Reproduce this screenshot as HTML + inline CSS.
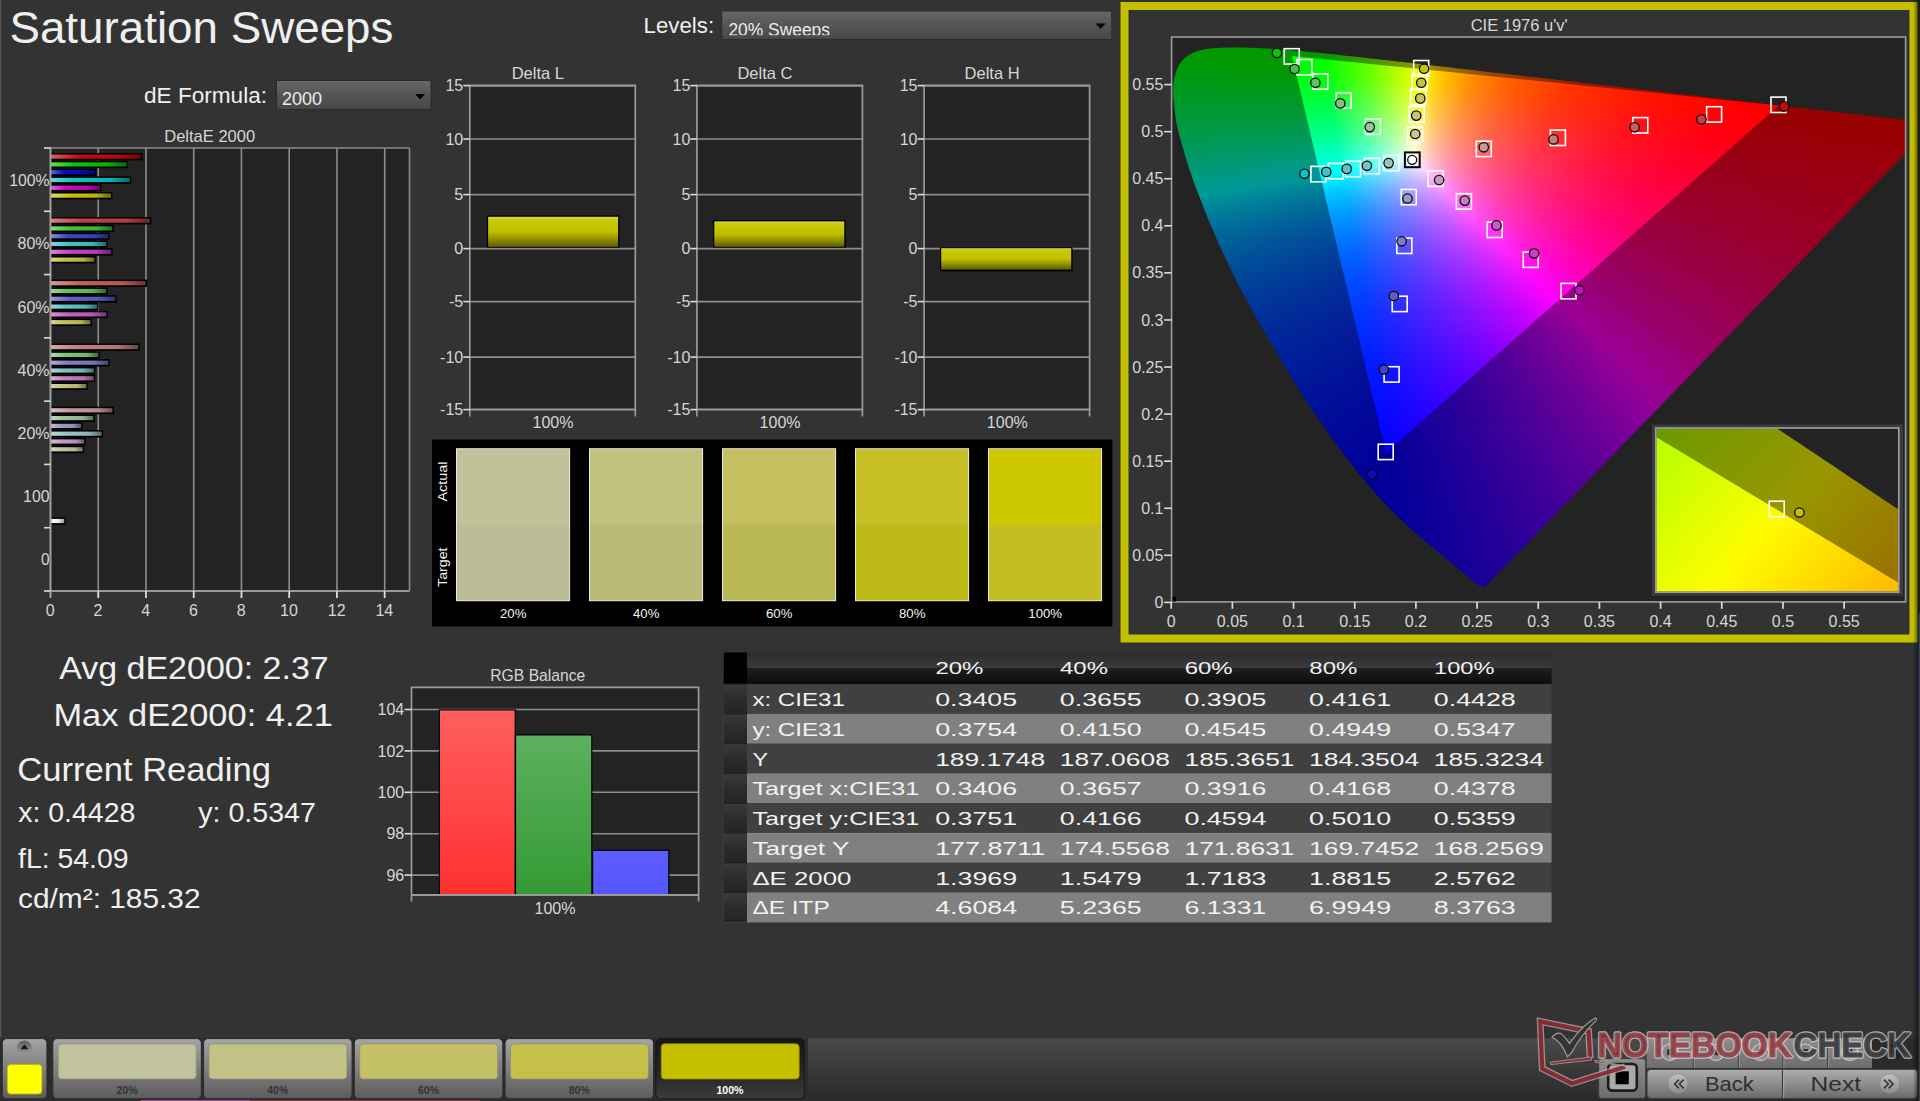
<!DOCTYPE html><html><head><meta charset="utf-8"><title>Saturation Sweeps</title><style>html,body{margin:0;padding:0;background:#333333;width:1920px;height:1101px;overflow:hidden;font-family:"Liberation Sans",sans-serif}text{white-space:pre}</style></head><body><svg width="1920" height="1101" viewBox="0 0 1920 1101" font-family="'Liberation Sans', sans-serif" style="position:absolute;left:0;top:0;display:block"><defs><linearGradient id="dd" x1="0" y1="0" x2="0" y2="1"><stop offset="0" stop-color="#676767"/><stop offset="0.5" stop-color="#555555"/><stop offset="1" stop-color="#474747"/></linearGradient><clipPath id="cplv"><rect x="722" y="11" width="389" height="24.2"/></clipPath><linearGradient id="b0"><stop offset="0" stop-color="#da6060"/><stop offset=".3" stop-color="#c60a0a"/><stop offset=".75" stop-color="#b60909"/><stop offset="1" stop-color="#6d0606"/></linearGradient><linearGradient id="b1"><stop offset="0" stop-color="#60d860"/><stop offset=".3" stop-color="#0ac30a"/><stop offset=".75" stop-color="#09b309"/><stop offset="1" stop-color="#066b06"/></linearGradient><linearGradient id="b2"><stop offset="0" stop-color="#6060da"/><stop offset=".3" stop-color="#0a0ac6"/><stop offset=".75" stop-color="#0909b6"/><stop offset="1" stop-color="#06066d"/></linearGradient><linearGradient id="b3"><stop offset="0" stop-color="#60d8d8"/><stop offset=".3" stop-color="#0ac3c3"/><stop offset=".75" stop-color="#09b3b3"/><stop offset="1" stop-color="#066b6b"/></linearGradient><linearGradient id="b4"><stop offset="0" stop-color="#da60da"/><stop offset=".3" stop-color="#c60ac6"/><stop offset=".75" stop-color="#b609b6"/><stop offset="1" stop-color="#6d066d"/></linearGradient><linearGradient id="b5"><stop offset="0" stop-color="#dad860"/><stop offset=".3" stop-color="#c6c30a"/><stop offset=".75" stop-color="#b6b309"/><stop offset="1" stop-color="#6d6b06"/></linearGradient><linearGradient id="b6"><stop offset="0" stop-color="#da8484"/><stop offset=".3" stop-color="#c64141"/><stop offset=".75" stop-color="#b63c3c"/><stop offset="1" stop-color="#6d2424"/></linearGradient><linearGradient id="b7"><stop offset="0" stop-color="#84d884"/><stop offset=".3" stop-color="#41c341"/><stop offset=".75" stop-color="#3cb33c"/><stop offset="1" stop-color="#246b24"/></linearGradient><linearGradient id="b8"><stop offset="0" stop-color="#8484da"/><stop offset=".3" stop-color="#4141c6"/><stop offset=".75" stop-color="#3c3cb6"/><stop offset="1" stop-color="#24246d"/></linearGradient><linearGradient id="b9"><stop offset="0" stop-color="#84d8d8"/><stop offset=".3" stop-color="#41c3c3"/><stop offset=".75" stop-color="#3cb3b3"/><stop offset="1" stop-color="#246b6b"/></linearGradient><linearGradient id="b10"><stop offset="0" stop-color="#da84da"/><stop offset=".3" stop-color="#c641c6"/><stop offset=".75" stop-color="#b63cb6"/><stop offset="1" stop-color="#6d246d"/></linearGradient><linearGradient id="b11"><stop offset="0" stop-color="#dad884"/><stop offset=".3" stop-color="#c6c341"/><stop offset=".75" stop-color="#b6b33c"/><stop offset="1" stop-color="#6d6b24"/></linearGradient><linearGradient id="b12"><stop offset="0" stop-color="#da9797"/><stop offset=".3" stop-color="#c65f5f"/><stop offset=".75" stop-color="#b65757"/><stop offset="1" stop-color="#6d3434"/></linearGradient><linearGradient id="b13"><stop offset="0" stop-color="#97d897"/><stop offset=".3" stop-color="#5fc35f"/><stop offset=".75" stop-color="#57b357"/><stop offset="1" stop-color="#346b34"/></linearGradient><linearGradient id="b14"><stop offset="0" stop-color="#9797da"/><stop offset=".3" stop-color="#5f5fc6"/><stop offset=".75" stop-color="#5757b6"/><stop offset="1" stop-color="#34346d"/></linearGradient><linearGradient id="b15"><stop offset="0" stop-color="#97d8d8"/><stop offset=".3" stop-color="#5fc3c3"/><stop offset=".75" stop-color="#57b3b3"/><stop offset="1" stop-color="#346b6b"/></linearGradient><linearGradient id="b16"><stop offset="0" stop-color="#da97da"/><stop offset=".3" stop-color="#c65fc6"/><stop offset=".75" stop-color="#b657b6"/><stop offset="1" stop-color="#6d346d"/></linearGradient><linearGradient id="b17"><stop offset="0" stop-color="#dad897"/><stop offset=".3" stop-color="#c6c35f"/><stop offset=".75" stop-color="#b6b357"/><stop offset="1" stop-color="#6d6b34"/></linearGradient><linearGradient id="b18"><stop offset="0" stop-color="#daaaaa"/><stop offset=".3" stop-color="#c67d7d"/><stop offset=".75" stop-color="#b67373"/><stop offset="1" stop-color="#6d4545"/></linearGradient><linearGradient id="b19"><stop offset="0" stop-color="#aad8aa"/><stop offset=".3" stop-color="#7dc37d"/><stop offset=".75" stop-color="#73b373"/><stop offset="1" stop-color="#456b45"/></linearGradient><linearGradient id="b20"><stop offset="0" stop-color="#aaaada"/><stop offset=".3" stop-color="#7d7dc6"/><stop offset=".75" stop-color="#7373b6"/><stop offset="1" stop-color="#45456d"/></linearGradient><linearGradient id="b21"><stop offset="0" stop-color="#aad8d8"/><stop offset=".3" stop-color="#7dc3c3"/><stop offset=".75" stop-color="#73b3b3"/><stop offset="1" stop-color="#456b6b"/></linearGradient><linearGradient id="b22"><stop offset="0" stop-color="#daaada"/><stop offset=".3" stop-color="#c67dc6"/><stop offset=".75" stop-color="#b673b6"/><stop offset="1" stop-color="#6d456d"/></linearGradient><linearGradient id="b23"><stop offset="0" stop-color="#dad8aa"/><stop offset=".3" stop-color="#c6c37d"/><stop offset=".75" stop-color="#b6b373"/><stop offset="1" stop-color="#6d6b45"/></linearGradient><linearGradient id="b24"><stop offset="0" stop-color="#dabebe"/><stop offset=".3" stop-color="#c69b9b"/><stop offset=".75" stop-color="#b68f8f"/><stop offset="1" stop-color="#6d5555"/></linearGradient><linearGradient id="b25"><stop offset="0" stop-color="#bed8be"/><stop offset=".3" stop-color="#9bc39b"/><stop offset=".75" stop-color="#8fb38f"/><stop offset="1" stop-color="#556b55"/></linearGradient><linearGradient id="b26"><stop offset="0" stop-color="#bebeda"/><stop offset=".3" stop-color="#9b9bc6"/><stop offset=".75" stop-color="#8f8fb6"/><stop offset="1" stop-color="#55556d"/></linearGradient><linearGradient id="b27"><stop offset="0" stop-color="#bed8d8"/><stop offset=".3" stop-color="#9bc3c3"/><stop offset=".75" stop-color="#8fb3b3"/><stop offset="1" stop-color="#556b6b"/></linearGradient><linearGradient id="b28"><stop offset="0" stop-color="#dabeda"/><stop offset=".3" stop-color="#c69bc6"/><stop offset=".75" stop-color="#b68fb6"/><stop offset="1" stop-color="#6d556d"/></linearGradient><linearGradient id="b29"><stop offset="0" stop-color="#dad8be"/><stop offset=".3" stop-color="#c6c39b"/><stop offset=".75" stop-color="#b6b38f"/><stop offset="1" stop-color="#6d6b55"/></linearGradient><linearGradient id="bw"><stop offset="0" stop-color="#ffffff"/><stop offset=".6" stop-color="#e8e8e8"/><stop offset="1" stop-color="#9a9a9a"/></linearGradient><linearGradient id="yb" x1="0" y1="0" x2="0" y2="1"><stop offset="0" stop-color="#dcdc48"/><stop offset=".09" stop-color="#cccb10"/><stop offset=".3" stop-color="#c4c400"/><stop offset=".5" stop-color="#c0c000"/><stop offset="1" stop-color="#5e5e00"/></linearGradient><linearGradient id="rr" x1="0" y1="0" x2="0" y2="1"><stop offset="0" stop-color="#ff5e5e"/><stop offset="1" stop-color="#ff3030"/></linearGradient><linearGradient id="rg" x1="0" y1="0" x2="0" y2="1"><stop offset="0" stop-color="#5eb05e"/><stop offset="1" stop-color="#349a34"/></linearGradient><linearGradient id="rb" x1="0" y1="0" x2="0" y2="1"><stop offset="0" stop-color="#5c5cff"/><stop offset="1" stop-color="#5656ff"/></linearGradient><linearGradient id="th" x1="0" y1="0" x2="0" y2="1"><stop offset="0" stop-color="#2c2c2c"/><stop offset="0.48" stop-color="#3a3a3a"/><stop offset="0.5" stop-color="#1f1f1f"/><stop offset="1" stop-color="#0c0c0c"/></linearGradient><linearGradient id="tr" x1="0" y1="0" x2="0" y2="1"><stop offset="0" stop-color="#3a3a3a"/><stop offset="0.5" stop-color="#2c2c2c"/><stop offset="1" stop-color="#242424"/></linearGradient><linearGradient id="bb" x1="0" y1="0" x2="0" y2="1"><stop offset="0" stop-color="#4a4a4a"/><stop offset="0.35" stop-color="#3e3e3e"/><stop offset="1" stop-color="#2a2a2a"/></linearGradient><linearGradient id="bt" x1="0" y1="0" x2="0" y2="1"><stop offset="0" stop-color="#a6a6a6"/><stop offset="0.12" stop-color="#9a9a9a"/><stop offset="1" stop-color="#5c5c5c"/></linearGradient><linearGradient id="bs" x1="0" y1="0" x2="0" y2="1"><stop offset="0" stop-color="#161616"/><stop offset="0.6" stop-color="#282828"/><stop offset="1" stop-color="#3c3c3c"/></linearGradient><linearGradient id="ic" x1="0" y1="0" x2="0" y2="1"><stop offset="0" stop-color="#5e5e5e"/><stop offset="1" stop-color="#9a9a9a"/></linearGradient><linearGradient id="g1" x1="0" y1="0" x2="0" y2="1"><stop offset="0" stop-color="#8e8e8e"/><stop offset="1" stop-color="#6c6c6c"/></linearGradient><linearGradient id="g2" x1="0" y1="0" x2="0" y2="1"><stop offset="0" stop-color="#adadad"/><stop offset="0.5" stop-color="#8e8e8e"/><stop offset="1" stop-color="#6a6a6a"/></linearGradient><linearGradient id="g3" x1="0" y1="0" x2="0" y2="1"><stop offset="0" stop-color="#c0c0c0"/><stop offset="1" stop-color="#8a8a8a"/></linearGradient><linearGradient id="rs" x1="0" y1="0" x2="1" y2="0"><stop offset="0" stop-color="#000" stop-opacity="0"/><stop offset="1" stop-color="#000" stop-opacity="0.55"/></linearGradient></defs><text x="9.4" y="42.5" font-size="44.7" fill="#efefef" textLength="384" lengthAdjust="spacingAndGlyphs">Saturation Sweeps</text>
<text x="144" y="103.2" font-size="21.4" fill="#efefef" textLength="123" lengthAdjust="spacingAndGlyphs">dE Formula:</text>
<rect x="276.5" y="80.5" width="154.5" height="29" fill="url(#dd)" stroke="#2b2b2b" stroke-width="1"/>
<text x="282" y="105" font-size="18" fill="#ececec" textLength="40" lengthAdjust="spacingAndGlyphs">2000</text>
<path d="M415.2,94 L425.2,94 L420.2,99.5Z" fill="#000"/>
<text x="643.6" y="33.3" font-size="21.6" fill="#efefef" textLength="70.5" lengthAdjust="spacingAndGlyphs">Levels:</text>
<rect x="721.7" y="11" width="390" height="28.6" fill="url(#dd)" stroke="#2b2b2b" stroke-width="1"/>
<g clip-path="url(#cplv)">
<text x="728.4" y="35.6" font-size="18" fill="#ececec" textLength="101.6" lengthAdjust="spacingAndGlyphs">20% Sweeps</text>
</g>
<path d="M1095.4,23.4 L1105.8,23.4 L1100.6,28.8Z" fill="#000"/>
<rect x="50.5" y="148" width="359" height="443" fill="#232323"/>
<line x1="98.24" y1="148" x2="98.24" y2="591" stroke="#8c8c8c" stroke-width="1.6"/>
<line x1="145.98" y1="148" x2="145.98" y2="591" stroke="#8c8c8c" stroke-width="1.6"/>
<line x1="193.72" y1="148" x2="193.72" y2="591" stroke="#8c8c8c" stroke-width="1.6"/>
<line x1="241.46" y1="148" x2="241.46" y2="591" stroke="#8c8c8c" stroke-width="1.6"/>
<line x1="289.2" y1="148" x2="289.2" y2="591" stroke="#8c8c8c" stroke-width="1.6"/>
<line x1="336.94" y1="148" x2="336.94" y2="591" stroke="#8c8c8c" stroke-width="1.6"/>
<line x1="384.68" y1="148" x2="384.68" y2="591" stroke="#8c8c8c" stroke-width="1.6"/>
<rect x="51" y="153" width="91.4608" height="7.4" fill="#000"/>
<rect x="51" y="154.5" width="90.0608" height="4.2" fill="url(#b0)"/>
<rect x="51" y="160.8" width="76.9001" height="7.4" fill="#000"/>
<rect x="51" y="162.3" width="75.5001" height="4.2" fill="url(#b1)"/>
<rect x="51" y="168.6" width="45.3917" height="7.4" fill="#000"/>
<rect x="51" y="170.1" width="43.9917" height="4.2" fill="url(#b2)"/>
<rect x="51" y="176.4" width="80.2419" height="7.4" fill="#000"/>
<rect x="51" y="177.9" width="78.8419" height="4.2" fill="url(#b3)"/>
<rect x="51" y="184.2" width="50.4044" height="7.4" fill="#000"/>
<rect x="51" y="185.7" width="49.0044" height="4.2" fill="url(#b4)"/>
<rect x="51" y="192" width="61.3846" height="7.4" fill="#000"/>
<rect x="51" y="193.5" width="59.9846" height="4.2" fill="url(#b5)"/>
<rect x="51" y="217" width="100.293" height="7.4" fill="#000"/>
<rect x="51" y="218.5" width="98.8927" height="4.2" fill="url(#b6)"/>
<rect x="51" y="224.8" width="62.8168" height="7.4" fill="#000"/>
<rect x="51" y="226.3" width="61.4168" height="4.2" fill="url(#b7)"/>
<rect x="51" y="232.6" width="58.7589" height="7.4" fill="#000"/>
<rect x="51" y="234.1" width="57.3589" height="4.2" fill="url(#b8)"/>
<rect x="51" y="240.4" width="56.6106" height="7.4" fill="#000"/>
<rect x="51" y="241.9" width="55.2106" height="4.2" fill="url(#b9)"/>
<rect x="51" y="248.2" width="61.6233" height="7.4" fill="#000"/>
<rect x="51" y="249.7" width="60.2233" height="4.2" fill="url(#b10)"/>
<rect x="51" y="256" width="44.6756" height="7.4" fill="#000"/>
<rect x="51" y="257.5" width="43.2756" height="4.2" fill="url(#b11)"/>
<rect x="51" y="279.6" width="95.9961" height="7.4" fill="#000"/>
<rect x="51" y="281.1" width="94.5961" height="4.2" fill="url(#b12)"/>
<rect x="51" y="287.4" width="56.6106" height="7.4" fill="#000"/>
<rect x="51" y="288.9" width="55.2106" height="4.2" fill="url(#b13)"/>
<rect x="51" y="295.2" width="65.9199" height="7.4" fill="#000"/>
<rect x="51" y="296.7" width="64.5199" height="4.2" fill="url(#b14)"/>
<rect x="51" y="303" width="47.54" height="7.4" fill="#000"/>
<rect x="51" y="304.5" width="46.14" height="4.2" fill="url(#b15)"/>
<rect x="51" y="310.8" width="56.8493" height="7.4" fill="#000"/>
<rect x="51" y="312.3" width="55.4493" height="4.2" fill="url(#b16)"/>
<rect x="51" y="318.6" width="40.8564" height="7.4" fill="#000"/>
<rect x="51" y="320.1" width="39.4564" height="4.2" fill="url(#b17)"/>
<rect x="51" y="343.5" width="88.5964" height="7.4" fill="#000"/>
<rect x="51" y="345" width="87.1964" height="4.2" fill="url(#b18)"/>
<rect x="51" y="351.3" width="48.7335" height="7.4" fill="#000"/>
<rect x="51" y="352.8" width="47.3335" height="4.2" fill="url(#b19)"/>
<rect x="51" y="359.1" width="58.7589" height="7.4" fill="#000"/>
<rect x="51" y="360.6" width="57.3589" height="4.2" fill="url(#b20)"/>
<rect x="51" y="366.9" width="44.1982" height="7.4" fill="#000"/>
<rect x="51" y="368.4" width="42.7982" height="4.2" fill="url(#b21)"/>
<rect x="51" y="374.7" width="44.1982" height="7.4" fill="#000"/>
<rect x="51" y="376.2" width="42.7982" height="4.2" fill="url(#b22)"/>
<rect x="51" y="382.5" width="36.7985" height="7.4" fill="#000"/>
<rect x="51" y="384" width="35.3985" height="4.2" fill="url(#b23)"/>
<rect x="51" y="406.7" width="62.8168" height="7.4" fill="#000"/>
<rect x="51" y="408.2" width="61.4168" height="4.2" fill="url(#b24)"/>
<rect x="51" y="414.5" width="43.7208" height="7.4" fill="#000"/>
<rect x="51" y="416" width="42.3208" height="4.2" fill="url(#b25)"/>
<rect x="51" y="422.3" width="31.5471" height="7.4" fill="#000"/>
<rect x="51" y="423.8" width="30.1471" height="4.2" fill="url(#b26)"/>
<rect x="51" y="430.1" width="52.0753" height="7.4" fill="#000"/>
<rect x="51" y="431.6" width="50.6753" height="4.2" fill="url(#b27)"/>
<rect x="51" y="437.9" width="34.6502" height="7.4" fill="#000"/>
<rect x="51" y="439.4" width="33.2502" height="4.2" fill="url(#b28)"/>
<rect x="51" y="445.7" width="33.218" height="7.4" fill="#000"/>
<rect x="51" y="447.2" width="31.818" height="4.2" fill="url(#b29)"/>
<rect x="51" y="517.4" width="14.6" height="7.4" fill="#000"/>
<rect x="51" y="518.9" width="13.2" height="4.2" fill="url(#bw)"/>
<line x1="50.2" y1="148" x2="409.5" y2="148" stroke="#8c8c8c" stroke-width="1.6"/>
<line x1="409.5" y1="148" x2="409.5" y2="591" stroke="#8c8c8c" stroke-width="1.6"/>
<line x1="50.5" y1="591" x2="409.5" y2="591" stroke="#9a9a9a" stroke-width="1.8"/>
<line x1="50.5" y1="147.2" x2="50.5" y2="598" stroke="#a0a0a0" stroke-width="2"/>
<line x1="44" y1="148" x2="50.5" y2="148" stroke="#dddddd" stroke-width="1.6"/>
<line x1="44" y1="211.286" x2="50.5" y2="211.286" stroke="#dddddd" stroke-width="1.6"/>
<line x1="44" y1="274.571" x2="50.5" y2="274.571" stroke="#dddddd" stroke-width="1.6"/>
<line x1="44" y1="337.857" x2="50.5" y2="337.857" stroke="#dddddd" stroke-width="1.6"/>
<line x1="44" y1="401.143" x2="50.5" y2="401.143" stroke="#dddddd" stroke-width="1.6"/>
<line x1="44" y1="464.429" x2="50.5" y2="464.429" stroke="#dddddd" stroke-width="1.6"/>
<line x1="44" y1="527.714" x2="50.5" y2="527.714" stroke="#dddddd" stroke-width="1.6"/>
<line x1="44" y1="591" x2="50.5" y2="591" stroke="#dddddd" stroke-width="1.6"/>
<line x1="98.24" y1="591" x2="98.24" y2="598" stroke="#dddddd" stroke-width="1.8"/>
<line x1="145.98" y1="591" x2="145.98" y2="598" stroke="#dddddd" stroke-width="1.8"/>
<line x1="193.72" y1="591" x2="193.72" y2="598" stroke="#dddddd" stroke-width="1.8"/>
<line x1="241.46" y1="591" x2="241.46" y2="598" stroke="#dddddd" stroke-width="1.8"/>
<line x1="289.2" y1="591" x2="289.2" y2="598" stroke="#dddddd" stroke-width="1.8"/>
<line x1="336.94" y1="591" x2="336.94" y2="598" stroke="#dddddd" stroke-width="1.8"/>
<line x1="384.68" y1="591" x2="384.68" y2="598" stroke="#dddddd" stroke-width="1.8"/>
<text x="49.6" y="186.4" font-size="16" fill="#d6d6d6" text-anchor="end" textLength="40.4" lengthAdjust="spacingAndGlyphs">100%</text>
<text x="49.6" y="248.8" font-size="16" fill="#d6d6d6" text-anchor="end" textLength="32" lengthAdjust="spacingAndGlyphs">80%</text>
<text x="49.6" y="313.3" font-size="16" fill="#d6d6d6" text-anchor="end" textLength="32" lengthAdjust="spacingAndGlyphs">60%</text>
<text x="49.6" y="375.8" font-size="16" fill="#d6d6d6" text-anchor="end" textLength="32" lengthAdjust="spacingAndGlyphs">40%</text>
<text x="49.6" y="438.8" font-size="16" fill="#d6d6d6" text-anchor="end" textLength="32" lengthAdjust="spacingAndGlyphs">20%</text>
<text x="49.6" y="501.8" font-size="16" fill="#d6d6d6" text-anchor="end" textLength="26.5" lengthAdjust="spacingAndGlyphs">100</text>
<text x="49.6" y="564.8" font-size="16" fill="#d6d6d6" text-anchor="end" textLength="8.6" lengthAdjust="spacingAndGlyphs">0</text>
<text x="50.2" y="615.7" font-size="16" fill="#d6d6d6" text-anchor="middle">0</text>
<text x="97.94" y="615.7" font-size="16" fill="#d6d6d6" text-anchor="middle">2</text>
<text x="145.68" y="615.7" font-size="16" fill="#d6d6d6" text-anchor="middle">4</text>
<text x="193.42" y="615.7" font-size="16" fill="#d6d6d6" text-anchor="middle">6</text>
<text x="241.16" y="615.7" font-size="16" fill="#d6d6d6" text-anchor="middle">8</text>
<text x="288.9" y="615.7" font-size="16" fill="#d6d6d6" text-anchor="middle">10</text>
<text x="336.64" y="615.7" font-size="16" fill="#d6d6d6" text-anchor="middle">12</text>
<text x="384.38" y="615.7" font-size="16" fill="#d6d6d6" text-anchor="middle">14</text>
<text x="164.2" y="142" font-size="16.6" fill="#d6d6d6" textLength="91" lengthAdjust="spacingAndGlyphs">DeltaE 2000</text>
<rect x="469.8" y="85.6" width="165.5" height="324" fill="#232323"/>
<line x1="469.8" y1="139" x2="635.3" y2="139" stroke="#8c8c8c" stroke-width="1.6"/>
<line x1="469.8" y1="194.6" x2="635.3" y2="194.6" stroke="#8c8c8c" stroke-width="1.6"/>
<line x1="469.8" y1="248.6" x2="635.3" y2="248.6" stroke="#8c8c8c" stroke-width="1.6"/>
<line x1="469.8" y1="301.6" x2="635.3" y2="301.6" stroke="#8c8c8c" stroke-width="1.6"/>
<line x1="469.8" y1="357.1" x2="635.3" y2="357.1" stroke="#8c8c8c" stroke-width="1.6"/>
<line x1="469" y1="85.6" x2="636.1" y2="85.6" stroke="#9a9a9a" stroke-width="2.2"/>
<line x1="469" y1="409.6" x2="636.1" y2="409.6" stroke="#9a9a9a" stroke-width="2"/>
<line x1="469.8" y1="85.6" x2="469.8" y2="416.6" stroke="#9a9a9a" stroke-width="1.7"/>
<line x1="635.3" y1="85.6" x2="635.3" y2="416.6" stroke="#9a9a9a" stroke-width="1.7"/>
<line x1="463.3" y1="85.6" x2="469.8" y2="85.6" stroke="#dddddd" stroke-width="1.6"/>
<text x="463.2" y="91.3" font-size="16" fill="#d6d6d6" text-anchor="end">15</text>
<line x1="463.3" y1="139" x2="469.8" y2="139" stroke="#dddddd" stroke-width="1.6"/>
<text x="463.2" y="144.7" font-size="16" fill="#d6d6d6" text-anchor="end">10</text>
<line x1="463.3" y1="194.6" x2="469.8" y2="194.6" stroke="#dddddd" stroke-width="1.6"/>
<text x="463.2" y="200.3" font-size="16" fill="#d6d6d6" text-anchor="end">5</text>
<line x1="463.3" y1="248.6" x2="469.8" y2="248.6" stroke="#dddddd" stroke-width="1.6"/>
<text x="463.2" y="254.3" font-size="16" fill="#d6d6d6" text-anchor="end">0</text>
<line x1="463.3" y1="301.6" x2="469.8" y2="301.6" stroke="#dddddd" stroke-width="1.6"/>
<text x="463.2" y="307.3" font-size="16" fill="#d6d6d6" text-anchor="end">-5</text>
<line x1="463.3" y1="357.1" x2="469.8" y2="357.1" stroke="#dddddd" stroke-width="1.6"/>
<text x="463.2" y="362.8" font-size="16" fill="#d6d6d6" text-anchor="end">-10</text>
<line x1="463.3" y1="409.6" x2="469.8" y2="409.6" stroke="#dddddd" stroke-width="1.6"/>
<text x="463.2" y="415.3" font-size="16" fill="#d6d6d6" text-anchor="end">-15</text>
<rect x="486.9" y="215.4" width="132.6" height="32.2" fill="#000"/>
<rect x="488.1" y="216.8" width="130" height="30" fill="url(#yb)"/>
<text x="537.8" y="79.4" font-size="16.5" fill="#d6d6d6" text-anchor="middle">Delta L</text>
<text x="553" y="428.2" font-size="16" fill="#d6d6d6" text-anchor="middle" textLength="41" lengthAdjust="spacingAndGlyphs">100%</text>
<rect x="696.9" y="85.6" width="165.5" height="324" fill="#232323"/>
<line x1="696.9" y1="139" x2="862.4" y2="139" stroke="#8c8c8c" stroke-width="1.6"/>
<line x1="696.9" y1="194.6" x2="862.4" y2="194.6" stroke="#8c8c8c" stroke-width="1.6"/>
<line x1="696.9" y1="248.6" x2="862.4" y2="248.6" stroke="#8c8c8c" stroke-width="1.6"/>
<line x1="696.9" y1="301.6" x2="862.4" y2="301.6" stroke="#8c8c8c" stroke-width="1.6"/>
<line x1="696.9" y1="357.1" x2="862.4" y2="357.1" stroke="#8c8c8c" stroke-width="1.6"/>
<line x1="696.1" y1="85.6" x2="863.2" y2="85.6" stroke="#9a9a9a" stroke-width="2.2"/>
<line x1="696.1" y1="409.6" x2="863.2" y2="409.6" stroke="#9a9a9a" stroke-width="2"/>
<line x1="696.9" y1="85.6" x2="696.9" y2="416.6" stroke="#9a9a9a" stroke-width="1.7"/>
<line x1="862.4" y1="85.6" x2="862.4" y2="416.6" stroke="#9a9a9a" stroke-width="1.7"/>
<line x1="690.4" y1="85.6" x2="696.9" y2="85.6" stroke="#dddddd" stroke-width="1.6"/>
<text x="690.3" y="91.3" font-size="16" fill="#d6d6d6" text-anchor="end">15</text>
<line x1="690.4" y1="139" x2="696.9" y2="139" stroke="#dddddd" stroke-width="1.6"/>
<text x="690.3" y="144.7" font-size="16" fill="#d6d6d6" text-anchor="end">10</text>
<line x1="690.4" y1="194.6" x2="696.9" y2="194.6" stroke="#dddddd" stroke-width="1.6"/>
<text x="690.3" y="200.3" font-size="16" fill="#d6d6d6" text-anchor="end">5</text>
<line x1="690.4" y1="248.6" x2="696.9" y2="248.6" stroke="#dddddd" stroke-width="1.6"/>
<text x="690.3" y="254.3" font-size="16" fill="#d6d6d6" text-anchor="end">0</text>
<line x1="690.4" y1="301.6" x2="696.9" y2="301.6" stroke="#dddddd" stroke-width="1.6"/>
<text x="690.3" y="307.3" font-size="16" fill="#d6d6d6" text-anchor="end">-5</text>
<line x1="690.4" y1="357.1" x2="696.9" y2="357.1" stroke="#dddddd" stroke-width="1.6"/>
<text x="690.3" y="362.8" font-size="16" fill="#d6d6d6" text-anchor="end">-10</text>
<line x1="690.4" y1="409.6" x2="696.9" y2="409.6" stroke="#dddddd" stroke-width="1.6"/>
<text x="690.3" y="415.3" font-size="16" fill="#d6d6d6" text-anchor="end">-15</text>
<rect x="713.1" y="220" width="132.6" height="27.6" fill="#000"/>
<rect x="714.3" y="221.4" width="130" height="25.4" fill="url(#yb)"/>
<text x="764.9" y="79.4" font-size="16.5" fill="#d6d6d6" text-anchor="middle">Delta C</text>
<text x="780.1" y="428.2" font-size="16" fill="#d6d6d6" text-anchor="middle" textLength="41" lengthAdjust="spacingAndGlyphs">100%</text>
<rect x="924.1" y="85.6" width="165.5" height="324" fill="#232323"/>
<line x1="924.1" y1="139" x2="1089.6" y2="139" stroke="#8c8c8c" stroke-width="1.6"/>
<line x1="924.1" y1="194.6" x2="1089.6" y2="194.6" stroke="#8c8c8c" stroke-width="1.6"/>
<line x1="924.1" y1="248.6" x2="1089.6" y2="248.6" stroke="#8c8c8c" stroke-width="1.6"/>
<line x1="924.1" y1="301.6" x2="1089.6" y2="301.6" stroke="#8c8c8c" stroke-width="1.6"/>
<line x1="924.1" y1="357.1" x2="1089.6" y2="357.1" stroke="#8c8c8c" stroke-width="1.6"/>
<line x1="923.3" y1="85.6" x2="1090.4" y2="85.6" stroke="#9a9a9a" stroke-width="2.2"/>
<line x1="923.3" y1="409.6" x2="1090.4" y2="409.6" stroke="#9a9a9a" stroke-width="2"/>
<line x1="924.1" y1="85.6" x2="924.1" y2="416.6" stroke="#9a9a9a" stroke-width="1.7"/>
<line x1="1089.6" y1="85.6" x2="1089.6" y2="416.6" stroke="#9a9a9a" stroke-width="1.7"/>
<line x1="917.6" y1="85.6" x2="924.1" y2="85.6" stroke="#dddddd" stroke-width="1.6"/>
<text x="917.5" y="91.3" font-size="16" fill="#d6d6d6" text-anchor="end">15</text>
<line x1="917.6" y1="139" x2="924.1" y2="139" stroke="#dddddd" stroke-width="1.6"/>
<text x="917.5" y="144.7" font-size="16" fill="#d6d6d6" text-anchor="end">10</text>
<line x1="917.6" y1="194.6" x2="924.1" y2="194.6" stroke="#dddddd" stroke-width="1.6"/>
<text x="917.5" y="200.3" font-size="16" fill="#d6d6d6" text-anchor="end">5</text>
<line x1="917.6" y1="248.6" x2="924.1" y2="248.6" stroke="#dddddd" stroke-width="1.6"/>
<text x="917.5" y="254.3" font-size="16" fill="#d6d6d6" text-anchor="end">0</text>
<line x1="917.6" y1="301.6" x2="924.1" y2="301.6" stroke="#dddddd" stroke-width="1.6"/>
<text x="917.5" y="307.3" font-size="16" fill="#d6d6d6" text-anchor="end">-5</text>
<line x1="917.6" y1="357.1" x2="924.1" y2="357.1" stroke="#dddddd" stroke-width="1.6"/>
<text x="917.5" y="362.8" font-size="16" fill="#d6d6d6" text-anchor="end">-10</text>
<line x1="917.6" y1="409.6" x2="924.1" y2="409.6" stroke="#dddddd" stroke-width="1.6"/>
<text x="917.5" y="415.3" font-size="16" fill="#d6d6d6" text-anchor="end">-15</text>
<rect x="940" y="247.2" width="132.6" height="24.2" fill="#000"/>
<rect x="941.2" y="248.2" width="130" height="21.4" fill="url(#yb)"/>
<text x="992.1" y="79.4" font-size="16.5" fill="#d6d6d6" text-anchor="middle">Delta H</text>
<text x="1007.3" y="428.2" font-size="16" fill="#d6d6d6" text-anchor="middle" textLength="41" lengthAdjust="spacingAndGlyphs">100%</text>
<rect x="1124.5" y="6" width="789" height="632.5" fill="#333333" stroke="#c4c000" stroke-width="8"/>
<rect x="1171.6" y="37" width="734" height="564.9" fill="#232323"/>
<defs><linearGradient id="o0" gradientUnits="userSpaceOnUse" x1="1200" x2="1289" y1="0" y2="0"><stop offset="0" stop-color="#009900"/><stop offset="1" stop-color="#009900"/></linearGradient><linearGradient id="o1" gradientUnits="userSpaceOnUse" x1="1191" x2="1321" y1="0" y2="0"><stop offset="0" stop-color="#009900"/><stop offset="1" stop-color="#009900"/></linearGradient><linearGradient id="o2" gradientUnits="userSpaceOnUse" x1="1186" x2="1350" y1="0" y2="0"><stop offset="0" stop-color="#009900"/><stop offset="0.841" stop-color="#039900"/><stop offset="1" stop-color="#239900"/></linearGradient><linearGradient id="o3" gradientUnits="userSpaceOnUse" x1="1182" x2="1377" y1="0" y2="0"><stop offset="0" stop-color="#009900"/><stop offset="0.732" stop-color="#039900"/><stop offset="1" stop-color="#4a9900"/></linearGradient><linearGradient id="o4" gradientUnits="userSpaceOnUse" x1="1180" x2="1404" y1="0" y2="0"><stop offset="0" stop-color="#009903"/><stop offset="0.643" stop-color="#029900"/><stop offset="0.911" stop-color="#549900"/><stop offset="1" stop-color="#769900"/></linearGradient><linearGradient id="o5" gradientUnits="userSpaceOnUse" x1="1178" x2="1430" y1="0" y2="0"><stop offset="0" stop-color="#009906"/><stop offset="0.579" stop-color="#019900"/><stop offset="0.81" stop-color="#519900"/><stop offset="0.976" stop-color="#999600"/><stop offset="1" stop-color="#998b00"/></linearGradient><linearGradient id="o6" gradientUnits="userSpaceOnUse" x1="1176" x2="1456" y1="0" y2="0"><stop offset="0" stop-color="#009908"/><stop offset="0.536" stop-color="#039900"/><stop offset="0.743" stop-color="#549900"/><stop offset="0.879" stop-color="#999900"/><stop offset="0.986" stop-color="#996b00"/><stop offset="1" stop-color="#996700"/></linearGradient><linearGradient id="o7" gradientUnits="userSpaceOnUse" x1="1175" x2="1482" y1="0" y2="0"><stop offset="0" stop-color="#00990b"/><stop offset="0.49" stop-color="#029900"/><stop offset="0.68" stop-color="#549900"/><stop offset="0.804" stop-color="#999900"/><stop offset="0.895" stop-color="#996d00"/><stop offset="1" stop-color="#994e00"/></linearGradient><linearGradient id="o8" gradientUnits="userSpaceOnUse" x1="1174" x2="1508" y1="0" y2="0"><stop offset="0" stop-color="#00990e"/><stop offset="0.455" stop-color="#029902"/><stop offset="0.629" stop-color="#549900"/><stop offset="0.743" stop-color="#999800"/><stop offset="0.826" stop-color="#996c00"/><stop offset="0.958" stop-color="#994500"/><stop offset="1" stop-color="#993c00"/></linearGradient><linearGradient id="o9" gradientUnits="userSpaceOnUse" x1="1173" x2="1534" y1="0" y2="0"><stop offset="0" stop-color="#009910"/><stop offset="0.428" stop-color="#039905"/><stop offset="0.583" stop-color="#549900"/><stop offset="0.689" stop-color="#999800"/><stop offset="0.767" stop-color="#996c00"/><stop offset="0.883" stop-color="#994600"/><stop offset="1" stop-color="#992f00"/></linearGradient><linearGradient id="o10" gradientUnits="userSpaceOnUse" x1="1172" x2="1560" y1="0" y2="0"><stop offset="0" stop-color="#009913"/><stop offset="0.402" stop-color="#039909"/><stop offset="0.546" stop-color="#549903"/><stop offset="0.644" stop-color="#999700"/><stop offset="0.716" stop-color="#996b00"/><stop offset="0.83" stop-color="#994400"/><stop offset="1" stop-color="#992400"/></linearGradient><linearGradient id="o11" gradientUnits="userSpaceOnUse" x1="1172" x2="1586" y1="0" y2="0"><stop offset="0" stop-color="#009916"/><stop offset="0.377" stop-color="#02990d"/><stop offset="0.512" stop-color="#549907"/><stop offset="0.604" stop-color="#999603"/><stop offset="0.671" stop-color="#996a00"/><stop offset="0.778" stop-color="#994300"/><stop offset="0.952" stop-color="#992200"/><stop offset="1" stop-color="#991c00"/></linearGradient><linearGradient id="o12" gradientUnits="userSpaceOnUse" x1="1172" x2="1612" y1="0" y2="0"><stop offset="0" stop-color="#009918"/><stop offset="0.355" stop-color="#029910"/><stop offset="0.482" stop-color="#54990b"/><stop offset="0.564" stop-color="#989908"/><stop offset="0.632" stop-color="#996a03"/><stop offset="0.732" stop-color="#994200"/><stop offset="0.895" stop-color="#992100"/><stop offset="1" stop-color="#991500"/></linearGradient><linearGradient id="o13" gradientUnits="userSpaceOnUse" x1="1172" x2="1638" y1="0" y2="0"><stop offset="0" stop-color="#00991b"/><stop offset="0.335" stop-color="#019914"/><stop offset="0.451" stop-color="#519910"/><stop offset="0.532" stop-color="#99990c"/><stop offset="0.592" stop-color="#996c06"/><stop offset="0.682" stop-color="#994501"/><stop offset="0.828" stop-color="#992300"/><stop offset="1" stop-color="#990f00"/></linearGradient><linearGradient id="o14" gradientUnits="userSpaceOnUse" x1="1172" x2="1664" y1="0" y2="0"><stop offset="0" stop-color="#00991e"/><stop offset="0.317" stop-color="#019918"/><stop offset="0.427" stop-color="#519914"/><stop offset="0.504" stop-color="#999911"/><stop offset="0.557" stop-color="#996e0a"/><stop offset="0.638" stop-color="#994704"/><stop offset="0.772" stop-color="#992500"/><stop offset="1" stop-color="#990a00"/></linearGradient><linearGradient id="o15" gradientUnits="userSpaceOnUse" x1="1172" x2="1690" y1="0" y2="0"><stop offset="0" stop-color="#009921"/><stop offset="0.305" stop-color="#03991b"/><stop offset="0.409" stop-color="#549918"/><stop offset="0.479" stop-color="#999816"/><stop offset="0.529" stop-color="#996d0e"/><stop offset="0.606" stop-color="#994607"/><stop offset="0.734" stop-color="#992401"/><stop offset="0.961" stop-color="#990900"/><stop offset="1" stop-color="#990600"/></linearGradient><linearGradient id="o16" gradientUnits="userSpaceOnUse" x1="1172" x2="1716" y1="0" y2="0"><stop offset="0" stop-color="#009923"/><stop offset="0.29" stop-color="#02991f"/><stop offset="0.39" stop-color="#54991d"/><stop offset="0.456" stop-color="#99981a"/><stop offset="0.504" stop-color="#996c12"/><stop offset="0.577" stop-color="#99460a"/><stop offset="0.699" stop-color="#992403"/><stop offset="0.919" stop-color="#990800"/><stop offset="1" stop-color="#990200"/></linearGradient><linearGradient id="o17" gradientUnits="userSpaceOnUse" x1="1172" x2="1742" y1="0" y2="0"><stop offset="0" stop-color="#009926"/><stop offset="0.277" stop-color="#019923"/><stop offset="0.372" stop-color="#549921"/><stop offset="0.435" stop-color="#99971f"/><stop offset="0.481" stop-color="#996c15"/><stop offset="0.551" stop-color="#99450d"/><stop offset="0.667" stop-color="#992305"/><stop offset="0.877" stop-color="#990800"/><stop offset="1" stop-color="#990000"/></linearGradient><linearGradient id="o18" gradientUnits="userSpaceOnUse" x1="1172" x2="1768" y1="0" y2="0"><stop offset="0" stop-color="#009929"/><stop offset="0.265" stop-color="#019927"/><stop offset="0.352" stop-color="#509926"/><stop offset="0.416" stop-color="#999624"/><stop offset="0.46" stop-color="#996b19"/><stop offset="0.527" stop-color="#99440f"/><stop offset="0.638" stop-color="#992307"/><stop offset="0.839" stop-color="#990700"/><stop offset="1" stop-color="#990000"/></linearGradient><linearGradient id="o19" gradientUnits="userSpaceOnUse" x1="1173" x2="1794" y1="0" y2="0"><stop offset="0" stop-color="#00992c"/><stop offset="0.255" stop-color="#02992b"/><stop offset="0.339" stop-color="#53992a"/><stop offset="0.397" stop-color="#999729"/><stop offset="0.439" stop-color="#996b1d"/><stop offset="0.503" stop-color="#994412"/><stop offset="0.61" stop-color="#992309"/><stop offset="0.803" stop-color="#990701"/><stop offset="0.955" stop-color="#990000"/><stop offset="1" stop-color="#990000"/></linearGradient><linearGradient id="o20" gradientUnits="userSpaceOnUse" x1="1173" x2="1820" y1="0" y2="0"><stop offset="0" stop-color="#00992f"/><stop offset="0.245" stop-color="#01992f"/><stop offset="0.325" stop-color="#53992f"/><stop offset="0.381" stop-color="#99962e"/><stop offset="0.421" stop-color="#996a21"/><stop offset="0.483" stop-color="#994315"/><stop offset="0.585" stop-color="#99220b"/><stop offset="0.771" stop-color="#990702"/><stop offset="0.913" stop-color="#990000"/><stop offset="1" stop-color="#990000"/></linearGradient><linearGradient id="o21" gradientUnits="userSpaceOnUse" x1="1173" x2="1846" y1="0" y2="0"><stop offset="0" stop-color="#009932"/><stop offset="0.235" stop-color="#009933"/><stop offset="0.312" stop-color="#539934"/><stop offset="0.363" stop-color="#989935"/><stop offset="0.405" stop-color="#996a25"/><stop offset="0.464" stop-color="#994318"/><stop offset="0.562" stop-color="#99220d"/><stop offset="0.741" stop-color="#990604"/><stop offset="0.878" stop-color="#990000"/><stop offset="1" stop-color="#990000"/></linearGradient><linearGradient id="o22" gradientUnits="userSpaceOnUse" x1="1174" x2="1872" y1="0" y2="0"><stop offset="0" stop-color="#009935"/><stop offset="0.226" stop-color="#019937"/><stop offset="0.298" stop-color="#509939"/><stop offset="0.35" stop-color="#99983a"/><stop offset="0.387" stop-color="#996b29"/><stop offset="0.441" stop-color="#99451c"/><stop offset="0.533" stop-color="#99230f"/><stop offset="0.699" stop-color="#990705"/><stop offset="0.831" stop-color="#990001"/><stop offset="1" stop-color="#990000"/></linearGradient><linearGradient id="o23" gradientUnits="userSpaceOnUse" x1="1174" x2="1898" y1="0" y2="0"><stop offset="0" stop-color="#009938"/><stop offset="0.221" stop-color="#03993c"/><stop offset="0.29" stop-color="#54993e"/><stop offset="0.337" stop-color="#99983f"/><stop offset="0.373" stop-color="#996a2d"/><stop offset="0.425" stop-color="#99441e"/><stop offset="0.514" stop-color="#992311"/><stop offset="0.674" stop-color="#990707"/><stop offset="0.801" stop-color="#990002"/><stop offset="1" stop-color="#990000"/></linearGradient><linearGradient id="o24" gradientUnits="userSpaceOnUse" x1="1174" x2="1906" y1="0" y2="0"><stop offset="0" stop-color="#00993b"/><stop offset="0.219" stop-color="#029940"/><stop offset="0.287" stop-color="#549943"/><stop offset="0.333" stop-color="#999744"/><stop offset="0.366" stop-color="#996c32"/><stop offset="0.418" stop-color="#994522"/><stop offset="0.503" stop-color="#992414"/><stop offset="0.656" stop-color="#990808"/><stop offset="0.781" stop-color="#990004"/><stop offset="1" stop-color="#990000"/></linearGradient><linearGradient id="o25" gradientUnits="userSpaceOnUse" x1="1175" x2="1906" y1="0" y2="0"><stop offset="0" stop-color="#00993e"/><stop offset="0.216" stop-color="#009945"/><stop offset="0.285" stop-color="#529948"/><stop offset="0.332" stop-color="#99984a"/><stop offset="0.364" stop-color="#996c37"/><stop offset="0.416" stop-color="#994525"/><stop offset="0.501" stop-color="#992316"/><stop offset="0.655" stop-color="#99070a"/><stop offset="0.778" stop-color="#990005"/><stop offset="1" stop-color="#990000"/></linearGradient><linearGradient id="o26" gradientUnits="userSpaceOnUse" x1="1175" x2="1906" y1="0" y2="0"><stop offset="0" stop-color="#009941"/><stop offset="0.219" stop-color="#039949"/><stop offset="0.285" stop-color="#52994d"/><stop offset="0.332" stop-color="#999750"/><stop offset="0.364" stop-color="#996c3b"/><stop offset="0.416" stop-color="#994428"/><stop offset="0.501" stop-color="#992318"/><stop offset="0.655" stop-color="#99070b"/><stop offset="0.775" stop-color="#990006"/><stop offset="1" stop-color="#990000"/></linearGradient><linearGradient id="o27" gradientUnits="userSpaceOnUse" x1="1176" x2="1906" y1="0" y2="0"><stop offset="0" stop-color="#009944"/><stop offset="0.216" stop-color="#00994e"/><stop offset="0.282" stop-color="#509952"/><stop offset="0.329" stop-color="#989957"/><stop offset="0.364" stop-color="#996a3f"/><stop offset="0.416" stop-color="#99432b"/><stop offset="0.501" stop-color="#99221a"/><stop offset="0.655" stop-color="#99070c"/><stop offset="0.775" stop-color="#990007"/><stop offset="1" stop-color="#990001"/></linearGradient><linearGradient id="o28" gradientUnits="userSpaceOnUse" x1="1177" x2="1906" y1="0" y2="0"><stop offset="0" stop-color="#009948"/><stop offset="0.217" stop-color="#019953"/><stop offset="0.283" stop-color="#529958"/><stop offset="0.327" stop-color="#97995d"/><stop offset="0.365" stop-color="#996742"/><stop offset="0.418" stop-color="#99412e"/><stop offset="0.505" stop-color="#99201c"/><stop offset="0.665" stop-color="#99050d"/><stop offset="0.794" stop-color="#990007"/><stop offset="1" stop-color="#990002"/></linearGradient><linearGradient id="o29" gradientUnits="userSpaceOnUse" x1="1178" x2="1906" y1="0" y2="0"><stop offset="0" stop-color="#00994b"/><stop offset="0.217" stop-color="#029957"/><stop offset="0.283" stop-color="#54995e"/><stop offset="0.327" stop-color="#999863"/><stop offset="0.36" stop-color="#996b49"/><stop offset="0.409" stop-color="#994533"/><stop offset="0.492" stop-color="#992320"/><stop offset="0.64" stop-color="#990710"/><stop offset="0.758" stop-color="#99000a"/><stop offset="1" stop-color="#990003"/></linearGradient><linearGradient id="o30" gradientUnits="userSpaceOnUse" x1="1178" x2="1906" y1="0" y2="0"><stop offset="0" stop-color="#00994e"/><stop offset="0.217" stop-color="#01995c"/><stop offset="0.283" stop-color="#549963"/><stop offset="0.327" stop-color="#999869"/><stop offset="0.36" stop-color="#996b4e"/><stop offset="0.409" stop-color="#994436"/><stop offset="0.492" stop-color="#992322"/><stop offset="0.64" stop-color="#990711"/><stop offset="0.758" stop-color="#99000b"/><stop offset="1" stop-color="#990003"/></linearGradient><linearGradient id="o31" gradientUnits="userSpaceOnUse" x1="1179" x2="1906" y1="0" y2="0"><stop offset="0" stop-color="#009951"/><stop offset="0.218" stop-color="#029961"/><stop offset="0.281" stop-color="#529969"/><stop offset="0.325" stop-color="#999870"/><stop offset="0.358" stop-color="#996b53"/><stop offset="0.408" stop-color="#99443a"/><stop offset="0.488" stop-color="#992325"/><stop offset="0.634" stop-color="#990713"/><stop offset="0.749" stop-color="#99000c"/><stop offset="1" stop-color="#990004"/></linearGradient><linearGradient id="o32" gradientUnits="userSpaceOnUse" x1="1180" x2="1906" y1="0" y2="0"><stop offset="0" stop-color="#009955"/><stop offset="0.218" stop-color="#039966"/><stop offset="0.281" stop-color="#53996f"/><stop offset="0.325" stop-color="#999674"/><stop offset="0.358" stop-color="#996956"/><stop offset="0.408" stop-color="#99433d"/><stop offset="0.49" stop-color="#992126"/><stop offset="0.639" stop-color="#990614"/><stop offset="0.755" stop-color="#99000d"/><stop offset="1" stop-color="#990005"/></linearGradient><linearGradient id="o33" gradientUnits="userSpaceOnUse" x1="1181" x2="1906" y1="0" y2="0"><stop offset="0" stop-color="#009958"/><stop offset="0.215" stop-color="#01996b"/><stop offset="0.279" stop-color="#529975"/><stop offset="0.323" stop-color="#99977c"/><stop offset="0.354" stop-color="#996c5e"/><stop offset="0.401" stop-color="#994643"/><stop offset="0.478" stop-color="#99242b"/><stop offset="0.619" stop-color="#990817"/><stop offset="0.738" stop-color="#99000f"/><stop offset="1" stop-color="#990006"/></linearGradient><linearGradient id="o34" gradientUnits="userSpaceOnUse" x1="1182" x2="1906" y1="0" y2="0"><stop offset="0" stop-color="#00995c"/><stop offset="0.215" stop-color="#019971"/><stop offset="0.279" stop-color="#53997b"/><stop offset="0.32" stop-color="#989984"/><stop offset="0.354" stop-color="#996b62"/><stop offset="0.401" stop-color="#994546"/><stop offset="0.478" stop-color="#99232d"/><stop offset="0.619" stop-color="#990819"/><stop offset="0.735" stop-color="#990010"/><stop offset="1" stop-color="#990006"/></linearGradient><linearGradient id="o35" gradientUnits="userSpaceOnUse" x1="1183" x2="1906" y1="0" y2="0"><stop offset="0" stop-color="#009960"/><stop offset="0.216" stop-color="#029976"/><stop offset="0.277" stop-color="#529981"/><stop offset="0.319" stop-color="#97998b"/><stop offset="0.355" stop-color="#996865"/><stop offset="0.404" stop-color="#994147"/><stop offset="0.488" stop-color="#99202d"/><stop offset="0.64" stop-color="#990518"/><stop offset="0.767" stop-color="#990010"/><stop offset="1" stop-color="#990007"/></linearGradient><linearGradient id="o36" gradientUnits="userSpaceOnUse" x1="1183" x2="1905" y1="0" y2="0"><stop offset="0" stop-color="#009963"/><stop offset="0.216" stop-color="#01997c"/><stop offset="0.277" stop-color="#519987"/><stop offset="0.319" stop-color="#979992"/><stop offset="0.355" stop-color="#99686a"/><stop offset="0.404" stop-color="#99414b"/><stop offset="0.485" stop-color="#992030"/><stop offset="0.634" stop-color="#99051a"/><stop offset="0.753" stop-color="#990012"/><stop offset="1" stop-color="#990008"/></linearGradient><linearGradient id="o37" gradientUnits="userSpaceOnUse" x1="1184" x2="1902" y1="0" y2="0"><stop offset="0" stop-color="#009967"/><stop offset="0.217" stop-color="#029982"/><stop offset="0.279" stop-color="#53998e"/><stop offset="0.32" stop-color="#999898"/><stop offset="0.351" stop-color="#996b73"/><stop offset="0.398" stop-color="#994451"/><stop offset="0.476" stop-color="#992335"/><stop offset="0.616" stop-color="#99071e"/><stop offset="0.727" stop-color="#990015"/><stop offset="1" stop-color="#990009"/></linearGradient><linearGradient id="o38" gradientUnits="userSpaceOnUse" x1="1185" x2="1899" y1="0" y2="0"><stop offset="0" stop-color="#00996b"/><stop offset="0.218" stop-color="#039987"/><stop offset="0.28" stop-color="#559995"/><stop offset="0.322" stop-color="#969199"/><stop offset="0.359" stop-color="#996371"/><stop offset="0.409" stop-color="#993e50"/><stop offset="0.493" stop-color="#991e34"/><stop offset="0.65" stop-color="#99031c"/><stop offset="1" stop-color="#99000a"/></linearGradient><linearGradient id="o39" gradientUnits="userSpaceOnUse" x1="1186" x2="1896" y1="0" y2="0"><stop offset="0" stop-color="#00996f"/><stop offset="0.217" stop-color="#01998d"/><stop offset="0.282" stop-color="#569699"/><stop offset="0.33" stop-color="#998898"/><stop offset="0.363" stop-color="#995e72"/><stop offset="0.417" stop-color="#993950"/><stop offset="0.507" stop-color="#991a33"/><stop offset="0.676" stop-color="#99001b"/><stop offset="1" stop-color="#99000b"/></linearGradient><linearGradient id="o40" gradientUnits="userSpaceOnUse" x1="1187" x2="1894" y1="0" y2="0"><stop offset="0" stop-color="#009972"/><stop offset="0.212" stop-color="#009992"/><stop offset="0.227" stop-color="#0c9995"/><stop offset="0.283" stop-color="#548f99"/><stop offset="0.334" stop-color="#998097"/><stop offset="0.371" stop-color="#995770"/><stop offset="0.431" stop-color="#99324d"/><stop offset="0.533" stop-color="#991430"/><stop offset="0.691" stop-color="#99001c"/><stop offset="1" stop-color="#99000b"/></linearGradient><linearGradient id="o41" gradientUnits="userSpaceOnUse" x1="1188" x2="1891" y1="0" y2="0"><stop offset="0" stop-color="#009976"/><stop offset="0.208" stop-color="#009997"/><stop offset="0.219" stop-color="#039999"/><stop offset="0.339" stop-color="#997997"/><stop offset="0.379" stop-color="#99506f"/><stop offset="0.442" stop-color="#992d4c"/><stop offset="0.553" stop-color="#99102f"/><stop offset="0.698" stop-color="#99001c"/><stop offset="1" stop-color="#99000c"/></linearGradient><linearGradient id="o42" gradientUnits="userSpaceOnUse" x1="1189" x2="1888" y1="0" y2="0"><stop offset="0" stop-color="#00997a"/><stop offset="0.203" stop-color="#009699"/><stop offset="0.221" stop-color="#039299"/><stop offset="0.344" stop-color="#997297"/><stop offset="0.384" stop-color="#994c70"/><stop offset="0.45" stop-color="#992a4c"/><stop offset="0.564" stop-color="#990e2f"/><stop offset="0.699" stop-color="#99001e"/><stop offset="1" stop-color="#99000d"/></linearGradient><linearGradient id="o43" gradientUnits="userSpaceOnUse" x1="1190" x2="1885" y1="0" y2="0"><stop offset="0" stop-color="#00997f"/><stop offset="0.179" stop-color="#009699"/><stop offset="0.219" stop-color="#018d99"/><stop offset="0.343" stop-color="#936f99"/><stop offset="0.354" stop-color="#996691"/><stop offset="0.401" stop-color="#994169"/><stop offset="0.476" stop-color="#992146"/><stop offset="0.608" stop-color="#99072a"/><stop offset="0.715" stop-color="#99001e"/><stop offset="1" stop-color="#99000e"/></linearGradient><linearGradient id="o44" gradientUnits="userSpaceOnUse" x1="1191" x2="1882" y1="0" y2="0"><stop offset="0" stop-color="#009983"/><stop offset="0.154" stop-color="#009699"/><stop offset="0.22" stop-color="#028899"/><stop offset="0.348" stop-color="#936999"/><stop offset="0.359" stop-color="#996091"/><stop offset="0.406" stop-color="#993e6a"/><stop offset="0.481" stop-color="#991f47"/><stop offset="0.614" stop-color="#99062b"/><stop offset="0.722" stop-color="#99001f"/><stop offset="1" stop-color="#99000f"/></linearGradient><linearGradient id="o45" gradientUnits="userSpaceOnUse" x1="1192" x2="1879" y1="0" y2="0"><stop offset="0" stop-color="#009987"/><stop offset="0.128" stop-color="#009699"/><stop offset="0.222" stop-color="#028399"/><stop offset="0.353" stop-color="#936499"/><stop offset="0.364" stop-color="#995b91"/><stop offset="0.414" stop-color="#993969"/><stop offset="0.493" stop-color="#991c47"/><stop offset="0.633" stop-color="#99032a"/><stop offset="0.88" stop-color="#990015"/><stop offset="1" stop-color="#990010"/></linearGradient><linearGradient id="o46" gradientUnits="userSpaceOnUse" x1="1193" x2="1876" y1="0" y2="0"><stop offset="0" stop-color="#00998b"/><stop offset="0.103" stop-color="#009699"/><stop offset="0.22" stop-color="#007e99"/><stop offset="0.358" stop-color="#945e99"/><stop offset="0.37" stop-color="#995791"/><stop offset="0.419" stop-color="#99366a"/><stop offset="0.501" stop-color="#991947"/><stop offset="0.645" stop-color="#99022a"/><stop offset="0.938" stop-color="#990014"/><stop offset="1" stop-color="#990011"/></linearGradient><linearGradient id="o47" gradientUnits="userSpaceOnUse" x1="1195" x2="1873" y1="0" y2="0"><stop offset="0" stop-color="#009990"/><stop offset="0.08" stop-color="#009599"/><stop offset="0.221" stop-color="#027999"/><stop offset="0.363" stop-color="#955999"/><stop offset="0.381" stop-color="#994d8b"/><stop offset="0.437" stop-color="#992e63"/><stop offset="0.528" stop-color="#991342"/><stop offset="0.678" stop-color="#990028"/><stop offset="1" stop-color="#990012"/></linearGradient><linearGradient id="o48" gradientUnits="userSpaceOnUse" x1="1196" x2="1870" y1="0" y2="0"><stop offset="0" stop-color="#009994"/><stop offset="0.074" stop-color="#009199"/><stop offset="0.223" stop-color="#037599"/><stop offset="0.368" stop-color="#955499"/><stop offset="0.389" stop-color="#994788"/><stop offset="0.448" stop-color="#992961"/><stop offset="0.546" stop-color="#990f40"/><stop offset="0.685" stop-color="#990029"/><stop offset="1" stop-color="#990013"/></linearGradient><linearGradient id="o49" gradientUnits="userSpaceOnUse" x1="1197" x2="1867" y1="0" y2="0"><stop offset="0" stop-color="#009999"/><stop offset="0.221" stop-color="#017199"/><stop offset="0.37" stop-color="#925199"/><stop offset="0.382" stop-color="#994b94"/><stop offset="0.436" stop-color="#992d6c"/><stop offset="0.522" stop-color="#991449"/><stop offset="0.672" stop-color="#99002c"/><stop offset="0.976" stop-color="#990015"/><stop offset="1" stop-color="#990014"/></linearGradient><linearGradient id="o50" gradientUnits="userSpaceOnUse" x1="1198" x2="1864" y1="0" y2="0"><stop offset="0" stop-color="#009499"/><stop offset="0.222" stop-color="#016d99"/><stop offset="0.378" stop-color="#954c99"/><stop offset="0.402" stop-color="#993d87"/><stop offset="0.465" stop-color="#992260"/><stop offset="0.571" stop-color="#990b3f"/><stop offset="0.688" stop-color="#99002c"/><stop offset="1" stop-color="#990015"/></linearGradient><linearGradient id="o51" gradientUnits="userSpaceOnUse" x1="1199" x2="1862" y1="0" y2="0"><stop offset="0" stop-color="#009099"/><stop offset="0.224" stop-color="#026999"/><stop offset="0.384" stop-color="#964799"/><stop offset="0.447" stop-color="#99286d"/><stop offset="0.538" stop-color="#99104a"/><stop offset="0.677" stop-color="#99002f"/><stop offset="0.973" stop-color="#990017"/><stop offset="1" stop-color="#990016"/></linearGradient><linearGradient id="o52" gradientUnits="userSpaceOnUse" x1="1200" x2="1859" y1="0" y2="0"><stop offset="0" stop-color="#008c99"/><stop offset="0.225" stop-color="#036599"/><stop offset="0.389" stop-color="#964399"/><stop offset="0.462" stop-color="#992369"/><stop offset="0.559" stop-color="#990c47"/><stop offset="0.681" stop-color="#990031"/><stop offset="0.976" stop-color="#990018"/><stop offset="1" stop-color="#990017"/></linearGradient><linearGradient id="o53" gradientUnits="userSpaceOnUse" x1="1202" x2="1856" y1="0" y2="0"><stop offset="0" stop-color="#008899"/><stop offset="0.223" stop-color="#026299"/><stop offset="0.391" stop-color="#944099"/><stop offset="0.404" stop-color="#993b93"/><stop offset="0.465" stop-color="#99216b"/><stop offset="0.563" stop-color="#990b48"/><stop offset="0.679" stop-color="#990033"/><stop offset="0.966" stop-color="#99001a"/><stop offset="1" stop-color="#990018"/></linearGradient><linearGradient id="o54" gradientUnits="userSpaceOnUse" x1="1203" x2="1853" y1="0" y2="0"><stop offset="0" stop-color="#008499"/><stop offset="0.225" stop-color="#025f99"/><stop offset="0.403" stop-color="#993b98"/><stop offset="0.462" stop-color="#992270"/><stop offset="0.557" stop-color="#990c4c"/><stop offset="0.674" stop-color="#990035"/><stop offset="0.948" stop-color="#99001c"/><stop offset="1" stop-color="#990019"/></linearGradient><linearGradient id="o55" gradientUnits="userSpaceOnUse" x1="1204" x2="1850" y1="0" y2="0"><stop offset="0" stop-color="#008099"/><stop offset="0.226" stop-color="#035b99"/><stop offset="0.409" stop-color="#993898"/><stop offset="0.471" stop-color="#991f6f"/><stop offset="0.57" stop-color="#99094c"/><stop offset="0.678" stop-color="#990037"/><stop offset="0.95" stop-color="#99001d"/><stop offset="1" stop-color="#99001a"/></linearGradient><linearGradient id="o56" gradientUnits="userSpaceOnUse" x1="1205" x2="1847" y1="0" y2="0"><stop offset="0" stop-color="#007d99"/><stop offset="0.224" stop-color="#015999"/><stop offset="0.408" stop-color="#943699"/><stop offset="0.424" stop-color="#993091"/><stop offset="0.492" stop-color="#991869"/><stop offset="0.601" stop-color="#990547"/><stop offset="0.713" stop-color="#990033"/><stop offset="1" stop-color="#99001c"/></linearGradient><linearGradient id="o57" gradientUnits="userSpaceOnUse" x1="1206" x2="1844" y1="0" y2="0"><stop offset="0" stop-color="#007999"/><stop offset="0.226" stop-color="#025699"/><stop offset="0.414" stop-color="#943399"/><stop offset="0.429" stop-color="#992d91"/><stop offset="0.498" stop-color="#991769"/><stop offset="0.611" stop-color="#990347"/><stop offset="0.812" stop-color="#99002a"/><stop offset="1" stop-color="#99001d"/></linearGradient><linearGradient id="o58" gradientUnits="userSpaceOnUse" x1="1208" x2="1841" y1="0" y2="0"><stop offset="0" stop-color="#007699"/><stop offset="0.225" stop-color="#025399"/><stop offset="0.418" stop-color="#943099"/><stop offset="0.43" stop-color="#992c94"/><stop offset="0.5" stop-color="#99166c"/><stop offset="0.611" stop-color="#990349"/><stop offset="0.807" stop-color="#99002c"/><stop offset="1" stop-color="#99001e"/></linearGradient><linearGradient id="o59" gradientUnits="userSpaceOnUse" x1="1209" x2="1838" y1="0" y2="0"><stop offset="0" stop-color="#007399"/><stop offset="0.226" stop-color="#025099"/><stop offset="0.427" stop-color="#962c99"/><stop offset="0.513" stop-color="#99136a"/><stop offset="0.631" stop-color="#990047"/><stop offset="0.841" stop-color="#99002a"/><stop offset="1" stop-color="#99001f"/></linearGradient><linearGradient id="o60" gradientUnits="userSpaceOnUse" x1="1210" x2="1835" y1="0" y2="0"><stop offset="0" stop-color="#006f99"/><stop offset="0.228" stop-color="#034d99"/><stop offset="0.433" stop-color="#962999"/><stop offset="0.519" stop-color="#99116a"/><stop offset="0.638" stop-color="#990048"/><stop offset="0.849" stop-color="#99002b"/><stop offset="1" stop-color="#990020"/></linearGradient><linearGradient id="o61" gradientUnits="userSpaceOnUse" x1="1211" x2="1832" y1="0" y2="0"><stop offset="0" stop-color="#006c99"/><stop offset="0.229" stop-color="#034b99"/><stop offset="0.439" stop-color="#962799"/><stop offset="0.526" stop-color="#990f6b"/><stop offset="0.648" stop-color="#990048"/><stop offset="0.865" stop-color="#99002b"/><stop offset="1" stop-color="#990021"/></linearGradient><linearGradient id="o62" gradientUnits="userSpaceOnUse" x1="1213" x2="1830" y1="0" y2="0"><stop offset="0" stop-color="#006999"/><stop offset="0.227" stop-color="#024999"/><stop offset="0.442" stop-color="#952499"/><stop offset="0.471" stop-color="#991c89"/><stop offset="0.558" stop-color="#990962"/><stop offset="0.659" stop-color="#990048"/><stop offset="0.883" stop-color="#99002b"/><stop offset="1" stop-color="#990023"/></linearGradient><linearGradient id="o63" gradientUnits="userSpaceOnUse" x1="1214" x2="1827" y1="0" y2="0"><stop offset="0" stop-color="#006799"/><stop offset="0.229" stop-color="#034699"/><stop offset="0.448" stop-color="#952299"/><stop offset="0.477" stop-color="#991a89"/><stop offset="0.565" stop-color="#990862"/><stop offset="0.66" stop-color="#99004a"/><stop offset="0.879" stop-color="#99002d"/><stop offset="1" stop-color="#990024"/></linearGradient><linearGradient id="o64" gradientUnits="userSpaceOnUse" x1="1215" x2="1824" y1="0" y2="0"><stop offset="0" stop-color="#006499"/><stop offset="0.227" stop-color="#014499"/><stop offset="0.454" stop-color="#951f99"/><stop offset="0.487" stop-color="#991787"/><stop offset="0.579" stop-color="#990561"/><stop offset="0.678" stop-color="#990049"/><stop offset="0.908" stop-color="#99002c"/><stop offset="1" stop-color="#990025"/></linearGradient><linearGradient id="o65" gradientUnits="userSpaceOnUse" x1="1217" x2="1821" y1="0" y2="0"><stop offset="0" stop-color="#006199"/><stop offset="0.228" stop-color="#034299"/><stop offset="0.46" stop-color="#961d99"/><stop offset="0.56" stop-color="#99086a"/><stop offset="0.656" stop-color="#99004f"/><stop offset="0.864" stop-color="#990031"/><stop offset="1" stop-color="#990026"/></linearGradient><linearGradient id="o66" gradientUnits="userSpaceOnUse" x1="1218" x2="1818" y1="0" y2="0"><stop offset="0" stop-color="#005f99"/><stop offset="0.227" stop-color="#014099"/><stop offset="0.463" stop-color="#941b99"/><stop offset="0.487" stop-color="#99168f"/><stop offset="0.577" stop-color="#990567"/><stop offset="0.677" stop-color="#99004d"/><stop offset="0.9" stop-color="#99002f"/><stop offset="1" stop-color="#990028"/></linearGradient><linearGradient id="o67" gradientUnits="userSpaceOnUse" x1="1219" x2="1815" y1="0" y2="0"><stop offset="0" stop-color="#005c99"/><stop offset="0.228" stop-color="#023e99"/><stop offset="0.47" stop-color="#941999"/><stop offset="0.493" stop-color="#99148f"/><stop offset="0.584" stop-color="#990468"/><stop offset="0.732" stop-color="#990046"/><stop offset="0.997" stop-color="#990029"/><stop offset="1" stop-color="#990029"/></linearGradient><linearGradient id="o68" gradientUnits="userSpaceOnUse" x1="1221" x2="1812" y1="0" y2="0"><stop offset="0" stop-color="#005a99"/><stop offset="0.227" stop-color="#013c99"/><stop offset="0.478" stop-color="#961799"/><stop offset="0.529" stop-color="#990c80"/><stop offset="0.637" stop-color="#99005b"/><stop offset="0.82" stop-color="#99003b"/><stop offset="1" stop-color="#99002a"/></linearGradient><linearGradient id="o69" gradientUnits="userSpaceOnUse" x1="1222" x2="1809" y1="0" y2="0"><stop offset="0" stop-color="#005799"/><stop offset="0.229" stop-color="#023a99"/><stop offset="0.485" stop-color="#961499"/><stop offset="0.543" stop-color="#99097d"/><stop offset="0.638" stop-color="#99005d"/><stop offset="0.819" stop-color="#99003d"/><stop offset="1" stop-color="#99002c"/></linearGradient><linearGradient id="o70" gradientUnits="userSpaceOnUse" x1="1223" x2="1806" y1="0" y2="0"><stop offset="0" stop-color="#005599"/><stop offset="0.23" stop-color="#023899"/><stop offset="0.491" stop-color="#961399"/><stop offset="0.557" stop-color="#99067b"/><stop offset="0.646" stop-color="#99005e"/><stop offset="0.832" stop-color="#99003d"/><stop offset="1" stop-color="#99002d"/></linearGradient><linearGradient id="o71" gradientUnits="userSpaceOnUse" x1="1225" x2="1803" y1="0" y2="0"><stop offset="0" stop-color="#005399"/><stop offset="0.228" stop-color="#023799"/><stop offset="0.495" stop-color="#941199"/><stop offset="0.519" stop-color="#990c90"/><stop offset="0.619" stop-color="#990068"/><stop offset="0.782" stop-color="#990046"/><stop offset="1" stop-color="#99002e"/></linearGradient><linearGradient id="o72" gradientUnits="userSpaceOnUse" x1="1226" x2="1800" y1="0" y2="0"><stop offset="0" stop-color="#005199"/><stop offset="0.23" stop-color="#023599"/><stop offset="0.505" stop-color="#960f99"/><stop offset="0.62" stop-color="#99006a"/><stop offset="0.78" stop-color="#990048"/><stop offset="1" stop-color="#990030"/></linearGradient><linearGradient id="o73" gradientUnits="userSpaceOnUse" x1="1228" x2="1798" y1="0" y2="0"><stop offset="0" stop-color="#004e99"/><stop offset="0.228" stop-color="#023399"/><stop offset="0.509" stop-color="#950d99"/><stop offset="0.544" stop-color="#99078a"/><stop offset="0.632" stop-color="#990069"/><stop offset="0.796" stop-color="#990047"/><stop offset="1" stop-color="#990031"/></linearGradient><linearGradient id="o74" gradientUnits="userSpaceOnUse" x1="1229" x2="1795" y1="0" y2="0"><stop offset="0" stop-color="#004c99"/><stop offset="0.23" stop-color="#023299"/><stop offset="0.516" stop-color="#950b99"/><stop offset="0.555" stop-color="#990589"/><stop offset="0.65" stop-color="#990067"/><stop offset="0.827" stop-color="#990045"/><stop offset="1" stop-color="#990032"/></linearGradient><linearGradient id="o75" gradientUnits="userSpaceOnUse" x1="1231" x2="1792" y1="0" y2="0"><stop offset="0" stop-color="#004a99"/><stop offset="0.229" stop-color="#023099"/><stop offset="0.521" stop-color="#950a99"/><stop offset="0.554" stop-color="#99058d"/><stop offset="0.65" stop-color="#99006a"/><stop offset="0.825" stop-color="#990047"/><stop offset="1" stop-color="#990034"/></linearGradient><linearGradient id="o76" gradientUnits="userSpaceOnUse" x1="1232" x2="1789" y1="0" y2="0"><stop offset="0" stop-color="#004899"/><stop offset="0.23" stop-color="#022f99"/><stop offset="0.529" stop-color="#950899"/><stop offset="0.561" stop-color="#99038d"/><stop offset="0.676" stop-color="#990065"/><stop offset="0.867" stop-color="#990043"/><stop offset="1" stop-color="#990035"/></linearGradient><linearGradient id="o77" gradientUnits="userSpaceOnUse" x1="1234" x2="1786" y1="0" y2="0"><stop offset="0" stop-color="#004699"/><stop offset="0.228" stop-color="#022d99"/><stop offset="0.536" stop-color="#960699"/><stop offset="0.587" stop-color="#990085"/><stop offset="0.717" stop-color="#99005e"/><stop offset="0.935" stop-color="#99003d"/><stop offset="1" stop-color="#990037"/></linearGradient><linearGradient id="o78" gradientUnits="userSpaceOnUse" x1="1235" x2="1783" y1="0" y2="0"><stop offset="0" stop-color="#004599"/><stop offset="0.23" stop-color="#022c99"/><stop offset="0.544" stop-color="#960599"/><stop offset="0.599" stop-color="#990084"/><stop offset="0.734" stop-color="#99005d"/><stop offset="0.956" stop-color="#99003d"/><stop offset="1" stop-color="#990038"/></linearGradient><linearGradient id="o79" gradientUnits="userSpaceOnUse" x1="1237" x2="1780" y1="0" y2="0"><stop offset="0" stop-color="#004399"/><stop offset="0.229" stop-color="#022a99"/><stop offset="0.55" stop-color="#950399"/><stop offset="0.59" stop-color="#99008a"/><stop offset="0.72" stop-color="#990063"/><stop offset="0.93" stop-color="#990041"/><stop offset="1" stop-color="#99003a"/></linearGradient><linearGradient id="o80" gradientUnits="userSpaceOnUse" x1="1238" x2="1777" y1="0" y2="0"><stop offset="0" stop-color="#004199"/><stop offset="0.23" stop-color="#022999"/><stop offset="0.558" stop-color="#950299"/><stop offset="0.599" stop-color="#99008a"/><stop offset="0.729" stop-color="#990063"/><stop offset="0.944" stop-color="#990041"/><stop offset="1" stop-color="#99003c"/></linearGradient><linearGradient id="o81" gradientUnits="userSpaceOnUse" x1="1240" x2="1774" y1="0" y2="0"><stop offset="0" stop-color="#003f99"/><stop offset="0.232" stop-color="#032799"/><stop offset="0.566" stop-color="#960099"/><stop offset="0.64" stop-color="#99007e"/><stop offset="0.794" stop-color="#990058"/><stop offset="1" stop-color="#99003d"/></linearGradient><linearGradient id="o82" gradientUnits="userSpaceOnUse" x1="1241" x2="1771" y1="0" y2="0"><stop offset="0" stop-color="#003e99"/><stop offset="0.23" stop-color="#022699"/><stop offset="0.574" stop-color="#960099"/><stop offset="0.66" stop-color="#99007a"/><stop offset="0.823" stop-color="#990056"/><stop offset="1" stop-color="#99003f"/></linearGradient><linearGradient id="o83" gradientUnits="userSpaceOnUse" x1="1243" x2="1769" y1="0" y2="0"><stop offset="0" stop-color="#003c99"/><stop offset="0.232" stop-color="#032599"/><stop offset="0.582" stop-color="#970099"/><stop offset="0.726" stop-color="#99006b"/><stop offset="0.932" stop-color="#990048"/><stop offset="1" stop-color="#990040"/></linearGradient><linearGradient id="o84" gradientUnits="userSpaceOnUse" x1="1244" x2="1766" y1="0" y2="0"><stop offset="0" stop-color="#003a99"/><stop offset="0.23" stop-color="#022499"/><stop offset="0.586" stop-color="#950099"/><stop offset="0.628" stop-color="#99008b"/><stop offset="0.77" stop-color="#990064"/><stop offset="1" stop-color="#990042"/></linearGradient><linearGradient id="o85" gradientUnits="userSpaceOnUse" x1="1246" x2="1763" y1="0" y2="0"><stop offset="0" stop-color="#003999"/><stop offset="0.233" stop-color="#032299"/><stop offset="0.581" stop-color="#900099"/><stop offset="0.612" stop-color="#990095"/><stop offset="0.744" stop-color="#99006c"/><stop offset="0.953" stop-color="#990049"/><stop offset="1" stop-color="#990044"/></linearGradient><linearGradient id="o86" gradientUnits="userSpaceOnUse" x1="1248" x2="1760" y1="0" y2="0"><stop offset="0" stop-color="#003799"/><stop offset="0.23" stop-color="#032199"/><stop offset="0.578" stop-color="#8b0099"/><stop offset="0.617" stop-color="#990096"/><stop offset="0.75" stop-color="#99006d"/><stop offset="0.961" stop-color="#99004a"/><stop offset="1" stop-color="#990046"/></linearGradient><linearGradient id="o87" gradientUnits="userSpaceOnUse" x1="1249" x2="1757" y1="0" y2="0"><stop offset="0" stop-color="#003699"/><stop offset="0.232" stop-color="#032099"/><stop offset="0.575" stop-color="#860099"/><stop offset="0.626" stop-color="#990096"/><stop offset="0.76" stop-color="#99006d"/><stop offset="0.976" stop-color="#99004a"/><stop offset="1" stop-color="#990047"/></linearGradient><linearGradient id="o88" gradientUnits="userSpaceOnUse" x1="1251" x2="1754" y1="0" y2="0"><stop offset="0" stop-color="#003499"/><stop offset="0.231" stop-color="#031f99"/><stop offset="0.574" stop-color="#830099"/><stop offset="0.633" stop-color="#990097"/><stop offset="0.769" stop-color="#99006e"/><stop offset="0.988" stop-color="#99004b"/><stop offset="1" stop-color="#990049"/></linearGradient><linearGradient id="o89" gradientUnits="userSpaceOnUse" x1="1253" x2="1751" y1="0" y2="0"><stop offset="0" stop-color="#003399"/><stop offset="0.229" stop-color="#021e99"/><stop offset="0.57" stop-color="#7f0099"/><stop offset="0.643" stop-color="#990096"/><stop offset="0.783" stop-color="#99006d"/><stop offset="1" stop-color="#99004b"/></linearGradient><linearGradient id="o90" gradientUnits="userSpaceOnUse" x1="1254" x2="1748" y1="0" y2="0"><stop offset="0" stop-color="#003199"/><stop offset="0.231" stop-color="#021d99"/><stop offset="0.567" stop-color="#7b0099"/><stop offset="0.652" stop-color="#990096"/><stop offset="0.794" stop-color="#99006e"/><stop offset="1" stop-color="#99004d"/></linearGradient><linearGradient id="o91" gradientUnits="userSpaceOnUse" x1="1256" x2="1745" y1="0" y2="0"><stop offset="0" stop-color="#003099"/><stop offset="0.23" stop-color="#021c99"/><stop offset="0.561" stop-color="#760099"/><stop offset="0.66" stop-color="#990097"/><stop offset="0.803" stop-color="#99006e"/><stop offset="1" stop-color="#99004f"/></linearGradient><linearGradient id="o92" gradientUnits="userSpaceOnUse" x1="1258" x2="1742" y1="0" y2="0"><stop offset="0" stop-color="#002e99"/><stop offset="0.231" stop-color="#031b99"/><stop offset="0.558" stop-color="#720099"/><stop offset="0.669" stop-color="#990097"/><stop offset="0.818" stop-color="#99006e"/><stop offset="1" stop-color="#990051"/></linearGradient><linearGradient id="o93" gradientUnits="userSpaceOnUse" x1="1260" x2="1739" y1="0" y2="0"><stop offset="0" stop-color="#002d99"/><stop offset="0.23" stop-color="#031a99"/><stop offset="0.552" stop-color="#6e0099"/><stop offset="0.678" stop-color="#990097"/><stop offset="0.828" stop-color="#99006e"/><stop offset="1" stop-color="#990053"/></linearGradient><linearGradient id="o94" gradientUnits="userSpaceOnUse" x1="1261" x2="1737" y1="0" y2="0"><stop offset="0" stop-color="#002c99"/><stop offset="0.231" stop-color="#031999"/><stop offset="0.55" stop-color="#6b0099"/><stop offset="0.689" stop-color="#990096"/><stop offset="0.845" stop-color="#99006d"/><stop offset="1" stop-color="#990055"/></linearGradient><linearGradient id="o95" gradientUnits="userSpaceOnUse" x1="1263" x2="1734" y1="0" y2="0"><stop offset="0" stop-color="#002a99"/><stop offset="0.23" stop-color="#031899"/><stop offset="0.545" stop-color="#670099"/><stop offset="0.698" stop-color="#990096"/><stop offset="0.855" stop-color="#99006e"/><stop offset="1" stop-color="#990057"/></linearGradient><linearGradient id="o96" gradientUnits="userSpaceOnUse" x1="1265" x2="1731" y1="0" y2="0"><stop offset="0" stop-color="#002999"/><stop offset="0.227" stop-color="#021799"/><stop offset="0.541" stop-color="#640099"/><stop offset="0.708" stop-color="#990096"/><stop offset="0.871" stop-color="#99006d"/><stop offset="1" stop-color="#990059"/></linearGradient><linearGradient id="o97" gradientUnits="userSpaceOnUse" x1="1266" x2="1728" y1="0" y2="0"><stop offset="0" stop-color="#002899"/><stop offset="0.229" stop-color="#031699"/><stop offset="0.541" stop-color="#610099"/><stop offset="0.719" stop-color="#990096"/><stop offset="0.883" stop-color="#99006d"/><stop offset="1" stop-color="#99005b"/></linearGradient><linearGradient id="o98" gradientUnits="userSpaceOnUse" x1="1268" x2="1725" y1="0" y2="0"><stop offset="0" stop-color="#002799"/><stop offset="0.228" stop-color="#021699"/><stop offset="0.535" stop-color="#5e0099"/><stop offset="0.728" stop-color="#990096"/><stop offset="0.899" stop-color="#99006d"/><stop offset="1" stop-color="#99005d"/></linearGradient><linearGradient id="o99" gradientUnits="userSpaceOnUse" x1="1270" x2="1722" y1="0" y2="0"><stop offset="0" stop-color="#002699"/><stop offset="0.226" stop-color="#021599"/><stop offset="0.531" stop-color="#5a0099"/><stop offset="0.739" stop-color="#990096"/><stop offset="0.912" stop-color="#99006d"/><stop offset="1" stop-color="#99005f"/></linearGradient><linearGradient id="o100" gradientUnits="userSpaceOnUse" x1="1272" x2="1719" y1="0" y2="0"><stop offset="0" stop-color="#002499"/><stop offset="0.229" stop-color="#031499"/><stop offset="0.529" stop-color="#580099"/><stop offset="0.749" stop-color="#990096"/><stop offset="0.928" stop-color="#99006d"/><stop offset="1" stop-color="#990062"/></linearGradient><linearGradient id="o101" gradientUnits="userSpaceOnUse" x1="1273" x2="1716" y1="0" y2="0"><stop offset="0" stop-color="#002399"/><stop offset="0.226" stop-color="#021399"/><stop offset="0.525" stop-color="#550099"/><stop offset="0.76" stop-color="#990096"/><stop offset="0.941" stop-color="#99006d"/><stop offset="1" stop-color="#990064"/></linearGradient><linearGradient id="o102" gradientUnits="userSpaceOnUse" x1="1275" x2="1713" y1="0" y2="0"><stop offset="0" stop-color="#002299"/><stop offset="0.228" stop-color="#031299"/><stop offset="0.521" stop-color="#520099"/><stop offset="0.772" stop-color="#990096"/><stop offset="0.959" stop-color="#99006d"/><stop offset="1" stop-color="#990066"/></linearGradient><linearGradient id="o103" gradientUnits="userSpaceOnUse" x1="1277" x2="1710" y1="0" y2="0"><stop offset="0" stop-color="#002199"/><stop offset="0.227" stop-color="#031299"/><stop offset="0.514" stop-color="#4f0099"/><stop offset="0.782" stop-color="#990096"/><stop offset="0.972" stop-color="#99006d"/><stop offset="1" stop-color="#990069"/></linearGradient><linearGradient id="o104" gradientUnits="userSpaceOnUse" x1="1279" x2="1707" y1="0" y2="0"><stop offset="0" stop-color="#002099"/><stop offset="0.224" stop-color="#021199"/><stop offset="0.509" stop-color="#4c0099"/><stop offset="0.794" stop-color="#990096"/><stop offset="0.986" stop-color="#99006e"/><stop offset="1" stop-color="#99006b"/></linearGradient><linearGradient id="o105" gradientUnits="userSpaceOnUse" x1="1281" x2="1705" y1="0" y2="0"><stop offset="0" stop-color="#001f99"/><stop offset="0.226" stop-color="#031099"/><stop offset="0.505" stop-color="#490099"/><stop offset="0.802" stop-color="#990097"/><stop offset="1" stop-color="#99006e"/></linearGradient><linearGradient id="o106" gradientUnits="userSpaceOnUse" x1="1282" x2="1702" y1="0" y2="0"><stop offset="0" stop-color="#001e99"/><stop offset="0.224" stop-color="#020f99"/><stop offset="0.5" stop-color="#470099"/><stop offset="0.814" stop-color="#990097"/><stop offset="1" stop-color="#990070"/></linearGradient><linearGradient id="o107" gradientUnits="userSpaceOnUse" x1="1284" x2="1699" y1="0" y2="0"><stop offset="0" stop-color="#001d99"/><stop offset="0.227" stop-color="#030e99"/><stop offset="0.498" stop-color="#450099"/><stop offset="0.826" stop-color="#990097"/><stop offset="1" stop-color="#990073"/></linearGradient><linearGradient id="o108" gradientUnits="userSpaceOnUse" x1="1286" x2="1696" y1="0" y2="0"><stop offset="0" stop-color="#001c99"/><stop offset="0.224" stop-color="#030e99"/><stop offset="0.493" stop-color="#420099"/><stop offset="0.839" stop-color="#990097"/><stop offset="1" stop-color="#990075"/></linearGradient><linearGradient id="o109" gradientUnits="userSpaceOnUse" x1="1288" x2="1693" y1="0" y2="0"><stop offset="0" stop-color="#001b99"/><stop offset="0.223" stop-color="#030d99"/><stop offset="0.485" stop-color="#3f0099"/><stop offset="0.851" stop-color="#990097"/><stop offset="1" stop-color="#990078"/></linearGradient><linearGradient id="o110" gradientUnits="userSpaceOnUse" x1="1290" x2="1690" y1="0" y2="0"><stop offset="0" stop-color="#001a99"/><stop offset="0.22" stop-color="#020d99"/><stop offset="0.48" stop-color="#3d0099"/><stop offset="0.865" stop-color="#990097"/><stop offset="1" stop-color="#99007b"/></linearGradient><linearGradient id="o111" gradientUnits="userSpaceOnUse" x1="1292" x2="1687" y1="0" y2="0"><stop offset="0" stop-color="#001999"/><stop offset="0.223" stop-color="#030c99"/><stop offset="0.477" stop-color="#3b0099"/><stop offset="0.878" stop-color="#990097"/><stop offset="1" stop-color="#99007e"/></linearGradient><linearGradient id="o112" gradientUnits="userSpaceOnUse" x1="1294" x2="1684" y1="0" y2="0"><stop offset="0" stop-color="#001899"/><stop offset="0.221" stop-color="#030b99"/><stop offset="0.472" stop-color="#390099"/><stop offset="0.892" stop-color="#990097"/><stop offset="1" stop-color="#990081"/></linearGradient><linearGradient id="o113" gradientUnits="userSpaceOnUse" x1="1295" x2="1681" y1="0" y2="0"><stop offset="0" stop-color="#001799"/><stop offset="0.223" stop-color="#030b99"/><stop offset="0.472" stop-color="#370099"/><stop offset="0.907" stop-color="#990097"/><stop offset="1" stop-color="#990084"/></linearGradient><linearGradient id="o114" gradientUnits="userSpaceOnUse" x1="1297" x2="1678" y1="0" y2="0"><stop offset="0" stop-color="#001699"/><stop offset="0.221" stop-color="#030a99"/><stop offset="0.468" stop-color="#360099"/><stop offset="0.926" stop-color="#990096"/><stop offset="1" stop-color="#990087"/></linearGradient><linearGradient id="o115" gradientUnits="userSpaceOnUse" x1="1299" x2="1675" y1="0" y2="0"><stop offset="0" stop-color="#001599"/><stop offset="0.218" stop-color="#020999"/><stop offset="0.463" stop-color="#340099"/><stop offset="0.941" stop-color="#990096"/><stop offset="1" stop-color="#99008a"/></linearGradient><linearGradient id="o116" gradientUnits="userSpaceOnUse" x1="1301" x2="1673" y1="0" y2="0"><stop offset="0" stop-color="#001499"/><stop offset="0.22" stop-color="#030999"/><stop offset="0.457" stop-color="#320099"/><stop offset="0.952" stop-color="#990097"/><stop offset="1" stop-color="#99008d"/></linearGradient><linearGradient id="o117" gradientUnits="userSpaceOnUse" x1="1303" x2="1670" y1="0" y2="0"><stop offset="0" stop-color="#001399"/><stop offset="0.219" stop-color="#030899"/><stop offset="0.454" stop-color="#300099"/><stop offset="0.967" stop-color="#990097"/><stop offset="1" stop-color="#990090"/></linearGradient><linearGradient id="o118" gradientUnits="userSpaceOnUse" x1="1305" x2="1667" y1="0" y2="0"><stop offset="0" stop-color="#001399"/><stop offset="0.215" stop-color="#030899"/><stop offset="0.453" stop-color="#2f0099"/><stop offset="0.983" stop-color="#990097"/><stop offset="1" stop-color="#990093"/></linearGradient><linearGradient id="o119" gradientUnits="userSpaceOnUse" x1="1307" x2="1664" y1="0" y2="0"><stop offset="0" stop-color="#001299"/><stop offset="0.213" stop-color="#020799"/><stop offset="0.455" stop-color="#2f0099"/><stop offset="1" stop-color="#990097"/></linearGradient><linearGradient id="o120" gradientUnits="userSpaceOnUse" x1="1309" x2="1661" y1="0" y2="0"><stop offset="0" stop-color="#001199"/><stop offset="0.216" stop-color="#030699"/><stop offset="0.455" stop-color="#2e0099"/><stop offset="1" stop-color="#980099"/></linearGradient><linearGradient id="o121" gradientUnits="userSpaceOnUse" x1="1311" x2="1658" y1="0" y2="0"><stop offset="0" stop-color="#001099"/><stop offset="0.214" stop-color="#030699"/><stop offset="0.462" stop-color="#2e0099"/><stop offset="1" stop-color="#940099"/></linearGradient><linearGradient id="o122" gradientUnits="userSpaceOnUse" x1="1313" x2="1655" y1="0" y2="0"><stop offset="0" stop-color="#000f99"/><stop offset="0.211" stop-color="#030599"/><stop offset="0.462" stop-color="#2e0099"/><stop offset="1" stop-color="#910099"/></linearGradient><linearGradient id="o123" gradientUnits="userSpaceOnUse" x1="1315" x2="1652" y1="0" y2="0"><stop offset="0" stop-color="#000e99"/><stop offset="0.214" stop-color="#030599"/><stop offset="0.494" stop-color="#320099"/><stop offset="1" stop-color="#8e0099"/></linearGradient><linearGradient id="o124" gradientUnits="userSpaceOnUse" x1="1317" x2="1649" y1="0" y2="0"><stop offset="0" stop-color="#000e99"/><stop offset="0.211" stop-color="#030499"/><stop offset="0.542" stop-color="#390099"/><stop offset="1" stop-color="#8a0099"/></linearGradient><linearGradient id="o125" gradientUnits="userSpaceOnUse" x1="1319" x2="1646" y1="0" y2="0"><stop offset="0" stop-color="#000d99"/><stop offset="0.209" stop-color="#030499"/><stop offset="0.632" stop-color="#470099"/><stop offset="1" stop-color="#870099"/></linearGradient><linearGradient id="o126" gradientUnits="userSpaceOnUse" x1="1321" x2="1643" y1="0" y2="0"><stop offset="0" stop-color="#000c99"/><stop offset="0.211" stop-color="#030399"/><stop offset="1" stop-color="#840099"/></linearGradient><linearGradient id="o127" gradientUnits="userSpaceOnUse" x1="1323" x2="1641" y1="0" y2="0"><stop offset="0" stop-color="#000b99"/><stop offset="0.208" stop-color="#030399"/><stop offset="1" stop-color="#820099"/></linearGradient><linearGradient id="o128" gradientUnits="userSpaceOnUse" x1="1325" x2="1638" y1="0" y2="0"><stop offset="0" stop-color="#000b99"/><stop offset="0.205" stop-color="#030299"/><stop offset="1" stop-color="#7f0099"/></linearGradient><linearGradient id="o129" gradientUnits="userSpaceOnUse" x1="1327" x2="1635" y1="0" y2="0"><stop offset="0" stop-color="#000a99"/><stop offset="0.201" stop-color="#030299"/><stop offset="1" stop-color="#7c0099"/></linearGradient><linearGradient id="o130" gradientUnits="userSpaceOnUse" x1="1330" x2="1632" y1="0" y2="0"><stop offset="0" stop-color="#000999"/><stop offset="0.199" stop-color="#030199"/><stop offset="1" stop-color="#790099"/></linearGradient><linearGradient id="o131" gradientUnits="userSpaceOnUse" x1="1332" x2="1629" y1="0" y2="0"><stop offset="0" stop-color="#000899"/><stop offset="0.196" stop-color="#030199"/><stop offset="1" stop-color="#760099"/></linearGradient><linearGradient id="o132" gradientUnits="userSpaceOnUse" x1="1334" x2="1626" y1="0" y2="0"><stop offset="0" stop-color="#000899"/><stop offset="0.199" stop-color="#030099"/><stop offset="1" stop-color="#730099"/></linearGradient><linearGradient id="o133" gradientUnits="userSpaceOnUse" x1="1336" x2="1623" y1="0" y2="0"><stop offset="0" stop-color="#000799"/><stop offset="0.196" stop-color="#030099"/><stop offset="1" stop-color="#700099"/></linearGradient><linearGradient id="o134" gradientUnits="userSpaceOnUse" x1="1338" x2="1620" y1="0" y2="0"><stop offset="0" stop-color="#000699"/><stop offset="0.191" stop-color="#030099"/><stop offset="1" stop-color="#6e0099"/></linearGradient><linearGradient id="o135" gradientUnits="userSpaceOnUse" x1="1341" x2="1617" y1="0" y2="0"><stop offset="0" stop-color="#000699"/><stop offset="0.188" stop-color="#030099"/><stop offset="1" stop-color="#6b0099"/></linearGradient><linearGradient id="o136" gradientUnits="userSpaceOnUse" x1="1343" x2="1614" y1="0" y2="0"><stop offset="0" stop-color="#000599"/><stop offset="0.185" stop-color="#030099"/><stop offset="1" stop-color="#690099"/></linearGradient><linearGradient id="o137" gradientUnits="userSpaceOnUse" x1="1345" x2="1611" y1="0" y2="0"><stop offset="0" stop-color="#000499"/><stop offset="0.188" stop-color="#030099"/><stop offset="1" stop-color="#660099"/></linearGradient><linearGradient id="o138" gradientUnits="userSpaceOnUse" x1="1347" x2="1609" y1="0" y2="0"><stop offset="0" stop-color="#000499"/><stop offset="0.183" stop-color="#030099"/><stop offset="1" stop-color="#640099"/></linearGradient><linearGradient id="o139" gradientUnits="userSpaceOnUse" x1="1350" x2="1606" y1="0" y2="0"><stop offset="0" stop-color="#000399"/><stop offset="0.18" stop-color="#030099"/><stop offset="1" stop-color="#620099"/></linearGradient><linearGradient id="o140" gradientUnits="userSpaceOnUse" x1="1352" x2="1603" y1="0" y2="0"><stop offset="0" stop-color="#000299"/><stop offset="0.176" stop-color="#030099"/><stop offset="1" stop-color="#5f0099"/></linearGradient><linearGradient id="o141" gradientUnits="userSpaceOnUse" x1="1355" x2="1600" y1="0" y2="0"><stop offset="0" stop-color="#000299"/><stop offset="0.172" stop-color="#030099"/><stop offset="1" stop-color="#5d0099"/></linearGradient><linearGradient id="o142" gradientUnits="userSpaceOnUse" x1="1357" x2="1597" y1="0" y2="0"><stop offset="0" stop-color="#000199"/><stop offset="0.175" stop-color="#040099"/><stop offset="1" stop-color="#5a0099"/></linearGradient><linearGradient id="o143" gradientUnits="userSpaceOnUse" x1="1359" x2="1594" y1="0" y2="0"><stop offset="0" stop-color="#000099"/><stop offset="0.171" stop-color="#040099"/><stop offset="1" stop-color="#580099"/></linearGradient><linearGradient id="o144" gradientUnits="userSpaceOnUse" x1="1362" x2="1591" y1="0" y2="0"><stop offset="0" stop-color="#000099"/><stop offset="0.167" stop-color="#040099"/><stop offset="1" stop-color="#560099"/></linearGradient><linearGradient id="o145" gradientUnits="userSpaceOnUse" x1="1364" x2="1588" y1="0" y2="0"><stop offset="0" stop-color="#000099"/><stop offset="0.161" stop-color="#040099"/><stop offset="1" stop-color="#540099"/></linearGradient><linearGradient id="o146" gradientUnits="userSpaceOnUse" x1="1367" x2="1585" y1="0" y2="0"><stop offset="0" stop-color="#000099"/><stop offset="0.156" stop-color="#040099"/><stop offset="1" stop-color="#520099"/></linearGradient><linearGradient id="o147" gradientUnits="userSpaceOnUse" x1="1369" x2="1582" y1="0" y2="0"><stop offset="0" stop-color="#000099"/><stop offset="0.16" stop-color="#040099"/><stop offset="1" stop-color="#4f0099"/></linearGradient><linearGradient id="o148" gradientUnits="userSpaceOnUse" x1="1372" x2="1580" y1="0" y2="0"><stop offset="0" stop-color="#000099"/><stop offset="0.154" stop-color="#050099"/><stop offset="1" stop-color="#4e0099"/></linearGradient><linearGradient id="o149" gradientUnits="userSpaceOnUse" x1="1375" x2="1577" y1="0" y2="0"><stop offset="0" stop-color="#000099"/><stop offset="0.149" stop-color="#050099"/><stop offset="1" stop-color="#4c0099"/></linearGradient><linearGradient id="o150" gradientUnits="userSpaceOnUse" x1="1377" x2="1574" y1="0" y2="0"><stop offset="0" stop-color="#000099"/><stop offset="0.153" stop-color="#050099"/><stop offset="1" stop-color="#4a0099"/></linearGradient><linearGradient id="o151" gradientUnits="userSpaceOnUse" x1="1380" x2="1571" y1="0" y2="0"><stop offset="0" stop-color="#000099"/><stop offset="0.158" stop-color="#060099"/><stop offset="1" stop-color="#480099"/></linearGradient><linearGradient id="o152" gradientUnits="userSpaceOnUse" x1="1383" x2="1568" y1="0" y2="0"><stop offset="0" stop-color="#000099"/><stop offset="0.196" stop-color="#0a0099"/><stop offset="1" stop-color="#460099"/></linearGradient><linearGradient id="o153" gradientUnits="userSpaceOnUse" x1="1386" x2="1565" y1="0" y2="0"><stop offset="0" stop-color="#000099"/><stop offset="0.416" stop-color="#190099"/><stop offset="1" stop-color="#440099"/></linearGradient><linearGradient id="o154" gradientUnits="userSpaceOnUse" x1="1389" x2="1562" y1="0" y2="0"><stop offset="0" stop-color="#000099"/><stop offset="1" stop-color="#420099"/></linearGradient><linearGradient id="o155" gradientUnits="userSpaceOnUse" x1="1392" x2="1559" y1="0" y2="0"><stop offset="0" stop-color="#000099"/><stop offset="1" stop-color="#400099"/></linearGradient><linearGradient id="o156" gradientUnits="userSpaceOnUse" x1="1395" x2="1556" y1="0" y2="0"><stop offset="0" stop-color="#000099"/><stop offset="1" stop-color="#3e0099"/></linearGradient><linearGradient id="o157" gradientUnits="userSpaceOnUse" x1="1398" x2="1553" y1="0" y2="0"><stop offset="0" stop-color="#000099"/><stop offset="1" stop-color="#3c0099"/></linearGradient><linearGradient id="o158" gradientUnits="userSpaceOnUse" x1="1401" x2="1550" y1="0" y2="0"><stop offset="0" stop-color="#010099"/><stop offset="1" stop-color="#3a0099"/></linearGradient><linearGradient id="o159" gradientUnits="userSpaceOnUse" x1="1404" x2="1548" y1="0" y2="0"><stop offset="0" stop-color="#020099"/><stop offset="1" stop-color="#390099"/></linearGradient><linearGradient id="o160" gradientUnits="userSpaceOnUse" x1="1408" x2="1545" y1="0" y2="0"><stop offset="0" stop-color="#040099"/><stop offset="1" stop-color="#370099"/></linearGradient><linearGradient id="o161" gradientUnits="userSpaceOnUse" x1="1411" x2="1542" y1="0" y2="0"><stop offset="0" stop-color="#040099"/><stop offset="1" stop-color="#360099"/></linearGradient><linearGradient id="o162" gradientUnits="userSpaceOnUse" x1="1414" x2="1539" y1="0" y2="0"><stop offset="0" stop-color="#050099"/><stop offset="1" stop-color="#340099"/></linearGradient><linearGradient id="o163" gradientUnits="userSpaceOnUse" x1="1418" x2="1536" y1="0" y2="0"><stop offset="0" stop-color="#070099"/><stop offset="1" stop-color="#320099"/></linearGradient><linearGradient id="o164" gradientUnits="userSpaceOnUse" x1="1421" x2="1533" y1="0" y2="0"><stop offset="0" stop-color="#070099"/><stop offset="1" stop-color="#310099"/></linearGradient><linearGradient id="o165" gradientUnits="userSpaceOnUse" x1="1425" x2="1530" y1="0" y2="0"><stop offset="0" stop-color="#090099"/><stop offset="1" stop-color="#2f0099"/></linearGradient><linearGradient id="o166" gradientUnits="userSpaceOnUse" x1="1428" x2="1527" y1="0" y2="0"><stop offset="0" stop-color="#090099"/><stop offset="1" stop-color="#2d0099"/></linearGradient><linearGradient id="o167" gradientUnits="userSpaceOnUse" x1="1432" x2="1524" y1="0" y2="0"><stop offset="0" stop-color="#0b0099"/><stop offset="1" stop-color="#2c0099"/></linearGradient><linearGradient id="o168" gradientUnits="userSpaceOnUse" x1="1435" x2="1521" y1="0" y2="0"><stop offset="0" stop-color="#0b0099"/><stop offset="1" stop-color="#2a0099"/></linearGradient><linearGradient id="o169" gradientUnits="userSpaceOnUse" x1="1439" x2="1518" y1="0" y2="0"><stop offset="0" stop-color="#0d0099"/><stop offset="1" stop-color="#290099"/></linearGradient><linearGradient id="o170" gradientUnits="userSpaceOnUse" x1="1443" x2="1516" y1="0" y2="0"><stop offset="0" stop-color="#0e0099"/><stop offset="1" stop-color="#280099"/></linearGradient><linearGradient id="o171" gradientUnits="userSpaceOnUse" x1="1446" x2="1513" y1="0" y2="0"><stop offset="0" stop-color="#0f0099"/><stop offset="1" stop-color="#260099"/></linearGradient><linearGradient id="o172" gradientUnits="userSpaceOnUse" x1="1450" x2="1510" y1="0" y2="0"><stop offset="0" stop-color="#100099"/><stop offset="1" stop-color="#250099"/></linearGradient><linearGradient id="o173" gradientUnits="userSpaceOnUse" x1="1454" x2="1507" y1="0" y2="0"><stop offset="0" stop-color="#110099"/><stop offset="1" stop-color="#230099"/></linearGradient><linearGradient id="o174" gradientUnits="userSpaceOnUse" x1="1457" x2="1504" y1="0" y2="0"><stop offset="0" stop-color="#120099"/><stop offset="1" stop-color="#220099"/></linearGradient><linearGradient id="o175" gradientUnits="userSpaceOnUse" x1="1461" x2="1501" y1="0" y2="0"><stop offset="0" stop-color="#130099"/><stop offset="1" stop-color="#200099"/></linearGradient><linearGradient id="o176" gradientUnits="userSpaceOnUse" x1="1464" x2="1498" y1="0" y2="0"><stop offset="0" stop-color="#130099"/><stop offset="1" stop-color="#1f0099"/></linearGradient><linearGradient id="o177" gradientUnits="userSpaceOnUse" x1="1468" x2="1495" y1="0" y2="0"><stop offset="0" stop-color="#140099"/><stop offset="1" stop-color="#1e0099"/></linearGradient><linearGradient id="o178" gradientUnits="userSpaceOnUse" x1="1472" x2="1492" y1="0" y2="0"><stop offset="0" stop-color="#160099"/><stop offset="1" stop-color="#1c0099"/></linearGradient><linearGradient id="o179" gradientUnits="userSpaceOnUse" x1="1475" x2="1489" y1="0" y2="0"><stop offset="0" stop-color="#160099"/><stop offset="1" stop-color="#1b0099"/></linearGradient><linearGradient id="i0" gradientUnits="userSpaceOnUse" x1="1290" x2="1312" y1="0" y2="0"><stop offset="0" stop-color="#00ff00"/><stop offset="1" stop-color="#00ff00"/></linearGradient><linearGradient id="i1" gradientUnits="userSpaceOnUse" x1="1291" x2="1332" y1="0" y2="0"><stop offset="0" stop-color="#00ff00"/><stop offset="0.8" stop-color="#03ff00"/><stop offset="1" stop-color="#13ff00"/></linearGradient><linearGradient id="i2" gradientUnits="userSpaceOnUse" x1="1291" x2="1352" y1="0" y2="0"><stop offset="0" stop-color="#00ff00"/><stop offset="0.533" stop-color="#02ff00"/><stop offset="1" stop-color="#3eff00"/></linearGradient><linearGradient id="i3" gradientUnits="userSpaceOnUse" x1="1292" x2="1372" y1="0" y2="0"><stop offset="0" stop-color="#00ff00"/><stop offset="0.4" stop-color="#02ff00"/><stop offset="0.975" stop-color="#68ff00"/><stop offset="1" stop-color="#6dff00"/></linearGradient><linearGradient id="i4" gradientUnits="userSpaceOnUse" x1="1292" x2="1391" y1="0" y2="0"><stop offset="0" stop-color="#00ff00"/><stop offset="0.327" stop-color="#02ff00"/><stop offset="0.796" stop-color="#6aff00"/><stop offset="1" stop-color="#a0ff00"/></linearGradient><linearGradient id="i5" gradientUnits="userSpaceOnUse" x1="1293" x2="1411" y1="0" y2="0"><stop offset="0" stop-color="#00ff00"/><stop offset="0.271" stop-color="#03ff00"/><stop offset="0.661" stop-color="#6bff00"/><stop offset="0.983" stop-color="#d5ff00"/><stop offset="1" stop-color="#dbff00"/></linearGradient><linearGradient id="i6" gradientUnits="userSpaceOnUse" x1="1293" x2="1431" y1="0" y2="0"><stop offset="0" stop-color="#00ff03"/><stop offset="0.232" stop-color="#02ff00"/><stop offset="0.565" stop-color="#6aff00"/><stop offset="0.841" stop-color="#d5ff00"/><stop offset="0.928" stop-color="#fcff00"/><stop offset="1" stop-color="#ffe300"/></linearGradient><linearGradient id="i7" gradientUnits="userSpaceOnUse" x1="1294" x2="1451" y1="0" y2="0"><stop offset="0" stop-color="#00ff06"/><stop offset="0.192" stop-color="#00ff01"/><stop offset="0.474" stop-color="#64ff00"/><stop offset="0.718" stop-color="#cfff00"/><stop offset="0.808" stop-color="#fcff00"/><stop offset="0.974" stop-color="#ffbb00"/><stop offset="1" stop-color="#ffb300"/></linearGradient><linearGradient id="i8" gradientUnits="userSpaceOnUse" x1="1294" x2="1470" y1="0" y2="0"><stop offset="0" stop-color="#00ff0a"/><stop offset="0.182" stop-color="#03ff05"/><stop offset="0.443" stop-color="#6dff00"/><stop offset="0.659" stop-color="#d9ff00"/><stop offset="0.727" stop-color="#fffd00"/><stop offset="0.841" stop-color="#ffc600"/><stop offset="1" stop-color="#ff9100"/></linearGradient><linearGradient id="i9" gradientUnits="userSpaceOnUse" x1="1295" x2="1490" y1="0" y2="0"><stop offset="0" stop-color="#00ff0d"/><stop offset="0.155" stop-color="#00ff09"/><stop offset="0.381" stop-color="#66ff01"/><stop offset="0.577" stop-color="#d2ff00"/><stop offset="0.649" stop-color="#fffe00"/><stop offset="0.753" stop-color="#ffc600"/><stop offset="0.897" stop-color="#ff9100"/><stop offset="1" stop-color="#ff7600"/></linearGradient><linearGradient id="i10" gradientUnits="userSpaceOnUse" x1="1295" x2="1510" y1="0" y2="0"><stop offset="0" stop-color="#00ff11"/><stop offset="0.14" stop-color="#00ff0c"/><stop offset="0.346" stop-color="#65ff05"/><stop offset="0.523" stop-color="#d2ff00"/><stop offset="0.589" stop-color="#fffd00"/><stop offset="0.682" stop-color="#ffc500"/><stop offset="0.813" stop-color="#ff9000"/><stop offset="1" stop-color="#ff6100"/></linearGradient><linearGradient id="i11" gradientUnits="userSpaceOnUse" x1="1296" x2="1530" y1="0" y2="0"><stop offset="0" stop-color="#00ff14"/><stop offset="0.128" stop-color="#01ff10"/><stop offset="0.316" stop-color="#67ff09"/><stop offset="0.479" stop-color="#d4ff02"/><stop offset="0.53" stop-color="#fcff00"/><stop offset="0.624" stop-color="#ffc400"/><stop offset="0.744" stop-color="#ff8f00"/><stop offset="0.915" stop-color="#ff6000"/><stop offset="1" stop-color="#ff5000"/></linearGradient><linearGradient id="i12" gradientUnits="userSpaceOnUse" x1="1296" x2="1549" y1="0" y2="0"><stop offset="0" stop-color="#00ff18"/><stop offset="0.119" stop-color="#00ff14"/><stop offset="0.294" stop-color="#67ff0e"/><stop offset="0.444" stop-color="#d6ff06"/><stop offset="0.492" stop-color="#feff04"/><stop offset="0.579" stop-color="#ffc200"/><stop offset="0.69" stop-color="#ff8e00"/><stop offset="0.849" stop-color="#ff5f00"/><stop offset="1" stop-color="#ff4200"/></linearGradient><linearGradient id="i13" gradientUnits="userSpaceOnUse" x1="1297" x2="1569" y1="0" y2="0"><stop offset="0" stop-color="#00ff1c"/><stop offset="0.11" stop-color="#01ff18"/><stop offset="0.272" stop-color="#69ff12"/><stop offset="0.412" stop-color="#d8ff0b"/><stop offset="0.456" stop-color="#fffe09"/><stop offset="0.529" stop-color="#ffc503"/><stop offset="0.632" stop-color="#ff8f00"/><stop offset="0.779" stop-color="#ff6000"/><stop offset="1" stop-color="#ff3600"/></linearGradient><linearGradient id="i14" gradientUnits="userSpaceOnUse" x1="1297" x2="1589" y1="0" y2="0"><stop offset="0" stop-color="#00ff1f"/><stop offset="0.103" stop-color="#01ff1c"/><stop offset="0.253" stop-color="#69ff16"/><stop offset="0.384" stop-color="#d8ff10"/><stop offset="0.425" stop-color="#fffd0e"/><stop offset="0.493" stop-color="#ffc407"/><stop offset="0.589" stop-color="#ff8f02"/><stop offset="0.726" stop-color="#ff5f00"/><stop offset="0.932" stop-color="#ff3600"/><stop offset="1" stop-color="#ff2c00"/></linearGradient><linearGradient id="i15" gradientUnits="userSpaceOnUse" x1="1298" x2="1609" y1="0" y2="0"><stop offset="0" stop-color="#00ff23"/><stop offset="0.097" stop-color="#02ff20"/><stop offset="0.239" stop-color="#6cff1b"/><stop offset="0.355" stop-color="#d7ff15"/><stop offset="0.394" stop-color="#fffe13"/><stop offset="0.458" stop-color="#ffc40c"/><stop offset="0.548" stop-color="#ff8f05"/><stop offset="0.677" stop-color="#ff5f00"/><stop offset="0.871" stop-color="#ff3500"/><stop offset="1" stop-color="#ff2300"/></linearGradient><linearGradient id="i16" gradientUnits="userSpaceOnUse" x1="1298" x2="1629" y1="0" y2="0"><stop offset="0" stop-color="#00ff27"/><stop offset="0.091" stop-color="#02ff24"/><stop offset="0.224" stop-color="#6cff1f"/><stop offset="0.333" stop-color="#d7ff1a"/><stop offset="0.37" stop-color="#fffe18"/><stop offset="0.43" stop-color="#ffc410"/><stop offset="0.515" stop-color="#ff8e08"/><stop offset="0.636" stop-color="#ff5e02"/><stop offset="0.818" stop-color="#ff3500"/><stop offset="1" stop-color="#ff1b00"/></linearGradient><linearGradient id="i17" gradientUnits="userSpaceOnUse" x1="1299" x2="1648" y1="0" y2="0"><stop offset="0" stop-color="#00ff2b"/><stop offset="0.086" stop-color="#03ff28"/><stop offset="0.207" stop-color="#69ff24"/><stop offset="0.31" stop-color="#d4ff20"/><stop offset="0.345" stop-color="#fdff1e"/><stop offset="0.408" stop-color="#ffc114"/><stop offset="0.489" stop-color="#ff8c0c"/><stop offset="0.603" stop-color="#ff5d04"/><stop offset="0.776" stop-color="#ff3400"/><stop offset="1" stop-color="#ff1500"/></linearGradient><linearGradient id="i18" gradientUnits="userSpaceOnUse" x1="1299" x2="1668" y1="0" y2="0"><stop offset="0" stop-color="#00ff2f"/><stop offset="0.082" stop-color="#02ff2c"/><stop offset="0.196" stop-color="#68ff29"/><stop offset="0.293" stop-color="#d4ff25"/><stop offset="0.326" stop-color="#feff23"/><stop offset="0.386" stop-color="#ffc018"/><stop offset="0.462" stop-color="#ff8b0f"/><stop offset="0.571" stop-color="#ff5c07"/><stop offset="0.734" stop-color="#ff3300"/><stop offset="0.995" stop-color="#ff1000"/><stop offset="1" stop-color="#ff0f00"/></linearGradient><linearGradient id="i19" gradientUnits="userSpaceOnUse" x1="1299" x2="1688" y1="0" y2="0"><stop offset="0" stop-color="#00ff33"/><stop offset="0.077" stop-color="#02ff31"/><stop offset="0.186" stop-color="#68ff2d"/><stop offset="0.278" stop-color="#d5ff2a"/><stop offset="0.309" stop-color="#feff29"/><stop offset="0.361" stop-color="#ffc41d"/><stop offset="0.428" stop-color="#ff9114"/><stop offset="0.526" stop-color="#ff610a"/><stop offset="0.67" stop-color="#ff3803"/><stop offset="0.902" stop-color="#ff1400"/><stop offset="1" stop-color="#ff0a00"/></linearGradient><linearGradient id="i20" gradientUnits="userSpaceOnUse" x1="1300" x2="1708" y1="0" y2="0"><stop offset="0" stop-color="#00ff37"/><stop offset="0.074" stop-color="#03ff35"/><stop offset="0.176" stop-color="#6aff32"/><stop offset="0.265" stop-color="#d8ff2f"/><stop offset="0.294" stop-color="#fffc2d"/><stop offset="0.343" stop-color="#ffc221"/><stop offset="0.412" stop-color="#ff8c16"/><stop offset="0.51" stop-color="#ff5d0c"/><stop offset="0.657" stop-color="#ff3304"/><stop offset="0.892" stop-color="#ff0f00"/><stop offset="1" stop-color="#ff0500"/></linearGradient><linearGradient id="i21" gradientUnits="userSpaceOnUse" x1="1300" x2="1727" y1="0" y2="0"><stop offset="0" stop-color="#00ff3b"/><stop offset="0.07" stop-color="#03ff39"/><stop offset="0.169" stop-color="#6aff37"/><stop offset="0.254" stop-color="#d9ff34"/><stop offset="0.277" stop-color="#fcff34"/><stop offset="0.333" stop-color="#ffbc24"/><stop offset="0.399" stop-color="#ff8819"/><stop offset="0.493" stop-color="#ff5a0e"/><stop offset="0.634" stop-color="#ff3105"/><stop offset="0.859" stop-color="#ff0e00"/><stop offset="1" stop-color="#ff0100"/></linearGradient><linearGradient id="i22" gradientUnits="userSpaceOnUse" x1="1301" x2="1747" y1="0" y2="0"><stop offset="0" stop-color="#00ff3f"/><stop offset="0.063" stop-color="#00ff3e"/><stop offset="0.152" stop-color="#61ff3c"/><stop offset="0.233" stop-color="#ceff3a"/><stop offset="0.265" stop-color="#ffff39"/><stop offset="0.309" stop-color="#ffc32b"/><stop offset="0.368" stop-color="#ff8f1e"/><stop offset="0.453" stop-color="#ff6013"/><stop offset="0.578" stop-color="#ff3709"/><stop offset="0.78" stop-color="#ff1300"/><stop offset="0.991" stop-color="#ff0000"/><stop offset="1" stop-color="#ff0000"/></linearGradient><linearGradient id="i23" gradientUnits="userSpaceOnUse" x1="1301" x2="1767" y1="0" y2="0"><stop offset="0" stop-color="#00ff43"/><stop offset="0.064" stop-color="#03ff42"/><stop offset="0.155" stop-color="#6cff41"/><stop offset="0.232" stop-color="#dcff3f"/><stop offset="0.253" stop-color="#fffe3f"/><stop offset="0.292" stop-color="#ffc730"/><stop offset="0.348" stop-color="#ff9223"/><stop offset="0.425" stop-color="#ff6317"/><stop offset="0.541" stop-color="#ff3a0c"/><stop offset="0.725" stop-color="#ff1502"/><stop offset="0.944" stop-color="#ff0000"/><stop offset="1" stop-color="#ff0000"/></linearGradient><linearGradient id="i24" gradientUnits="userSpaceOnUse" x1="1302" x2="1780" y1="0" y2="0"><stop offset="0" stop-color="#00ff47"/><stop offset="0.059" stop-color="#00ff46"/><stop offset="0.146" stop-color="#69ff46"/><stop offset="0.218" stop-color="#d2ff45"/><stop offset="0.243" stop-color="#fdff45"/><stop offset="0.289" stop-color="#ffbf33"/><stop offset="0.343" stop-color="#ff8c25"/><stop offset="0.423" stop-color="#ff5e18"/><stop offset="0.544" stop-color="#ff340c"/><stop offset="0.736" stop-color="#ff1003"/><stop offset="0.916" stop-color="#ff0000"/><stop offset="1" stop-color="#ff0000"/></linearGradient><linearGradient id="i25" gradientUnits="userSpaceOnUse" x1="1302" x2="1780" y1="0" y2="0"><stop offset="0" stop-color="#00ff4b"/><stop offset="0.059" stop-color="#00ff4b"/><stop offset="0.142" stop-color="#63ff4b"/><stop offset="0.218" stop-color="#d3ff4b"/><stop offset="0.243" stop-color="#feff4a"/><stop offset="0.285" stop-color="#ffc339"/><stop offset="0.339" stop-color="#ff8f29"/><stop offset="0.418" stop-color="#ff5f1b"/><stop offset="0.536" stop-color="#ff360f"/><stop offset="0.724" stop-color="#ff1205"/><stop offset="0.912" stop-color="#ff0000"/><stop offset="1" stop-color="#ff0000"/></linearGradient><linearGradient id="i26" gradientUnits="userSpaceOnUse" x1="1303" x2="1777" y1="0" y2="0"><stop offset="0" stop-color="#00ff4f"/><stop offset="0.059" stop-color="#01ff50"/><stop offset="0.143" stop-color="#66ff50"/><stop offset="0.215" stop-color="#d0ff50"/><stop offset="0.245" stop-color="#fffc4f"/><stop offset="0.283" stop-color="#ffc53e"/><stop offset="0.338" stop-color="#ff902e"/><stop offset="0.414" stop-color="#ff611f"/><stop offset="0.527" stop-color="#ff3812"/><stop offset="0.709" stop-color="#ff1407"/><stop offset="0.911" stop-color="#ff0000"/><stop offset="1" stop-color="#ff0000"/></linearGradient><linearGradient id="i27" gradientUnits="userSpaceOnUse" x1="1303" x2="1775" y1="0" y2="0"><stop offset="0" stop-color="#00ff54"/><stop offset="0.059" stop-color="#00ff54"/><stop offset="0.144" stop-color="#66ff55"/><stop offset="0.216" stop-color="#d0ff56"/><stop offset="0.242" stop-color="#fbff56"/><stop offset="0.263" stop-color="#ffe04c"/><stop offset="0.309" stop-color="#ffa93a"/><stop offset="0.373" stop-color="#ff782a"/><stop offset="0.466" stop-color="#ff4b1b"/><stop offset="0.61" stop-color="#ff240e"/><stop offset="0.847" stop-color="#ff0303"/><stop offset="1" stop-color="#ff0000"/></linearGradient><linearGradient id="i28" gradientUnits="userSpaceOnUse" x1="1304" x2="1773" y1="0" y2="0"><stop offset="0" stop-color="#00ff58"/><stop offset="0.06" stop-color="#02ff59"/><stop offset="0.145" stop-color="#69ff5a"/><stop offset="0.218" stop-color="#d5ff5c"/><stop offset="0.244" stop-color="#fffd5c"/><stop offset="0.282" stop-color="#ffc548"/><stop offset="0.338" stop-color="#ff8f35"/><stop offset="0.415" stop-color="#ff6125"/><stop offset="0.53" stop-color="#ff3717"/><stop offset="0.714" stop-color="#ff130a"/><stop offset="0.91" stop-color="#ff0003"/><stop offset="1" stop-color="#ff0000"/></linearGradient><linearGradient id="i29" gradientUnits="userSpaceOnUse" x1="1304" x2="1771" y1="0" y2="0"><stop offset="0" stop-color="#00ff5c"/><stop offset="0.06" stop-color="#01ff5e"/><stop offset="0.146" stop-color="#68ff60"/><stop offset="0.219" stop-color="#d5ff62"/><stop offset="0.245" stop-color="#fffd61"/><stop offset="0.283" stop-color="#ffc44d"/><stop offset="0.339" stop-color="#ff8f39"/><stop offset="0.416" stop-color="#ff6028"/><stop offset="0.532" stop-color="#ff3619"/><stop offset="0.717" stop-color="#ff130c"/><stop offset="0.91" stop-color="#ff0004"/><stop offset="1" stop-color="#ff0001"/></linearGradient><linearGradient id="i30" gradientUnits="userSpaceOnUse" x1="1305" x2="1768" y1="0" y2="0"><stop offset="0" stop-color="#00ff61"/><stop offset="0.061" stop-color="#03ff62"/><stop offset="0.147" stop-color="#6bff65"/><stop offset="0.221" stop-color="#d9ff68"/><stop offset="0.242" stop-color="#feff68"/><stop offset="0.286" stop-color="#ffc151"/><stop offset="0.342" stop-color="#ff8c3c"/><stop offset="0.42" stop-color="#ff5e2a"/><stop offset="0.537" stop-color="#ff351b"/><stop offset="0.723" stop-color="#ff120d"/><stop offset="0.913" stop-color="#ff0005"/><stop offset="1" stop-color="#ff0003"/></linearGradient><linearGradient id="i31" gradientUnits="userSpaceOnUse" x1="1305" x2="1766" y1="0" y2="0"><stop offset="0" stop-color="#00ff65"/><stop offset="0.061" stop-color="#02ff67"/><stop offset="0.148" stop-color="#6bff6a"/><stop offset="0.222" stop-color="#daff6e"/><stop offset="0.243" stop-color="#ffff6f"/><stop offset="0.283" stop-color="#ffc557"/><stop offset="0.335" stop-color="#ff9243"/><stop offset="0.409" stop-color="#ff6430"/><stop offset="0.522" stop-color="#ff391f"/><stop offset="0.7" stop-color="#ff1510"/><stop offset="0.909" stop-color="#ff0007"/><stop offset="1" stop-color="#ff0004"/></linearGradient><linearGradient id="i32" gradientUnits="userSpaceOnUse" x1="1306" x2="1764" y1="0" y2="0"><stop offset="0" stop-color="#00ff6a"/><stop offset="0.057" stop-color="#00ff6c"/><stop offset="0.135" stop-color="#5cff6f"/><stop offset="0.21" stop-color="#c7ff73"/><stop offset="0.24" stop-color="#fbff75"/><stop offset="0.253" stop-color="#ffed6d"/><stop offset="0.297" stop-color="#ffb455"/><stop offset="0.358" stop-color="#ff803f"/><stop offset="0.445" stop-color="#ff532c"/><stop offset="0.576" stop-color="#ff2b1b"/><stop offset="0.79" stop-color="#ff090d"/><stop offset="0.926" stop-color="#ff0007"/><stop offset="1" stop-color="#ff0005"/></linearGradient><linearGradient id="i33" gradientUnits="userSpaceOnUse" x1="1306" x2="1762" y1="0" y2="0"><stop offset="0" stop-color="#00ff6f"/><stop offset="0.061" stop-color="#03ff71"/><stop offset="0.149" stop-color="#6dff75"/><stop offset="0.219" stop-color="#d6ff7a"/><stop offset="0.241" stop-color="#fcff7b"/><stop offset="0.285" stop-color="#ffc260"/><stop offset="0.338" stop-color="#ff904a"/><stop offset="0.417" stop-color="#ff6035"/><stop offset="0.535" stop-color="#ff3622"/><stop offset="0.719" stop-color="#ff1212"/><stop offset="0.912" stop-color="#ff0009"/><stop offset="1" stop-color="#ff0006"/></linearGradient><linearGradient id="i34" gradientUnits="userSpaceOnUse" x1="1307" x2="1759" y1="0" y2="0"><stop offset="0" stop-color="#00ff73"/><stop offset="0.058" stop-color="#00ff76"/><stop offset="0.142" stop-color="#64ff7b"/><stop offset="0.217" stop-color="#d3ff80"/><stop offset="0.243" stop-color="#fffe81"/><stop offset="0.283" stop-color="#ffc467"/><stop offset="0.336" stop-color="#ff904f"/><stop offset="0.412" stop-color="#ff6239"/><stop offset="0.527" stop-color="#ff3826"/><stop offset="0.708" stop-color="#ff1415"/><stop offset="0.912" stop-color="#ff000b"/><stop offset="1" stop-color="#ff0008"/></linearGradient><linearGradient id="i35" gradientUnits="userSpaceOnUse" x1="1307" x2="1757" y1="0" y2="0"><stop offset="0" stop-color="#00ff78"/><stop offset="0.058" stop-color="#00ff7b"/><stop offset="0.138" stop-color="#5eff80"/><stop offset="0.213" stop-color="#ccff86"/><stop offset="0.244" stop-color="#fffd87"/><stop offset="0.284" stop-color="#ffc36b"/><stop offset="0.338" stop-color="#ff9053"/><stop offset="0.413" stop-color="#ff613c"/><stop offset="0.529" stop-color="#ff3728"/><stop offset="0.711" stop-color="#ff1317"/><stop offset="0.911" stop-color="#ff000c"/><stop offset="1" stop-color="#ff0009"/></linearGradient><linearGradient id="i36" gradientUnits="userSpaceOnUse" x1="1308" x2="1755" y1="0" y2="0"><stop offset="0" stop-color="#00ff7d"/><stop offset="0.058" stop-color="#01ff80"/><stop offset="0.143" stop-color="#67ff86"/><stop offset="0.215" stop-color="#d1ff8c"/><stop offset="0.242" stop-color="#ffff8f"/><stop offset="0.283" stop-color="#ffc471"/><stop offset="0.336" stop-color="#ff9057"/><stop offset="0.413" stop-color="#ff6140"/><stop offset="0.529" stop-color="#ff372b"/><stop offset="0.713" stop-color="#ff1318"/><stop offset="0.91" stop-color="#ff000e"/><stop offset="1" stop-color="#ff000a"/></linearGradient><linearGradient id="i37" gradientUnits="userSpaceOnUse" x1="1308" x2="1752" y1="0" y2="0"><stop offset="0" stop-color="#00ff82"/><stop offset="0.059" stop-color="#00ff85"/><stop offset="0.144" stop-color="#66ff8c"/><stop offset="0.216" stop-color="#d1ff93"/><stop offset="0.243" stop-color="#ffff96"/><stop offset="0.284" stop-color="#ffc477"/><stop offset="0.338" stop-color="#ff905c"/><stop offset="0.414" stop-color="#ff6143"/><stop offset="0.527" stop-color="#ff382e"/><stop offset="0.707" stop-color="#ff141b"/><stop offset="0.91" stop-color="#ff000f"/><stop offset="1" stop-color="#ff000c"/></linearGradient><linearGradient id="i38" gradientUnits="userSpaceOnUse" x1="1308" x2="1750" y1="0" y2="0"><stop offset="0" stop-color="#00ff87"/><stop offset="0.059" stop-color="#00ff8b"/><stop offset="0.136" stop-color="#5aff91"/><stop offset="0.208" stop-color="#c2ff98"/><stop offset="0.244" stop-color="#ffff9c"/><stop offset="0.285" stop-color="#ffc37c"/><stop offset="0.339" stop-color="#ff8f60"/><stop offset="0.416" stop-color="#ff6046"/><stop offset="0.529" stop-color="#ff3730"/><stop offset="0.71" stop-color="#ff141c"/><stop offset="0.91" stop-color="#ff0011"/><stop offset="1" stop-color="#ff000d"/></linearGradient><linearGradient id="i39" gradientUnits="userSpaceOnUse" x1="1309" x2="1748" y1="0" y2="0"><stop offset="0" stop-color="#00ff8c"/><stop offset="0.059" stop-color="#01ff90"/><stop offset="0.146" stop-color="#69ff98"/><stop offset="0.219" stop-color="#d6ffa0"/><stop offset="0.242" stop-color="#fdffa3"/><stop offset="0.288" stop-color="#ffbf7f"/><stop offset="0.342" stop-color="#ff8c62"/><stop offset="0.42" stop-color="#ff5e49"/><stop offset="0.539" stop-color="#ff3531"/><stop offset="0.726" stop-color="#ff111d"/><stop offset="0.913" stop-color="#ff0012"/><stop offset="1" stop-color="#ff000e"/></linearGradient><linearGradient id="i40" gradientUnits="userSpaceOnUse" x1="1309" x2="1746" y1="0" y2="0"><stop offset="0" stop-color="#00ff91"/><stop offset="0.06" stop-color="#00ff95"/><stop offset="0.147" stop-color="#69ff9e"/><stop offset="0.22" stop-color="#d6ffa7"/><stop offset="0.243" stop-color="#feffaa"/><stop offset="0.284" stop-color="#ffc488"/><stop offset="0.339" stop-color="#ff8f69"/><stop offset="0.417" stop-color="#ff604d"/><stop offset="0.532" stop-color="#ff3735"/><stop offset="0.716" stop-color="#ff1320"/><stop offset="0.913" stop-color="#ff0013"/><stop offset="1" stop-color="#ff0010"/></linearGradient><linearGradient id="i41" gradientUnits="userSpaceOnUse" x1="1310" x2="1743" y1="0" y2="0"><stop offset="0" stop-color="#00ff96"/><stop offset="0.06" stop-color="#02ff9b"/><stop offset="0.148" stop-color="#6cffa4"/><stop offset="0.222" stop-color="#dbffae"/><stop offset="0.245" stop-color="#fffbaf"/><stop offset="0.287" stop-color="#ffc08b"/><stop offset="0.343" stop-color="#ff8c6c"/><stop offset="0.421" stop-color="#ff5e4f"/><stop offset="0.542" stop-color="#ff3436"/><stop offset="0.731" stop-color="#ff1121"/><stop offset="0.917" stop-color="#ff0015"/><stop offset="1" stop-color="#ff0011"/></linearGradient><linearGradient id="i42" gradientUnits="userSpaceOnUse" x1="1310" x2="1741" y1="0" y2="0"><stop offset="0" stop-color="#00ff9b"/><stop offset="0.06" stop-color="#01ffa1"/><stop offset="0.144" stop-color="#65ffaa"/><stop offset="0.219" stop-color="#d3ffb4"/><stop offset="0.242" stop-color="#fbffb8"/><stop offset="0.26" stop-color="#ffe4a8"/><stop offset="0.307" stop-color="#ffab84"/><stop offset="0.372" stop-color="#ff7864"/><stop offset="0.465" stop-color="#ff4c48"/><stop offset="0.609" stop-color="#ff252f"/><stop offset="0.847" stop-color="#ff031a"/><stop offset="1" stop-color="#ff0012"/></linearGradient><linearGradient id="i43" gradientUnits="userSpaceOnUse" x1="1311" x2="1739" y1="0" y2="0"><stop offset="0" stop-color="#00ffa0"/><stop offset="0.061" stop-color="#02ffa6"/><stop offset="0.145" stop-color="#68ffb1"/><stop offset="0.22" stop-color="#d7ffbc"/><stop offset="0.243" stop-color="#ffffc0"/><stop offset="0.28" stop-color="#ffc89c"/><stop offset="0.332" stop-color="#ff947a"/><stop offset="0.407" stop-color="#ff655b"/><stop offset="0.519" stop-color="#ff3a40"/><stop offset="0.696" stop-color="#ff1528"/><stop offset="0.907" stop-color="#ff0018"/><stop offset="1" stop-color="#ff0014"/></linearGradient><linearGradient id="i44" gradientUnits="userSpaceOnUse" x1="1311" x2="1737" y1="0" y2="0"><stop offset="0" stop-color="#00ffa5"/><stop offset="0.061" stop-color="#02ffac"/><stop offset="0.146" stop-color="#67ffb7"/><stop offset="0.216" stop-color="#d0ffc2"/><stop offset="0.244" stop-color="#fffec7"/><stop offset="0.282" stop-color="#ffc7a1"/><stop offset="0.333" stop-color="#ff937f"/><stop offset="0.408" stop-color="#ff645f"/><stop offset="0.521" stop-color="#ff3a42"/><stop offset="0.7" stop-color="#ff1529"/><stop offset="0.906" stop-color="#ff001a"/><stop offset="1" stop-color="#ff0015"/></linearGradient><linearGradient id="i45" gradientUnits="userSpaceOnUse" x1="1312" x2="1734" y1="0" y2="0"><stop offset="0" stop-color="#00ffab"/><stop offset="0.057" stop-color="#00ffb1"/><stop offset="0.128" stop-color="#51ffbb"/><stop offset="0.204" stop-color="#bdffc7"/><stop offset="0.242" stop-color="#fcffce"/><stop offset="0.289" stop-color="#ffbea1"/><stop offset="0.346" stop-color="#ff897d"/><stop offset="0.427" stop-color="#ff5b5d"/><stop offset="0.55" stop-color="#ff3240"/><stop offset="0.744" stop-color="#ff0f27"/><stop offset="0.915" stop-color="#ff001b"/><stop offset="1" stop-color="#ff0017"/></linearGradient><linearGradient id="i46" gradientUnits="userSpaceOnUse" x1="1312" x2="1732" y1="0" y2="0"><stop offset="0" stop-color="#00ffb0"/><stop offset="0.062" stop-color="#03ffb8"/><stop offset="0.148" stop-color="#6affc4"/><stop offset="0.219" stop-color="#d4ffd1"/><stop offset="0.243" stop-color="#fdffd6"/><stop offset="0.286" stop-color="#ffc2aa"/><stop offset="0.338" stop-color="#ff9086"/><stop offset="0.414" stop-color="#ff6165"/><stop offset="0.529" stop-color="#ff3847"/><stop offset="0.71" stop-color="#ff142d"/><stop offset="0.91" stop-color="#ff001d"/><stop offset="1" stop-color="#ff0018"/></linearGradient><linearGradient id="i47" gradientUnits="userSpaceOnUse" x1="1313" x2="1730" y1="0" y2="0"><stop offset="0" stop-color="#00ffb6"/><stop offset="0.058" stop-color="#00ffbd"/><stop offset="0.139" stop-color="#61ffca"/><stop offset="0.212" stop-color="#caffd7"/><stop offset="0.24" stop-color="#fbffdd"/><stop offset="0.255" stop-color="#ffebcf"/><stop offset="0.298" stop-color="#ffb3a5"/><stop offset="0.356" stop-color="#ff8281"/><stop offset="0.442" stop-color="#ff545f"/><stop offset="0.572" stop-color="#ff2c41"/><stop offset="0.784" stop-color="#ff0a28"/><stop offset="0.923" stop-color="#ff001e"/><stop offset="1" stop-color="#ff001a"/></linearGradient><linearGradient id="i48" gradientUnits="userSpaceOnUse" x1="1313" x2="1728" y1="0" y2="0"><stop offset="0" stop-color="#00ffbb"/><stop offset="0.058" stop-color="#00ffc3"/><stop offset="0.13" stop-color="#54ffce"/><stop offset="0.203" stop-color="#bbffdc"/><stop offset="0.242" stop-color="#fcffe5"/><stop offset="0.275" stop-color="#ffcfc0"/><stop offset="0.324" stop-color="#ff9b99"/><stop offset="0.396" stop-color="#ff6a73"/><stop offset="0.502" stop-color="#ff3f52"/><stop offset="0.667" stop-color="#ff1a36"/><stop offset="0.899" stop-color="#ff0021"/><stop offset="1" stop-color="#ff001b"/></linearGradient><linearGradient id="i49" gradientUnits="userSpaceOnUse" x1="1314" x2="1725" y1="0" y2="0"><stop offset="0" stop-color="#00ffc1"/><stop offset="0.059" stop-color="#00ffc9"/><stop offset="0.146" stop-color="#6affd8"/><stop offset="0.22" stop-color="#d7ffe8"/><stop offset="0.244" stop-color="#fffdec"/><stop offset="0.283" stop-color="#ffc5bf"/><stop offset="0.337" stop-color="#ff9096"/><stop offset="0.415" stop-color="#ff6170"/><stop offset="0.532" stop-color="#ff374f"/><stop offset="0.717" stop-color="#ff1333"/><stop offset="0.912" stop-color="#ff0022"/><stop offset="1" stop-color="#ff001d"/></linearGradient><linearGradient id="i50" gradientUnits="userSpaceOnUse" x1="1314" x2="1723" y1="0" y2="0"><stop offset="0" stop-color="#00ffc7"/><stop offset="0.059" stop-color="#00ffcf"/><stop offset="0.142" stop-color="#63ffde"/><stop offset="0.216" stop-color="#cfffee"/><stop offset="0.245" stop-color="#fffdf3"/><stop offset="0.284" stop-color="#ffc4c5"/><stop offset="0.338" stop-color="#ff909b"/><stop offset="0.417" stop-color="#ff6074"/><stop offset="0.534" stop-color="#ff3652"/><stop offset="0.721" stop-color="#ff1234"/><stop offset="0.912" stop-color="#ff0024"/><stop offset="1" stop-color="#ff001e"/></linearGradient><linearGradient id="i51" gradientUnits="userSpaceOnUse" x1="1315" x2="1721" y1="0" y2="0"><stop offset="0" stop-color="#00ffcd"/><stop offset="0.059" stop-color="#01ffd6"/><stop offset="0.143" stop-color="#65ffe5"/><stop offset="0.217" stop-color="#d3fff6"/><stop offset="0.241" stop-color="#fdfffd"/><stop offset="0.286" stop-color="#ffc1c9"/><stop offset="0.34" stop-color="#ff8e9e"/><stop offset="0.419" stop-color="#ff5e77"/><stop offset="0.537" stop-color="#ff3554"/><stop offset="0.724" stop-color="#ff1136"/><stop offset="0.911" stop-color="#ff0025"/><stop offset="1" stop-color="#ff0020"/></linearGradient><linearGradient id="i52" gradientUnits="userSpaceOnUse" x1="1315" x2="1719" y1="0" y2="0"><stop offset="0" stop-color="#00ffd2"/><stop offset="0.059" stop-color="#00ffdc"/><stop offset="0.144" stop-color="#65ffec"/><stop offset="0.218" stop-color="#d3fffe"/><stop offset="0.248" stop-color="#fff8ff"/><stop offset="0.287" stop-color="#ffc0cf"/><stop offset="0.342" stop-color="#ff8da3"/><stop offset="0.421" stop-color="#ff5e7a"/><stop offset="0.54" stop-color="#ff3456"/><stop offset="0.728" stop-color="#ff1138"/><stop offset="0.911" stop-color="#ff0027"/><stop offset="1" stop-color="#ff0021"/></linearGradient><linearGradient id="i53" gradientUnits="userSpaceOnUse" x1="1316" x2="1716" y1="0" y2="0"><stop offset="0" stop-color="#00ffd9"/><stop offset="0.06" stop-color="#02ffe3"/><stop offset="0.145" stop-color="#68fff4"/><stop offset="0.205" stop-color="#bdfbff"/><stop offset="0.25" stop-color="#fbefff"/><stop offset="0.275" stop-color="#ffcee2"/><stop offset="0.325" stop-color="#ff9ab4"/><stop offset="0.395" stop-color="#ff6b8a"/><stop offset="0.5" stop-color="#ff4064"/><stop offset="0.665" stop-color="#ff1a43"/><stop offset="0.895" stop-color="#ff002a"/><stop offset="1" stop-color="#ff0023"/></linearGradient><linearGradient id="i54" gradientUnits="userSpaceOnUse" x1="1316" x2="1714" y1="0" y2="0"><stop offset="0" stop-color="#00ffdf"/><stop offset="0.06" stop-color="#01ffe9"/><stop offset="0.146" stop-color="#68fffb"/><stop offset="0.216" stop-color="#c5f1ff"/><stop offset="0.256" stop-color="#fbe6ff"/><stop offset="0.286" stop-color="#ffc1dd"/><stop offset="0.342" stop-color="#ff8dae"/><stop offset="0.422" stop-color="#ff5d82"/><stop offset="0.543" stop-color="#ff345c"/><stop offset="0.734" stop-color="#ff103c"/><stop offset="0.915" stop-color="#ff002a"/><stop offset="1" stop-color="#ff0025"/></linearGradient><linearGradient id="i55" gradientUnits="userSpaceOnUse" x1="1317" x2="1712" y1="0" y2="0"><stop offset="0" stop-color="#00ffe5"/><stop offset="0.061" stop-color="#03fff0"/><stop offset="0.142" stop-color="#63fcff"/><stop offset="0.264" stop-color="#ffddfe"/><stop offset="0.31" stop-color="#ffa7cc"/><stop offset="0.376" stop-color="#ff759d"/><stop offset="0.472" stop-color="#ff4973"/><stop offset="0.619" stop-color="#ff224f"/><stop offset="0.863" stop-color="#ff0231"/><stop offset="1" stop-color="#ff0026"/></linearGradient><linearGradient id="i56" gradientUnits="userSpaceOnUse" x1="1317" x2="1710" y1="0" y2="0"><stop offset="0" stop-color="#00ffeb"/><stop offset="0.061" stop-color="#02fff7"/><stop offset="0.117" stop-color="#42fbff"/><stop offset="0.27" stop-color="#ffd5fe"/><stop offset="0.321" stop-color="#ff9dc8"/><stop offset="0.393" stop-color="#ff6c99"/><stop offset="0.495" stop-color="#ff4170"/><stop offset="0.653" stop-color="#ff1c4c"/><stop offset="0.893" stop-color="#ff0030"/><stop offset="1" stop-color="#ff0028"/></linearGradient><linearGradient id="i57" gradientUnits="userSpaceOnUse" x1="1317" x2="1707" y1="0" y2="0"><stop offset="0" stop-color="#00fff1"/><stop offset="0.062" stop-color="#01fffd"/><stop offset="0.226" stop-color="#bfdbff"/><stop offset="0.277" stop-color="#ffceff"/><stop offset="0.328" stop-color="#ff98ca"/><stop offset="0.4" stop-color="#ff699b"/><stop offset="0.508" stop-color="#ff3e70"/><stop offset="0.677" stop-color="#ff194b"/><stop offset="0.903" stop-color="#ff0031"/><stop offset="1" stop-color="#ff002a"/></linearGradient><linearGradient id="i58" gradientUnits="userSpaceOnUse" x1="1318" x2="1705" y1="0" y2="0"><stop offset="0" stop-color="#00fff8"/><stop offset="0.057" stop-color="#00fbff"/><stop offset="0.187" stop-color="#8ddeff"/><stop offset="0.28" stop-color="#fdc7ff"/><stop offset="0.342" stop-color="#ff8cc4"/><stop offset="0.42" stop-color="#ff5e95"/><stop offset="0.534" stop-color="#ff366c"/><stop offset="0.715" stop-color="#ff1348"/><stop offset="0.912" stop-color="#ff0032"/><stop offset="1" stop-color="#ff002b"/></linearGradient><linearGradient id="i59" gradientUnits="userSpaceOnUse" x1="1318" x2="1703" y1="0" y2="0"><stop offset="0" stop-color="#00fffe"/><stop offset="0.062" stop-color="#02f3ff"/><stop offset="0.234" stop-color="#bfccff"/><stop offset="0.286" stop-color="#fdc0ff"/><stop offset="0.349" stop-color="#ff88c5"/><stop offset="0.427" stop-color="#ff5b96"/><stop offset="0.547" stop-color="#ff336c"/><stop offset="0.734" stop-color="#ff1048"/><stop offset="0.911" stop-color="#ff0034"/><stop offset="1" stop-color="#ff002d"/></linearGradient><linearGradient id="i60" gradientUnits="userSpaceOnUse" x1="1319" x2="1700" y1="0" y2="0"><stop offset="0" stop-color="#00f9ff"/><stop offset="0.058" stop-color="#00eeff"/><stop offset="0.216" stop-color="#a5cbff"/><stop offset="0.295" stop-color="#ffb8fe"/><stop offset="0.353" stop-color="#ff85c8"/><stop offset="0.432" stop-color="#ff5999"/><stop offset="0.547" stop-color="#ff336f"/><stop offset="0.732" stop-color="#ff114b"/><stop offset="0.916" stop-color="#ff0036"/><stop offset="1" stop-color="#ff002f"/></linearGradient><linearGradient id="i61" gradientUnits="userSpaceOnUse" x1="1319" x2="1698" y1="0" y2="0"><stop offset="0" stop-color="#00f3ff"/><stop offset="0.063" stop-color="#03e7ff"/><stop offset="0.243" stop-color="#bebfff"/><stop offset="0.302" stop-color="#ffb1fe"/><stop offset="0.36" stop-color="#ff80c8"/><stop offset="0.439" stop-color="#ff569a"/><stop offset="0.561" stop-color="#ff2f6f"/><stop offset="0.751" stop-color="#ff0e4a"/><stop offset="0.915" stop-color="#ff0038"/><stop offset="1" stop-color="#ff0031"/></linearGradient><linearGradient id="i62" gradientUnits="userSpaceOnUse" x1="1320" x2="1696" y1="0" y2="0"><stop offset="0" stop-color="#00edff"/><stop offset="0.059" stop-color="#00e2ff"/><stop offset="0.239" stop-color="#b6bbff"/><stop offset="0.309" stop-color="#ffa9fc"/><stop offset="0.367" stop-color="#ff7bc8"/><stop offset="0.452" stop-color="#ff5098"/><stop offset="0.58" stop-color="#ff2b6d"/><stop offset="0.777" stop-color="#ff0b49"/><stop offset="0.92" stop-color="#ff0039"/><stop offset="1" stop-color="#ff0033"/></linearGradient><linearGradient id="i63" gradientUnits="userSpaceOnUse" x1="1320" x2="1694" y1="0" y2="0"><stop offset="0" stop-color="#00e7ff"/><stop offset="0.059" stop-color="#00dcff"/><stop offset="0.23" stop-color="#a7b8ff"/><stop offset="0.316" stop-color="#ffa3fc"/><stop offset="0.374" stop-color="#ff77c9"/><stop offset="0.46" stop-color="#ff4e99"/><stop offset="0.588" stop-color="#ff296f"/><stop offset="0.791" stop-color="#ff094a"/><stop offset="0.925" stop-color="#ff003b"/><stop offset="1" stop-color="#ff0034"/></linearGradient><linearGradient id="i64" gradientUnits="userSpaceOnUse" x1="1321" x2="1691" y1="0" y2="0"><stop offset="0" stop-color="#00e2ff"/><stop offset="0.059" stop-color="#00d6ff"/><stop offset="0.254" stop-color="#bbaeff"/><stop offset="0.319" stop-color="#ff9fff"/><stop offset="0.378" stop-color="#ff74cc"/><stop offset="0.465" stop-color="#ff4c9b"/><stop offset="0.595" stop-color="#ff2870"/><stop offset="0.795" stop-color="#ff094c"/><stop offset="0.924" stop-color="#ff003d"/><stop offset="1" stop-color="#ff0036"/></linearGradient><linearGradient id="i65" gradientUnits="userSpaceOnUse" x1="1321" x2="1689" y1="0" y2="0"><stop offset="0" stop-color="#00dcff"/><stop offset="0.06" stop-color="#00d1ff"/><stop offset="0.255" stop-color="#b7a9ff"/><stop offset="0.326" stop-color="#ff9aff"/><stop offset="0.391" stop-color="#ff6dc9"/><stop offset="0.484" stop-color="#ff4598"/><stop offset="0.62" stop-color="#ff236e"/><stop offset="0.832" stop-color="#ff0549"/><stop offset="0.967" stop-color="#ff003b"/><stop offset="1" stop-color="#ff0038"/></linearGradient><linearGradient id="i66" gradientUnits="userSpaceOnUse" x1="1322" x2="1687" y1="0" y2="0"><stop offset="0" stop-color="#00d7ff"/><stop offset="0.06" stop-color="#01ccff"/><stop offset="0.264" stop-color="#bba3ff"/><stop offset="0.33" stop-color="#fd95ff"/><stop offset="0.407" stop-color="#ff64c3"/><stop offset="0.5" stop-color="#ff4095"/><stop offset="0.643" stop-color="#ff1e6b"/><stop offset="0.868" stop-color="#ff0147"/><stop offset="1" stop-color="#ff003a"/></linearGradient><linearGradient id="i67" gradientUnits="userSpaceOnUse" x1="1322" x2="1685" y1="0" y2="0"><stop offset="0" stop-color="#00d2ff"/><stop offset="0.061" stop-color="#01c7ff"/><stop offset="0.271" stop-color="#bd9eff"/><stop offset="0.337" stop-color="#fd8fff"/><stop offset="0.414" stop-color="#ff61c4"/><stop offset="0.514" stop-color="#ff3c94"/><stop offset="0.663" stop-color="#ff1b6a"/><stop offset="0.895" stop-color="#ff0046"/><stop offset="1" stop-color="#ff003c"/></linearGradient><linearGradient id="i68" gradientUnits="userSpaceOnUse" x1="1323" x2="1682" y1="0" y2="0"><stop offset="0" stop-color="#00cdff"/><stop offset="0.061" stop-color="#02c2ff"/><stop offset="0.279" stop-color="#c098ff"/><stop offset="0.346" stop-color="#ff89fe"/><stop offset="0.413" stop-color="#ff61ca"/><stop offset="0.508" stop-color="#ff3d9b"/><stop offset="0.648" stop-color="#ff1d71"/><stop offset="0.872" stop-color="#ff014c"/><stop offset="1" stop-color="#ff003e"/></linearGradient><linearGradient id="i69" gradientUnits="userSpaceOnUse" x1="1323" x2="1680" y1="0" y2="0"><stop offset="0" stop-color="#00c8ff"/><stop offset="0.062" stop-color="#01bdff"/><stop offset="0.281" stop-color="#bc94ff"/><stop offset="0.354" stop-color="#ff84fe"/><stop offset="0.421" stop-color="#ff5ecb"/><stop offset="0.517" stop-color="#ff3b9c"/><stop offset="0.663" stop-color="#ff1b71"/><stop offset="0.888" stop-color="#ff004c"/><stop offset="1" stop-color="#ff0040"/></linearGradient><linearGradient id="i70" gradientUnits="userSpaceOnUse" x1="1324" x2="1678" y1="0" y2="0"><stop offset="0" stop-color="#00c3ff"/><stop offset="0.062" stop-color="#03b9ff"/><stop offset="0.288" stop-color="#bf8eff"/><stop offset="0.362" stop-color="#ff7efd"/><stop offset="0.435" stop-color="#ff57c7"/><stop offset="0.537" stop-color="#ff3598"/><stop offset="0.689" stop-color="#ff166e"/><stop offset="0.904" stop-color="#ff004c"/><stop offset="1" stop-color="#ff0042"/></linearGradient><linearGradient id="i71" gradientUnits="userSpaceOnUse" x1="1324" x2="1676" y1="0" y2="0"><stop offset="0" stop-color="#00bfff"/><stop offset="0.062" stop-color="#02b5ff"/><stop offset="0.295" stop-color="#c08aff"/><stop offset="0.369" stop-color="#ff7afd"/><stop offset="0.443" stop-color="#ff54c8"/><stop offset="0.545" stop-color="#ff3399"/><stop offset="0.699" stop-color="#ff156f"/><stop offset="0.903" stop-color="#ff004f"/><stop offset="1" stop-color="#ff0044"/></linearGradient><linearGradient id="i72" gradientUnits="userSpaceOnUse" x1="1325" x2="1673" y1="0" y2="0"><stop offset="0" stop-color="#00bbff"/><stop offset="0.057" stop-color="#00b1ff"/><stop offset="0.276" stop-color="#ab8aff"/><stop offset="0.374" stop-color="#ff77ff"/><stop offset="0.448" stop-color="#ff52ca"/><stop offset="0.552" stop-color="#ff319b"/><stop offset="0.707" stop-color="#ff1471"/><stop offset="0.908" stop-color="#ff0051"/><stop offset="1" stop-color="#ff0047"/></linearGradient><linearGradient id="i73" gradientUnits="userSpaceOnUse" x1="1325" x2="1671" y1="0" y2="0"><stop offset="0" stop-color="#00b7ff"/><stop offset="0.064" stop-color="#03acff"/><stop offset="0.306" stop-color="#bf81ff"/><stop offset="0.382" stop-color="#ff72ff"/><stop offset="0.457" stop-color="#ff4fcb"/><stop offset="0.566" stop-color="#ff2e9a"/><stop offset="0.728" stop-color="#ff116f"/><stop offset="0.913" stop-color="#ff0052"/><stop offset="1" stop-color="#ff0049"/></linearGradient><linearGradient id="i74" gradientUnits="userSpaceOnUse" x1="1326" x2="1669" y1="0" y2="0"><stop offset="0" stop-color="#00b2ff"/><stop offset="0.058" stop-color="#00a9ff"/><stop offset="0.304" stop-color="#ba7eff"/><stop offset="0.392" stop-color="#ff6cfc"/><stop offset="0.474" stop-color="#ff48c6"/><stop offset="0.591" stop-color="#ff2895"/><stop offset="0.76" stop-color="#ff0d6c"/><stop offset="0.918" stop-color="#ff0054"/><stop offset="1" stop-color="#ff004b"/></linearGradient><linearGradient id="i75" gradientUnits="userSpaceOnUse" x1="1326" x2="1667" y1="0" y2="0"><stop offset="0" stop-color="#00afff"/><stop offset="0.059" stop-color="#00a5ff"/><stop offset="0.3" stop-color="#b27cff"/><stop offset="0.4" stop-color="#ff68fc"/><stop offset="0.482" stop-color="#ff45c6"/><stop offset="0.6" stop-color="#ff2696"/><stop offset="0.776" stop-color="#ff0b6c"/><stop offset="0.918" stop-color="#ff0057"/><stop offset="1" stop-color="#ff004d"/></linearGradient><linearGradient id="i76" gradientUnits="userSpaceOnUse" x1="1327" x2="1664" y1="0" y2="0"><stop offset="0" stop-color="#00aaff"/><stop offset="0.06" stop-color="#01a1ff"/><stop offset="0.321" stop-color="#be75ff"/><stop offset="0.405" stop-color="#ff65fe"/><stop offset="0.488" stop-color="#ff43c9"/><stop offset="0.607" stop-color="#ff2598"/><stop offset="0.78" stop-color="#ff0a6f"/><stop offset="0.923" stop-color="#ff0059"/><stop offset="1" stop-color="#ff004f"/></linearGradient><linearGradient id="i77" gradientUnits="userSpaceOnUse" x1="1327" x2="1662" y1="0" y2="0"><stop offset="0" stop-color="#00a7ff"/><stop offset="0.06" stop-color="#009eff"/><stop offset="0.323" stop-color="#bb72ff"/><stop offset="0.413" stop-color="#ff61fe"/><stop offset="0.497" stop-color="#ff41c9"/><stop offset="0.617" stop-color="#ff2399"/><stop offset="0.796" stop-color="#ff086e"/><stop offset="0.928" stop-color="#ff005a"/><stop offset="1" stop-color="#ff0052"/></linearGradient><linearGradient id="i78" gradientUnits="userSpaceOnUse" x1="1327" x2="1660" y1="0" y2="0"><stop offset="0" stop-color="#00a4ff"/><stop offset="0.06" stop-color="#009aff"/><stop offset="0.319" stop-color="#b370ff"/><stop offset="0.422" stop-color="#ff5efe"/><stop offset="0.506" stop-color="#ff3eca"/><stop offset="0.627" stop-color="#ff219a"/><stop offset="0.807" stop-color="#ff076f"/><stop offset="0.934" stop-color="#ff005c"/><stop offset="1" stop-color="#ff0054"/></linearGradient><linearGradient id="i79" gradientUnits="userSpaceOnUse" x1="1328" x2="1658" y1="0" y2="0"><stop offset="0" stop-color="#00a0ff"/><stop offset="0.061" stop-color="#0197ff"/><stop offset="0.339" stop-color="#be6aff"/><stop offset="0.43" stop-color="#ff59fd"/><stop offset="0.521" stop-color="#ff39c7"/><stop offset="0.648" stop-color="#ff1d97"/><stop offset="0.836" stop-color="#ff046d"/><stop offset="1" stop-color="#ff0056"/></linearGradient><linearGradient id="i80" gradientUnits="userSpaceOnUse" x1="1328" x2="1655" y1="0" y2="0"><stop offset="0" stop-color="#009cff"/><stop offset="0.061" stop-color="#0093ff"/><stop offset="0.344" stop-color="#bb67ff"/><stop offset="0.442" stop-color="#ff55fc"/><stop offset="0.534" stop-color="#ff36c7"/><stop offset="0.663" stop-color="#ff1b97"/><stop offset="0.853" stop-color="#ff036e"/><stop offset="1" stop-color="#ff0059"/></linearGradient><linearGradient id="i81" gradientUnits="userSpaceOnUse" x1="1329" x2="1653" y1="0" y2="0"><stop offset="0" stop-color="#0099ff"/><stop offset="0.062" stop-color="#0190ff"/><stop offset="0.352" stop-color="#be63ff"/><stop offset="0.444" stop-color="#ff53ff"/><stop offset="0.537" stop-color="#ff35c9"/><stop offset="0.667" stop-color="#ff1a9a"/><stop offset="0.858" stop-color="#ff0270"/><stop offset="1" stop-color="#ff005b"/></linearGradient><linearGradient id="i82" gradientUnits="userSpaceOnUse" x1="1329" x2="1651" y1="0" y2="0"><stop offset="0" stop-color="#0096ff"/><stop offset="0.062" stop-color="#018dff"/><stop offset="0.36" stop-color="#be5fff"/><stop offset="0.453" stop-color="#ff50ff"/><stop offset="0.547" stop-color="#ff33ca"/><stop offset="0.677" stop-color="#ff189b"/><stop offset="0.87" stop-color="#ff0170"/><stop offset="1" stop-color="#ff005e"/></linearGradient><linearGradient id="i83" gradientUnits="userSpaceOnUse" x1="1330" x2="1648" y1="0" y2="0"><stop offset="0" stop-color="#0092ff"/><stop offset="0.063" stop-color="#028aff"/><stop offset="0.365" stop-color="#bd5cff"/><stop offset="0.465" stop-color="#ff4cfd"/><stop offset="0.56" stop-color="#ff2fc9"/><stop offset="0.698" stop-color="#ff1599"/><stop offset="0.899" stop-color="#ff006f"/><stop offset="1" stop-color="#ff0061"/></linearGradient><linearGradient id="i84" gradientUnits="userSpaceOnUse" x1="1330" x2="1646" y1="0" y2="0"><stop offset="0" stop-color="#008fff"/><stop offset="0.063" stop-color="#0187ff"/><stop offset="0.373" stop-color="#be59ff"/><stop offset="0.475" stop-color="#ff48fd"/><stop offset="0.576" stop-color="#ff2cc7"/><stop offset="0.715" stop-color="#ff1398"/><stop offset="0.911" stop-color="#ff0070"/><stop offset="1" stop-color="#ff0063"/></linearGradient><linearGradient id="i85" gradientUnits="userSpaceOnUse" x1="1331" x2="1644" y1="0" y2="0"><stop offset="0" stop-color="#008cff"/><stop offset="0.064" stop-color="#0384ff"/><stop offset="0.378" stop-color="#bd56ff"/><stop offset="0.481" stop-color="#ff46fe"/><stop offset="0.583" stop-color="#ff2ac8"/><stop offset="0.724" stop-color="#ff1199"/><stop offset="0.91" stop-color="#ff0073"/><stop offset="1" stop-color="#ff0066"/></linearGradient><linearGradient id="i86" gradientUnits="userSpaceOnUse" x1="1331" x2="1642" y1="0" y2="0"><stop offset="0" stop-color="#0089ff"/><stop offset="0.065" stop-color="#0281ff"/><stop offset="0.387" stop-color="#be53ff"/><stop offset="0.49" stop-color="#ff43fe"/><stop offset="0.594" stop-color="#ff28c9"/><stop offset="0.742" stop-color="#ff0f98"/><stop offset="0.91" stop-color="#ff0076"/><stop offset="1" stop-color="#ff0068"/></linearGradient><linearGradient id="i87" gradientUnits="userSpaceOnUse" x1="1332" x2="1639" y1="0" y2="0"><stop offset="0" stop-color="#0086ff"/><stop offset="0.065" stop-color="#037eff"/><stop offset="0.399" stop-color="#c14fff"/><stop offset="0.503" stop-color="#ff3ffc"/><stop offset="0.608" stop-color="#ff25c8"/><stop offset="0.758" stop-color="#ff0d98"/><stop offset="0.915" stop-color="#ff0078"/><stop offset="1" stop-color="#ff006b"/></linearGradient><linearGradient id="i88" gradientUnits="userSpaceOnUse" x1="1332" x2="1637" y1="0" y2="0"><stop offset="0" stop-color="#0084ff"/><stop offset="0.066" stop-color="#037bff"/><stop offset="0.401" stop-color="#be4dff"/><stop offset="0.513" stop-color="#ff3cfc"/><stop offset="0.618" stop-color="#ff23c8"/><stop offset="0.77" stop-color="#ff0c99"/><stop offset="0.914" stop-color="#ff007b"/><stop offset="1" stop-color="#ff006e"/></linearGradient><linearGradient id="i89" gradientUnits="userSpaceOnUse" x1="1333" x2="1635" y1="0" y2="0"><stop offset="0" stop-color="#0081ff"/><stop offset="0.06" stop-color="#0079ff"/><stop offset="0.404" stop-color="#bc4bff"/><stop offset="0.517" stop-color="#ff3aff"/><stop offset="0.629" stop-color="#ff20c8"/><stop offset="0.788" stop-color="#ff0998"/><stop offset="0.921" stop-color="#ff007d"/><stop offset="1" stop-color="#ff0071"/></linearGradient><linearGradient id="i90" gradientUnits="userSpaceOnUse" x1="1333" x2="1633" y1="0" y2="0"><stop offset="0" stop-color="#007eff"/><stop offset="0.067" stop-color="#0376ff"/><stop offset="0.42" stop-color="#c147ff"/><stop offset="0.527" stop-color="#ff38ff"/><stop offset="0.64" stop-color="#ff1ec9"/><stop offset="0.8" stop-color="#ff0899"/><stop offset="0.927" stop-color="#ff007f"/><stop offset="1" stop-color="#ff0073"/></linearGradient><linearGradient id="i91" gradientUnits="userSpaceOnUse" x1="1334" x2="1630" y1="0" y2="0"><stop offset="0" stop-color="#007bff"/><stop offset="0.061" stop-color="#0174ff"/><stop offset="0.419" stop-color="#bc46ff"/><stop offset="0.541" stop-color="#ff34fd"/><stop offset="0.655" stop-color="#ff1cc8"/><stop offset="0.818" stop-color="#ff0699"/><stop offset="0.946" stop-color="#ff007f"/><stop offset="1" stop-color="#ff0077"/></linearGradient><linearGradient id="i92" gradientUnits="userSpaceOnUse" x1="1334" x2="1628" y1="0" y2="0"><stop offset="0" stop-color="#0079ff"/><stop offset="0.068" stop-color="#0471ff"/><stop offset="0.435" stop-color="#c042ff"/><stop offset="0.551" stop-color="#ff31fd"/><stop offset="0.667" stop-color="#ff1ac9"/><stop offset="0.83" stop-color="#ff0599"/><stop offset="0.966" stop-color="#ff007f"/><stop offset="1" stop-color="#ff007a"/></linearGradient><linearGradient id="i93" gradientUnits="userSpaceOnUse" x1="1335" x2="1626" y1="0" y2="0"><stop offset="0" stop-color="#0076ff"/><stop offset="0.062" stop-color="#016fff"/><stop offset="0.441" stop-color="#c03fff"/><stop offset="0.559" stop-color="#ff2ffe"/><stop offset="0.676" stop-color="#ff18ca"/><stop offset="0.841" stop-color="#ff049a"/><stop offset="1" stop-color="#ff007d"/></linearGradient><linearGradient id="i94" gradientUnits="userSpaceOnUse" x1="1335" x2="1624" y1="0" y2="0"><stop offset="0" stop-color="#0074ff"/><stop offset="0.062" stop-color="#016dff"/><stop offset="0.444" stop-color="#bd3eff"/><stop offset="0.569" stop-color="#ff2dfe"/><stop offset="0.694" stop-color="#ff15c8"/><stop offset="0.868" stop-color="#ff0198"/><stop offset="1" stop-color="#ff0080"/></linearGradient><linearGradient id="i95" gradientUnits="userSpaceOnUse" x1="1336" x2="1621" y1="0" y2="0"><stop offset="0" stop-color="#0072ff"/><stop offset="0.063" stop-color="#026aff"/><stop offset="0.458" stop-color="#bf3bff"/><stop offset="0.585" stop-color="#ff29fc"/><stop offset="0.711" stop-color="#ff13c7"/><stop offset="0.894" stop-color="#ff0097"/><stop offset="1" stop-color="#ff0083"/></linearGradient><linearGradient id="i96" gradientUnits="userSpaceOnUse" x1="1336" x2="1619" y1="0" y2="0"><stop offset="0" stop-color="#006fff"/><stop offset="0.064" stop-color="#0168ff"/><stop offset="0.461" stop-color="#bd39ff"/><stop offset="0.596" stop-color="#ff27fc"/><stop offset="0.723" stop-color="#ff11c7"/><stop offset="0.908" stop-color="#ff0097"/><stop offset="1" stop-color="#ff0086"/></linearGradient><linearGradient id="i97" gradientUnits="userSpaceOnUse" x1="1336" x2="1617" y1="0" y2="0"><stop offset="0" stop-color="#006dff"/><stop offset="0.064" stop-color="#0166ff"/><stop offset="0.471" stop-color="#bd36ff"/><stop offset="0.607" stop-color="#ff25fc"/><stop offset="0.736" stop-color="#ff10c8"/><stop offset="0.907" stop-color="#ff009b"/><stop offset="1" stop-color="#ff0089"/></linearGradient><linearGradient id="i98" gradientUnits="userSpaceOnUse" x1="1337" x2="1615" y1="0" y2="0"><stop offset="0" stop-color="#006bff"/><stop offset="0.065" stop-color="#0264ff"/><stop offset="0.482" stop-color="#bf34ff"/><stop offset="0.612" stop-color="#ff24ff"/><stop offset="0.748" stop-color="#ff0ec8"/><stop offset="0.914" stop-color="#ff009d"/><stop offset="1" stop-color="#ff008d"/></linearGradient><linearGradient id="i99" gradientUnits="userSpaceOnUse" x1="1337" x2="1612" y1="0" y2="0"><stop offset="0" stop-color="#0069ff"/><stop offset="0.066" stop-color="#0162ff"/><stop offset="0.489" stop-color="#bd32ff"/><stop offset="0.628" stop-color="#ff21fe"/><stop offset="0.766" stop-color="#ff0cc8"/><stop offset="0.92" stop-color="#ff00a0"/><stop offset="1" stop-color="#ff0090"/></linearGradient><linearGradient id="i100" gradientUnits="userSpaceOnUse" x1="1338" x2="1610" y1="0" y2="0"><stop offset="0" stop-color="#0066ff"/><stop offset="0.066" stop-color="#0260ff"/><stop offset="0.5" stop-color="#bf30ff"/><stop offset="0.64" stop-color="#ff1efe"/><stop offset="0.779" stop-color="#ff0ac8"/><stop offset="0.919" stop-color="#ff00a4"/><stop offset="1" stop-color="#ff0094"/></linearGradient><linearGradient id="i101" gradientUnits="userSpaceOnUse" x1="1338" x2="1608" y1="0" y2="0"><stop offset="0" stop-color="#0065ff"/><stop offset="0.067" stop-color="#025eff"/><stop offset="0.511" stop-color="#bf2dff"/><stop offset="0.652" stop-color="#ff1cfe"/><stop offset="0.793" stop-color="#ff09c8"/><stop offset="0.926" stop-color="#ff00a6"/><stop offset="1" stop-color="#ff0097"/></linearGradient><linearGradient id="i102" gradientUnits="userSpaceOnUse" x1="1339" x2="1605" y1="0" y2="0"><stop offset="0" stop-color="#0062ff"/><stop offset="0.068" stop-color="#035cff"/><stop offset="0.519" stop-color="#be2bff"/><stop offset="0.669" stop-color="#ff1afc"/><stop offset="0.82" stop-color="#ff06c6"/><stop offset="0.94" stop-color="#ff00a8"/><stop offset="1" stop-color="#ff009b"/></linearGradient><linearGradient id="i103" gradientUnits="userSpaceOnUse" x1="1339" x2="1603" y1="0" y2="0"><stop offset="0" stop-color="#0060ff"/><stop offset="0.068" stop-color="#025aff"/><stop offset="0.53" stop-color="#bf29ff"/><stop offset="0.682" stop-color="#ff18fc"/><stop offset="0.833" stop-color="#ff04c6"/><stop offset="0.985" stop-color="#ff00a2"/><stop offset="1" stop-color="#ff009f"/></linearGradient><linearGradient id="i104" gradientUnits="userSpaceOnUse" x1="1340" x2="1601" y1="0" y2="0"><stop offset="0" stop-color="#005eff"/><stop offset="0.069" stop-color="#0358ff"/><stop offset="0.538" stop-color="#bf27ff"/><stop offset="0.692" stop-color="#ff16fc"/><stop offset="0.846" stop-color="#ff03c7"/><stop offset="1" stop-color="#ff00a3"/></linearGradient><linearGradient id="i105" gradientUnits="userSpaceOnUse" x1="1340" x2="1599" y1="0" y2="0"><stop offset="0" stop-color="#005dff"/><stop offset="0.07" stop-color="#0356ff"/><stop offset="0.55" stop-color="#bf25ff"/><stop offset="0.705" stop-color="#ff14fc"/><stop offset="0.86" stop-color="#ff02c7"/><stop offset="1" stop-color="#ff00a6"/></linearGradient><linearGradient id="i106" gradientUnits="userSpaceOnUse" x1="1341" x2="1596" y1="0" y2="0"><stop offset="0" stop-color="#005aff"/><stop offset="0.071" stop-color="#0454ff"/><stop offset="0.567" stop-color="#c223ff"/><stop offset="0.717" stop-color="#ff12fe"/><stop offset="0.874" stop-color="#ff01c9"/><stop offset="1" stop-color="#ff00ab"/></linearGradient><linearGradient id="i107" gradientUnits="userSpaceOnUse" x1="1341" x2="1594" y1="0" y2="0"><stop offset="0" stop-color="#0059ff"/><stop offset="0.071" stop-color="#0352ff"/><stop offset="0.571" stop-color="#bf21ff"/><stop offset="0.73" stop-color="#ff10fe"/><stop offset="0.889" stop-color="#ff00c9"/><stop offset="1" stop-color="#ff00af"/></linearGradient><linearGradient id="i108" gradientUnits="userSpaceOnUse" x1="1342" x2="1592" y1="0" y2="0"><stop offset="0" stop-color="#0057ff"/><stop offset="0.064" stop-color="#0151ff"/><stop offset="0.576" stop-color="#bd20ff"/><stop offset="0.744" stop-color="#ff0efe"/><stop offset="0.912" stop-color="#ff00c7"/><stop offset="1" stop-color="#ff00b3"/></linearGradient><linearGradient id="i109" gradientUnits="userSpaceOnUse" x1="1342" x2="1590" y1="0" y2="0"><stop offset="0" stop-color="#0055ff"/><stop offset="0.073" stop-color="#044fff"/><stop offset="0.597" stop-color="#c11dff"/><stop offset="0.758" stop-color="#ff0dfe"/><stop offset="0.911" stop-color="#ff00cc"/><stop offset="1" stop-color="#ff00b7"/></linearGradient><linearGradient id="i110" gradientUnits="userSpaceOnUse" x1="1343" x2="1587" y1="0" y2="0"><stop offset="0" stop-color="#0053ff"/><stop offset="0.066" stop-color="#024eff"/><stop offset="0.607" stop-color="#c01cff"/><stop offset="0.779" stop-color="#ff0afc"/><stop offset="0.918" stop-color="#ff00d0"/><stop offset="1" stop-color="#ff00bc"/></linearGradient><linearGradient id="i111" gradientUnits="userSpaceOnUse" x1="1343" x2="1585" y1="0" y2="0"><stop offset="0" stop-color="#0052ff"/><stop offset="0.066" stop-color="#014cff"/><stop offset="0.612" stop-color="#be1bff"/><stop offset="0.793" stop-color="#ff09fc"/><stop offset="0.926" stop-color="#ff00d2"/><stop offset="1" stop-color="#ff00c0"/></linearGradient><linearGradient id="i112" gradientUnits="userSpaceOnUse" x1="1344" x2="1583" y1="0" y2="0"><stop offset="0" stop-color="#0050ff"/><stop offset="0.067" stop-color="#024aff"/><stop offset="0.63" stop-color="#c118ff"/><stop offset="0.807" stop-color="#ff07fd"/><stop offset="0.933" stop-color="#ff00d5"/><stop offset="1" stop-color="#ff00c4"/></linearGradient><linearGradient id="i113" gradientUnits="userSpaceOnUse" x1="1344" x2="1581" y1="0" y2="0"><stop offset="0" stop-color="#004eff"/><stop offset="0.068" stop-color="#0249ff"/><stop offset="0.636" stop-color="#be17ff"/><stop offset="0.822" stop-color="#ff05fd"/><stop offset="0.949" stop-color="#ff00d5"/><stop offset="1" stop-color="#ff00c8"/></linearGradient><linearGradient id="i114" gradientUnits="userSpaceOnUse" x1="1345" x2="1578" y1="0" y2="0"><stop offset="0" stop-color="#004cff"/><stop offset="0.069" stop-color="#0347ff"/><stop offset="0.655" stop-color="#c015ff"/><stop offset="0.836" stop-color="#ff04fe"/><stop offset="0.991" stop-color="#ff00d0"/><stop offset="1" stop-color="#ff00ce"/></linearGradient><linearGradient id="i115" gradientUnits="userSpaceOnUse" x1="1345" x2="1576" y1="0" y2="0"><stop offset="0" stop-color="#004bff"/><stop offset="0.07" stop-color="#0246ff"/><stop offset="0.661" stop-color="#be14ff"/><stop offset="0.852" stop-color="#ff02fe"/><stop offset="1" stop-color="#ff00d3"/></linearGradient><linearGradient id="i116" gradientUnits="userSpaceOnUse" x1="1345" x2="1574" y1="0" y2="0"><stop offset="0" stop-color="#004aff"/><stop offset="0.07" stop-color="#0244ff"/><stop offset="0.675" stop-color="#bf12ff"/><stop offset="0.868" stop-color="#ff01fe"/><stop offset="1" stop-color="#ff00d7"/></linearGradient><linearGradient id="i117" gradientUnits="userSpaceOnUse" x1="1346" x2="1572" y1="0" y2="0"><stop offset="0" stop-color="#0048ff"/><stop offset="0.071" stop-color="#0343ff"/><stop offset="0.69" stop-color="#c010ff"/><stop offset="0.885" stop-color="#ff00fe"/><stop offset="1" stop-color="#ff00dc"/></linearGradient><linearGradient id="i118" gradientUnits="userSpaceOnUse" x1="1346" x2="1569" y1="0" y2="0"><stop offset="0" stop-color="#0047ff"/><stop offset="0.072" stop-color="#0241ff"/><stop offset="0.703" stop-color="#be0fff"/><stop offset="0.91" stop-color="#ff00fd"/><stop offset="1" stop-color="#ff00e2"/></linearGradient><linearGradient id="i119" gradientUnits="userSpaceOnUse" x1="1347" x2="1567" y1="0" y2="0"><stop offset="0" stop-color="#0045ff"/><stop offset="0.073" stop-color="#0340ff"/><stop offset="0.718" stop-color="#bf0dff"/><stop offset="0.918" stop-color="#ff00ff"/><stop offset="1" stop-color="#ff00e7"/></linearGradient><linearGradient id="i120" gradientUnits="userSpaceOnUse" x1="1347" x2="1565" y1="0" y2="0"><stop offset="0" stop-color="#0044ff"/><stop offset="0.073" stop-color="#033eff"/><stop offset="0.734" stop-color="#c00cff"/><stop offset="0.927" stop-color="#fc00ff"/><stop offset="1" stop-color="#ff00ec"/></linearGradient><linearGradient id="i121" gradientUnits="userSpaceOnUse" x1="1348" x2="1563" y1="0" y2="0"><stop offset="0" stop-color="#0042ff"/><stop offset="0.075" stop-color="#043dff"/><stop offset="0.748" stop-color="#c00aff"/><stop offset="0.925" stop-color="#f600ff"/><stop offset="0.963" stop-color="#ff00fd"/><stop offset="1" stop-color="#ff00f2"/></linearGradient><linearGradient id="i122" gradientUnits="userSpaceOnUse" x1="1348" x2="1560" y1="0" y2="0"><stop offset="0" stop-color="#0041ff"/><stop offset="0.075" stop-color="#033cff"/><stop offset="0.764" stop-color="#c009ff"/><stop offset="0.934" stop-color="#f200ff"/><stop offset="0.991" stop-color="#ff00fb"/><stop offset="1" stop-color="#ff00f8"/></linearGradient><linearGradient id="i123" gradientUnits="userSpaceOnUse" x1="1349" x2="1558" y1="0" y2="0"><stop offset="0" stop-color="#003fff"/><stop offset="0.077" stop-color="#043aff"/><stop offset="0.779" stop-color="#c008ff"/><stop offset="0.942" stop-color="#ef00ff"/><stop offset="1" stop-color="#ff00fe"/></linearGradient><linearGradient id="i124" gradientUnits="userSpaceOnUse" x1="1349" x2="1556" y1="0" y2="0"><stop offset="0" stop-color="#003eff"/><stop offset="0.078" stop-color="#0339ff"/><stop offset="0.796" stop-color="#c006ff"/><stop offset="0.951" stop-color="#ec00ff"/><stop offset="1" stop-color="#fa00ff"/></linearGradient><linearGradient id="i125" gradientUnits="userSpaceOnUse" x1="1350" x2="1553" y1="0" y2="0"><stop offset="0" stop-color="#003cff"/><stop offset="0.069" stop-color="#0238ff"/><stop offset="0.812" stop-color="#c005ff"/><stop offset="0.98" stop-color="#ee00ff"/><stop offset="1" stop-color="#f400ff"/></linearGradient><linearGradient id="i126" gradientUnits="userSpaceOnUse" x1="1350" x2="1551" y1="0" y2="0"><stop offset="0" stop-color="#003bff"/><stop offset="0.08" stop-color="#0436ff"/><stop offset="0.83" stop-color="#c003ff"/><stop offset="1" stop-color="#ee00ff"/></linearGradient><linearGradient id="i127" gradientUnits="userSpaceOnUse" x1="1351" x2="1549" y1="0" y2="0"><stop offset="0" stop-color="#003aff"/><stop offset="0.071" stop-color="#0235ff"/><stop offset="0.838" stop-color="#be03ff"/><stop offset="1" stop-color="#e900ff"/></linearGradient><linearGradient id="i128" gradientUnits="userSpaceOnUse" x1="1351" x2="1547" y1="0" y2="0"><stop offset="0" stop-color="#0039ff"/><stop offset="0.071" stop-color="#0234ff"/><stop offset="0.857" stop-color="#bf01ff"/><stop offset="1" stop-color="#e400ff"/></linearGradient><linearGradient id="i129" gradientUnits="userSpaceOnUse" x1="1352" x2="1544" y1="0" y2="0"><stop offset="0" stop-color="#0037ff"/><stop offset="0.073" stop-color="#0333ff"/><stop offset="0.885" stop-color="#c000ff"/><stop offset="1" stop-color="#dd00ff"/></linearGradient><linearGradient id="i130" gradientUnits="userSpaceOnUse" x1="1352" x2="1542" y1="0" y2="0"><stop offset="0" stop-color="#0036ff"/><stop offset="0.074" stop-color="#0232ff"/><stop offset="0.895" stop-color="#be00ff"/><stop offset="1" stop-color="#d800ff"/></linearGradient><linearGradient id="i131" gradientUnits="userSpaceOnUse" x1="1353" x2="1540" y1="0" y2="0"><stop offset="0" stop-color="#0035ff"/><stop offset="0.075" stop-color="#0331ff"/><stop offset="0.925" stop-color="#c100ff"/><stop offset="1" stop-color="#d300ff"/></linearGradient><linearGradient id="i132" gradientUnits="userSpaceOnUse" x1="1353" x2="1538" y1="0" y2="0"><stop offset="0" stop-color="#0034ff"/><stop offset="0.076" stop-color="#0330ff"/><stop offset="0.924" stop-color="#bd00ff"/><stop offset="1" stop-color="#cf00ff"/></linearGradient><linearGradient id="i133" gradientUnits="userSpaceOnUse" x1="1354" x2="1535" y1="0" y2="0"><stop offset="0" stop-color="#0032ff"/><stop offset="0.078" stop-color="#032eff"/><stop offset="0.922" stop-color="#b700ff"/><stop offset="1" stop-color="#c900ff"/></linearGradient><linearGradient id="i134" gradientUnits="userSpaceOnUse" x1="1354" x2="1533" y1="0" y2="0"><stop offset="0" stop-color="#0031ff"/><stop offset="0.079" stop-color="#032dff"/><stop offset="0.933" stop-color="#b500ff"/><stop offset="1" stop-color="#c400ff"/></linearGradient><linearGradient id="i135" gradientUnits="userSpaceOnUse" x1="1354" x2="1531" y1="0" y2="0"><stop offset="0" stop-color="#0030ff"/><stop offset="0.08" stop-color="#032cff"/><stop offset="0.932" stop-color="#b100ff"/><stop offset="1" stop-color="#c000ff"/></linearGradient><linearGradient id="i136" gradientUnits="userSpaceOnUse" x1="1355" x2="1529" y1="0" y2="0"><stop offset="0" stop-color="#002fff"/><stop offset="0.08" stop-color="#032bff"/><stop offset="0.931" stop-color="#ad00ff"/><stop offset="1" stop-color="#bb00ff"/></linearGradient><linearGradient id="i137" gradientUnits="userSpaceOnUse" x1="1355" x2="1526" y1="0" y2="0"><stop offset="0" stop-color="#002eff"/><stop offset="0.082" stop-color="#032aff"/><stop offset="0.929" stop-color="#a700ff"/><stop offset="1" stop-color="#b600ff"/></linearGradient><linearGradient id="i138" gradientUnits="userSpaceOnUse" x1="1356" x2="1524" y1="0" y2="0"><stop offset="0" stop-color="#002dff"/><stop offset="0.083" stop-color="#0429ff"/><stop offset="0.929" stop-color="#a300ff"/><stop offset="1" stop-color="#b100ff"/></linearGradient><linearGradient id="i139" gradientUnits="userSpaceOnUse" x1="1356" x2="1522" y1="0" y2="0"><stop offset="0" stop-color="#002cff"/><stop offset="0.084" stop-color="#0328ff"/><stop offset="0.928" stop-color="#9f00ff"/><stop offset="1" stop-color="#ad00ff"/></linearGradient><linearGradient id="i140" gradientUnits="userSpaceOnUse" x1="1357" x2="1520" y1="0" y2="0"><stop offset="0" stop-color="#002bff"/><stop offset="0.086" stop-color="#0427ff"/><stop offset="0.938" stop-color="#9d00ff"/><stop offset="1" stop-color="#a900ff"/></linearGradient><linearGradient id="i141" gradientUnits="userSpaceOnUse" x1="1357" x2="1517" y1="0" y2="0"><stop offset="0" stop-color="#002aff"/><stop offset="0.087" stop-color="#0326ff"/><stop offset="0.938" stop-color="#9800ff"/><stop offset="1" stop-color="#a400ff"/></linearGradient><linearGradient id="i142" gradientUnits="userSpaceOnUse" x1="1358" x2="1515" y1="0" y2="0"><stop offset="0" stop-color="#0029ff"/><stop offset="0.09" stop-color="#0425ff"/><stop offset="0.936" stop-color="#9400ff"/><stop offset="1" stop-color="#a000ff"/></linearGradient><linearGradient id="i143" gradientUnits="userSpaceOnUse" x1="1358" x2="1513" y1="0" y2="0"><stop offset="0" stop-color="#0028ff"/><stop offset="0.091" stop-color="#0424ff"/><stop offset="0.935" stop-color="#9100ff"/><stop offset="1" stop-color="#9c00ff"/></linearGradient><linearGradient id="i144" gradientUnits="userSpaceOnUse" x1="1359" x2="1511" y1="0" y2="0"><stop offset="0" stop-color="#0027ff"/><stop offset="0.092" stop-color="#0423ff"/><stop offset="0.934" stop-color="#8d00ff"/><stop offset="1" stop-color="#9800ff"/></linearGradient><linearGradient id="i145" gradientUnits="userSpaceOnUse" x1="1359" x2="1508" y1="0" y2="0"><stop offset="0" stop-color="#0026ff"/><stop offset="0.095" stop-color="#0422ff"/><stop offset="0.946" stop-color="#8a00ff"/><stop offset="1" stop-color="#9300ff"/></linearGradient><linearGradient id="i146" gradientUnits="userSpaceOnUse" x1="1360" x2="1506" y1="0" y2="0"><stop offset="0" stop-color="#0025ff"/><stop offset="0.096" stop-color="#0521ff"/><stop offset="0.945" stop-color="#8700ff"/><stop offset="1" stop-color="#9000ff"/></linearGradient><linearGradient id="i147" gradientUnits="userSpaceOnUse" x1="1360" x2="1504" y1="0" y2="0"><stop offset="0" stop-color="#0024ff"/><stop offset="0.097" stop-color="#0420ff"/><stop offset="0.944" stop-color="#8300ff"/><stop offset="1" stop-color="#8c00ff"/></linearGradient><linearGradient id="i148" gradientUnits="userSpaceOnUse" x1="1361" x2="1501" y1="0" y2="0"><stop offset="0" stop-color="#0023ff"/><stop offset="0.1" stop-color="#051fff"/><stop offset="0.957" stop-color="#8100ff"/><stop offset="1" stop-color="#8800ff"/></linearGradient><linearGradient id="i149" gradientUnits="userSpaceOnUse" x1="1361" x2="1499" y1="0" y2="0"><stop offset="0" stop-color="#0022ff"/><stop offset="0.101" stop-color="#051eff"/><stop offset="0.957" stop-color="#7e00ff"/><stop offset="1" stop-color="#8400ff"/></linearGradient><linearGradient id="i150" gradientUnits="userSpaceOnUse" x1="1362" x2="1497" y1="0" y2="0"><stop offset="0" stop-color="#0021ff"/><stop offset="0.09" stop-color="#031eff"/><stop offset="0.955" stop-color="#7a00ff"/><stop offset="1" stop-color="#8100ff"/></linearGradient><linearGradient id="i151" gradientUnits="userSpaceOnUse" x1="1362" x2="1495" y1="0" y2="0"><stop offset="0" stop-color="#0020ff"/><stop offset="0.106" stop-color="#051cff"/><stop offset="0.955" stop-color="#7700ff"/><stop offset="1" stop-color="#7d00ff"/></linearGradient><linearGradient id="i152" gradientUnits="userSpaceOnUse" x1="1363" x2="1492" y1="0" y2="0"><stop offset="0" stop-color="#001fff"/><stop offset="0.094" stop-color="#041cff"/><stop offset="0.969" stop-color="#7500ff"/><stop offset="1" stop-color="#7900ff"/></linearGradient><linearGradient id="i153" gradientUnits="userSpaceOnUse" x1="1363" x2="1490" y1="0" y2="0"><stop offset="0" stop-color="#001eff"/><stop offset="0.095" stop-color="#031bff"/><stop offset="0.968" stop-color="#7100ff"/><stop offset="1" stop-color="#7600ff"/></linearGradient><linearGradient id="i154" gradientUnits="userSpaceOnUse" x1="1363" x2="1488" y1="0" y2="0"><stop offset="0" stop-color="#001eff"/><stop offset="0.113" stop-color="#051aff"/><stop offset="0.968" stop-color="#6e00ff"/><stop offset="1" stop-color="#7200ff"/></linearGradient><linearGradient id="i155" gradientUnits="userSpaceOnUse" x1="1364" x2="1486" y1="0" y2="0"><stop offset="0" stop-color="#001dff"/><stop offset="0.098" stop-color="#041aff"/><stop offset="0.967" stop-color="#6b00ff"/><stop offset="1" stop-color="#6f00ff"/></linearGradient><linearGradient id="i156" gradientUnits="userSpaceOnUse" x1="1364" x2="1483" y1="0" y2="0"><stop offset="0" stop-color="#001cff"/><stop offset="0.102" stop-color="#0319ff"/><stop offset="0.966" stop-color="#6700ff"/><stop offset="1" stop-color="#6b00ff"/></linearGradient><linearGradient id="i157" gradientUnits="userSpaceOnUse" x1="1365" x2="1481" y1="0" y2="0"><stop offset="0" stop-color="#001bff"/><stop offset="0.103" stop-color="#0418ff"/><stop offset="0.966" stop-color="#6400ff"/><stop offset="1" stop-color="#6800ff"/></linearGradient><linearGradient id="i158" gradientUnits="userSpaceOnUse" x1="1365" x2="1479" y1="0" y2="0"><stop offset="0" stop-color="#001aff"/><stop offset="0.105" stop-color="#0417ff"/><stop offset="0.982" stop-color="#6300ff"/><stop offset="1" stop-color="#6500ff"/></linearGradient><linearGradient id="i159" gradientUnits="userSpaceOnUse" x1="1366" x2="1477" y1="0" y2="0"><stop offset="0" stop-color="#0019ff"/><stop offset="0.127" stop-color="#0616ff"/><stop offset="0.982" stop-color="#6000ff"/><stop offset="1" stop-color="#6200ff"/></linearGradient><linearGradient id="i160" gradientUnits="userSpaceOnUse" x1="1366" x2="1474" y1="0" y2="0"><stop offset="0" stop-color="#0019ff"/><stop offset="0.111" stop-color="#0416ff"/><stop offset="0.981" stop-color="#5c00ff"/><stop offset="1" stop-color="#5e00ff"/></linearGradient><linearGradient id="i161" gradientUnits="userSpaceOnUse" x1="1367" x2="1472" y1="0" y2="0"><stop offset="0" stop-color="#0018ff"/><stop offset="0.135" stop-color="#0614ff"/><stop offset="0.981" stop-color="#5900ff"/><stop offset="1" stop-color="#5b00ff"/></linearGradient><linearGradient id="i162" gradientUnits="userSpaceOnUse" x1="1367" x2="1470" y1="0" y2="0"><stop offset="0" stop-color="#0017ff"/><stop offset="0.137" stop-color="#0614ff"/><stop offset="0.98" stop-color="#5700ff"/><stop offset="1" stop-color="#5900ff"/></linearGradient><linearGradient id="i163" gradientUnits="userSpaceOnUse" x1="1368" x2="1468" y1="0" y2="0"><stop offset="0" stop-color="#0016ff"/><stop offset="0.14" stop-color="#0613ff"/><stop offset="1" stop-color="#5600ff"/></linearGradient><linearGradient id="i164" gradientUnits="userSpaceOnUse" x1="1368" x2="1465" y1="0" y2="0"><stop offset="0" stop-color="#0016ff"/><stop offset="0.146" stop-color="#0612ff"/><stop offset="1" stop-color="#5200ff"/></linearGradient><linearGradient id="i165" gradientUnits="userSpaceOnUse" x1="1369" x2="1463" y1="0" y2="0"><stop offset="0" stop-color="#0015ff"/><stop offset="0.149" stop-color="#0711ff"/><stop offset="1" stop-color="#4f00ff"/></linearGradient><linearGradient id="i166" gradientUnits="userSpaceOnUse" x1="1369" x2="1461" y1="0" y2="0"><stop offset="0" stop-color="#0014ff"/><stop offset="0.152" stop-color="#0611ff"/><stop offset="1" stop-color="#4d00ff"/></linearGradient><linearGradient id="i167" gradientUnits="userSpaceOnUse" x1="1370" x2="1459" y1="0" y2="0"><stop offset="0" stop-color="#0013ff"/><stop offset="0.136" stop-color="#0510ff"/><stop offset="1" stop-color="#4a00ff"/></linearGradient><linearGradient id="i168" gradientUnits="userSpaceOnUse" x1="1370" x2="1456" y1="0" y2="0"><stop offset="0" stop-color="#0013ff"/><stop offset="0.163" stop-color="#070fff"/><stop offset="1" stop-color="#4700ff"/></linearGradient><linearGradient id="i169" gradientUnits="userSpaceOnUse" x1="1371" x2="1454" y1="0" y2="0"><stop offset="0" stop-color="#0012ff"/><stop offset="0.171" stop-color="#070eff"/><stop offset="1" stop-color="#4400ff"/></linearGradient><linearGradient id="i170" gradientUnits="userSpaceOnUse" x1="1371" x2="1452" y1="0" y2="0"><stop offset="0" stop-color="#0011ff"/><stop offset="0.175" stop-color="#070eff"/><stop offset="1" stop-color="#4200ff"/></linearGradient><linearGradient id="i171" gradientUnits="userSpaceOnUse" x1="1372" x2="1449" y1="0" y2="0"><stop offset="0" stop-color="#0010ff"/><stop offset="0.211" stop-color="#090cff"/><stop offset="1" stop-color="#3e00ff"/></linearGradient><linearGradient id="i172" gradientUnits="userSpaceOnUse" x1="1372" x2="1447" y1="0" y2="0"><stop offset="0" stop-color="#0010ff"/><stop offset="0.189" stop-color="#070cff"/><stop offset="1" stop-color="#3c00ff"/></linearGradient><linearGradient id="i173" gradientUnits="userSpaceOnUse" x1="1372" x2="1445" y1="0" y2="0"><stop offset="0" stop-color="#000fff"/><stop offset="0.194" stop-color="#070cff"/><stop offset="1" stop-color="#3900ff"/></linearGradient><linearGradient id="i174" gradientUnits="userSpaceOnUse" x1="1373" x2="1443" y1="0" y2="0"><stop offset="0" stop-color="#000eff"/><stop offset="0.257" stop-color="#0b0aff"/><stop offset="1" stop-color="#3700ff"/></linearGradient><linearGradient id="i175" gradientUnits="userSpaceOnUse" x1="1373" x2="1440" y1="0" y2="0"><stop offset="0" stop-color="#000eff"/><stop offset="0.242" stop-color="#090aff"/><stop offset="1" stop-color="#3400ff"/></linearGradient><linearGradient id="i176" gradientUnits="userSpaceOnUse" x1="1374" x2="1438" y1="0" y2="0"><stop offset="0" stop-color="#000dff"/><stop offset="0.344" stop-color="#0e08ff"/><stop offset="1" stop-color="#3200ff"/></linearGradient><linearGradient id="i177" gradientUnits="userSpaceOnUse" x1="1374" x2="1436" y1="0" y2="0"><stop offset="0" stop-color="#000cff"/><stop offset="0.29" stop-color="#0a08ff"/><stop offset="1" stop-color="#2f00ff"/></linearGradient><linearGradient id="i178" gradientUnits="userSpaceOnUse" x1="1375" x2="1434" y1="0" y2="0"><stop offset="0" stop-color="#000cff"/><stop offset="0.483" stop-color="#1405ff"/><stop offset="1" stop-color="#2d00ff"/></linearGradient><linearGradient id="i179" gradientUnits="userSpaceOnUse" x1="1375" x2="1431" y1="0" y2="0"><stop offset="0" stop-color="#000bff"/><stop offset="0.393" stop-color="#0e06ff"/><stop offset="1" stop-color="#2a00ff"/></linearGradient><linearGradient id="i180" gradientUnits="userSpaceOnUse" x1="1376" x2="1429" y1="0" y2="0"><stop offset="0" stop-color="#000aff"/><stop offset="0.808" stop-color="#1f01ff"/><stop offset="1" stop-color="#2800ff"/></linearGradient><linearGradient id="i181" gradientUnits="userSpaceOnUse" x1="1376" x2="1427" y1="0" y2="0"><stop offset="0" stop-color="#000aff"/><stop offset="0.6" stop-color="#1503ff"/><stop offset="1" stop-color="#2600ff"/></linearGradient><linearGradient id="i182" gradientUnits="userSpaceOnUse" x1="1377" x2="1425" y1="0" y2="0"><stop offset="0" stop-color="#0009ff"/><stop offset="1" stop-color="#2400ff"/></linearGradient><linearGradient id="i183" gradientUnits="userSpaceOnUse" x1="1377" x2="1422" y1="0" y2="0"><stop offset="0" stop-color="#0009ff"/><stop offset="1" stop-color="#2100ff"/></linearGradient><linearGradient id="i184" gradientUnits="userSpaceOnUse" x1="1378" x2="1420" y1="0" y2="0"><stop offset="0" stop-color="#0008ff"/><stop offset="1" stop-color="#1f00ff"/></linearGradient><linearGradient id="i185" gradientUnits="userSpaceOnUse" x1="1378" x2="1418" y1="0" y2="0"><stop offset="0" stop-color="#0007ff"/><stop offset="1" stop-color="#1d00ff"/></linearGradient><linearGradient id="i186" gradientUnits="userSpaceOnUse" x1="1379" x2="1416" y1="0" y2="0"><stop offset="0" stop-color="#0007ff"/><stop offset="1" stop-color="#1b00ff"/></linearGradient><linearGradient id="i187" gradientUnits="userSpaceOnUse" x1="1379" x2="1413" y1="0" y2="0"><stop offset="0" stop-color="#0006ff"/><stop offset="1" stop-color="#1800ff"/></linearGradient><linearGradient id="i188" gradientUnits="userSpaceOnUse" x1="1380" x2="1411" y1="0" y2="0"><stop offset="0" stop-color="#0006ff"/><stop offset="1" stop-color="#1600ff"/></linearGradient><linearGradient id="i189" gradientUnits="userSpaceOnUse" x1="1380" x2="1409" y1="0" y2="0"><stop offset="0" stop-color="#0005ff"/><stop offset="1" stop-color="#1400ff"/></linearGradient><linearGradient id="i190" gradientUnits="userSpaceOnUse" x1="1381" x2="1407" y1="0" y2="0"><stop offset="0" stop-color="#0004ff"/><stop offset="1" stop-color="#1200ff"/></linearGradient><linearGradient id="i191" gradientUnits="userSpaceOnUse" x1="1381" x2="1404" y1="0" y2="0"><stop offset="0" stop-color="#0004ff"/><stop offset="1" stop-color="#0f00ff"/></linearGradient><linearGradient id="i192" gradientUnits="userSpaceOnUse" x1="1382" x2="1402" y1="0" y2="0"><stop offset="0" stop-color="#0003ff"/><stop offset="1" stop-color="#0e00ff"/></linearGradient><linearGradient id="i193" gradientUnits="userSpaceOnUse" x1="1382" x2="1400" y1="0" y2="0"><stop offset="0" stop-color="#0003ff"/><stop offset="1" stop-color="#0c00ff"/></linearGradient><linearGradient id="i194" gradientUnits="userSpaceOnUse" x1="1382" x2="1397" y1="0" y2="0"><stop offset="0" stop-color="#0003ff"/><stop offset="1" stop-color="#0900ff"/></linearGradient><linearGradient id="i195" gradientUnits="userSpaceOnUse" x1="1383" x2="1395" y1="0" y2="0"><stop offset="0" stop-color="#0002ff"/><stop offset="1" stop-color="#0700ff"/></linearGradient><linearGradient id="i196" gradientUnits="userSpaceOnUse" x1="1383" x2="1393" y1="0" y2="0"><stop offset="0" stop-color="#0001ff"/><stop offset="1" stop-color="#0600ff"/></linearGradient><linearGradient id="i197" gradientUnits="userSpaceOnUse" x1="1384" x2="1391" y1="0" y2="0"><stop offset="0" stop-color="#0001ff"/><stop offset="1" stop-color="#0400ff"/></linearGradient><linearGradient id="i198" gradientUnits="userSpaceOnUse" x1="1384" x2="1388" y1="0" y2="0"><stop offset="0" stop-color="#0000ff"/><stop offset="1" stop-color="#0100ff"/></linearGradient><clipPath id="cpl"><path d="M1485.6,586.3 1485.6,586.4 1485.6,586.4 1485.6,586.4 1485.6,586.4 1485.6,586.5 1485.6,586.5 1485.6,586.5 1485.6,586.6 1485.5,586.6 1485.5,586.6 1485.5,586.6 1485.5,586.7 1485.4,586.7 1485.4,586.7 1485.4,586.7 1485.3,586.7 1485.3,586.8 1485.3,586.8 1485.2,586.8 1485.2,586.8 1485.2,586.8 1485.1,586.8 1485.1,586.8 1485.0,586.9 1485.0,586.9 1485.0,586.9 1484.9,586.9 1484.9,586.9 1484.8,586.9 1484.8,586.9 1484.7,586.9 1484.7,586.9 1484.6,586.9 1484.6,586.9 1484.5,586.9 1484.5,586.9 1484.4,586.9 1484.4,586.9 1484.3,586.9 1484.3,586.9 1484.2,586.9 1484.2,586.9 1484.1,586.9 1484.1,586.9 1484.0,586.9 1483.9,586.9 1483.9,586.9 1483.8,586.9 1483.7,586.9 1483.7,586.9 1483.6,586.9 1483.5,586.9 1483.4,586.8 1483.3,586.8 1483.2,586.8 1483.2,586.8 1483.1,586.8 1483.0,586.8 1482.9,586.7 1482.8,586.7 1482.7,586.7 1482.6,586.7 1482.4,586.6 1482.3,586.6 1482.2,586.6 1482.1,586.6 1482.0,586.5 1481.8,586.5 1481.7,586.5 1481.6,586.4 1481.4,586.4 1481.3,586.4 1481.1,586.3 1481.0,586.3 1480.8,586.3 1480.7,586.2 1480.5,586.2 1480.3,586.1 1480.2,586.1 1480.0,586.0 1479.8,586.0 1479.6,585.9 1479.4,585.8 1479.1,585.6 1478.8,585.4 1478.5,585.2 1478.2,585.0 1477.8,584.7 1477.4,584.4 1477.0,584.1 1476.6,583.8 1476.2,583.5 1475.8,583.2 1475.4,582.8 1474.9,582.5 1474.5,582.1 1474.0,581.7 1473.5,581.4 1473.0,581.0 1472.6,580.6 1472.1,580.2 1471.5,579.8 1471.0,579.4 1470.4,578.9 1469.8,578.4 1469.2,577.9 1468.6,577.4 1467.9,576.8 1467.2,576.2 1466.5,575.6 1465.8,575.0 1465.0,574.4 1464.3,573.8 1463.5,573.1 1462.7,572.4 1461.9,571.7 1461.1,571.0 1460.3,570.3 1459.4,569.6 1458.6,568.9 1457.7,568.2 1456.8,567.4 1455.8,566.7 1454.8,565.9 1453.8,565.0 1452.8,564.2 1451.8,563.3 1450.7,562.4 1449.6,561.5 1448.4,560.6 1447.3,559.6 1446.1,558.7 1444.9,557.7 1443.6,556.7 1442.4,555.6 1441.1,554.6 1439.8,553.5 1438.5,552.4 1437.1,551.2 1435.8,550.1 1434.4,548.9 1432.9,547.7 1431.4,546.4 1429.9,545.1 1428.3,543.8 1426.7,542.5 1425.1,541.1 1423.4,539.7 1421.7,538.2 1420.0,536.7 1418.2,535.2 1416.4,533.6 1414.6,532.0 1412.7,530.3 1410.8,528.7 1408.9,526.9 1407.0,525.2 1405.0,523.4 1403.1,521.5 1401.1,519.7 1399.0,517.7 1397.0,515.7 1394.8,513.6 1392.6,511.4 1390.4,509.2 1388.0,506.8 1385.7,504.3 1383.2,501.7 1380.7,499.0 1378.1,496.2 1375.4,493.2 1372.6,490.1 1369.8,486.7 1366.8,483.2 1363.7,479.5 1360.6,475.7 1357.4,471.7 1354.2,467.7 1350.9,463.5 1347.6,459.3 1344.3,455.0 1340.9,450.4 1337.4,445.7 1333.8,440.8 1330.2,435.8 1326.6,430.6 1322.9,425.3 1319.2,419.9 1315.4,414.4 1311.7,408.9 1307.9,403.2 1304.1,397.3 1300.2,391.2 1296.2,385.0 1292.3,378.6 1288.3,372.2 1284.4,365.7 1280.4,359.2 1276.5,352.6 1272.7,346.1 1268.8,339.5 1264.9,332.8 1261.0,326.0 1257.1,319.2 1253.2,312.3 1249.4,305.4 1245.7,298.5 1242.0,291.7 1238.5,284.9 1235.1,278.2 1231.8,271.5 1228.6,264.8 1225.4,258.1 1222.3,251.4 1219.3,244.7 1216.3,238.1 1213.5,231.6 1210.8,225.2 1208.2,219.0 1205.8,213.0 1203.4,207.0 1201.1,201.1 1198.8,195.3 1196.6,189.5 1194.5,183.9 1192.5,178.4 1190.7,173.0 1188.9,167.8 1187.3,162.8 1185.9,158.0 1184.5,153.4 1183.2,148.8 1181.9,144.4 1180.7,140.1 1179.5,135.9 1178.5,131.9 1177.5,128.0 1176.7,124.2 1176.0,120.6 1175.6,117.2 1175.2,113.8 1174.8,110.6 1174.4,107.5 1174.1,104.5 1173.8,101.6 1173.6,98.8 1173.3,96.1 1173.2,93.6 1173.1,91.1 1173.1,88.7 1173.1,86.4 1173.3,84.2 1173.6,82.0 1173.9,80.0 1174.3,77.9 1174.8,76.0 1175.3,74.2 1175.9,72.4 1176.4,70.7 1177.0,69.2 1177.6,67.7 1178.3,66.2 1179.1,64.8 1180.0,63.4 1181.0,62.1 1182.0,60.9 1183.1,59.7 1184.1,58.6 1185.2,57.7 1186.3,56.8 1187.5,55.9 1188.7,55.1 1189.9,54.4 1191.2,53.7 1192.5,53.0 1193.9,52.4 1195.3,51.8 1196.7,51.3 1198.2,50.8 1199.6,50.4 1201.1,50.1 1202.6,49.8 1204.1,49.5 1205.6,49.2 1207.2,49.0 1208.8,48.7 1210.5,48.5 1212.1,48.3 1213.7,48.2 1215.4,48.1 1217.0,48.0 1218.7,47.9 1220.4,47.8 1222.1,47.8 1223.9,47.7 1225.6,47.6 1227.3,47.6 1229.1,47.5 1230.8,47.5 1232.6,47.5 1234.3,47.5 1236.0,47.5 1237.8,47.5 1239.5,47.6 1241.2,47.6 1243.0,47.6 1244.7,47.6 1246.5,47.7 1248.3,47.7 1250.0,47.7 1251.8,47.8 1253.6,47.8 1255.4,47.9 1257.2,48.0 1259.0,48.1 1260.8,48.2 1262.7,48.3 1264.5,48.4 1266.4,48.5 1268.3,48.6 1270.2,48.7 1272.1,48.8 1274.0,49.0 1275.9,49.1 1277.9,49.2 1279.9,49.4 1281.9,49.5 1283.9,49.7 1285.9,49.9 1287.9,50.0 1290.0,50.2 1292.0,50.4 1294.1,50.5 1296.2,50.7 1298.3,50.9 1300.5,51.1 1302.6,51.3 1304.8,51.5 1307.0,51.7 1309.2,51.9 1311.5,52.2 1313.8,52.4 1316.0,52.6 1318.4,52.8 1320.7,53.1 1323.0,53.3 1325.4,53.6 1327.8,53.8 1330.2,54.1 1332.7,54.3 1335.2,54.6 1337.7,54.8 1340.2,55.1 1342.8,55.4 1345.4,55.7 1348.0,56.0 1350.6,56.2 1353.3,56.5 1356.0,56.8 1358.7,57.1 1361.4,57.4 1364.2,57.7 1367.0,58.0 1369.8,58.4 1372.7,58.7 1375.6,59.0 1378.5,59.3 1381.5,59.7 1384.4,60.0 1387.4,60.3 1390.5,60.7 1393.6,61.0 1396.7,61.4 1399.8,61.7 1403.0,62.1 1406.2,62.5 1409.4,62.8 1412.7,63.2 1416.0,63.6 1419.3,64.0 1422.6,64.3 1426.0,64.7 1429.4,65.1 1432.9,65.5 1436.4,65.9 1439.9,66.3 1443.4,66.7 1447.0,67.1 1450.6,67.6 1454.3,68.0 1457.9,68.4 1461.6,68.8 1465.4,69.3 1469.1,69.7 1472.9,70.1 1476.8,70.6 1480.6,71.0 1484.5,71.5 1488.5,71.9 1492.4,72.4 1496.4,72.8 1500.4,73.3 1504.5,73.8 1508.5,74.2 1512.6,74.7 1516.8,75.2 1520.9,75.7 1525.1,76.2 1529.3,76.7 1533.6,77.1 1537.8,77.6 1542.1,78.1 1546.4,78.6 1550.7,79.1 1555.1,79.6 1559.5,80.1 1563.9,80.6 1568.3,81.1 1572.7,81.6 1577.1,82.1 1581.5,82.7 1586.0,83.2 1590.5,83.7 1595.0,84.2 1599.5,84.7 1604.0,85.3 1608.5,85.8 1612.9,86.3 1617.4,86.8 1621.8,87.3 1626.2,87.8 1630.6,88.3 1634.9,88.8 1639.3,89.3 1643.6,89.8 1648.0,90.3 1652.3,90.8 1656.6,91.3 1660.9,91.8 1665.2,92.3 1669.4,92.8 1673.7,93.3 1678.0,93.8 1682.3,94.3 1686.6,94.8 1690.8,95.3 1695.0,95.8 1699.2,96.3 1703.3,96.7 1707.3,97.2 1711.3,97.7 1715.3,98.1 1719.2,98.6 1723.1,99.0 1727.0,99.4 1730.8,99.9 1734.6,100.3 1738.3,100.7 1742.0,101.1 1745.6,101.6 1749.1,102.0 1752.7,102.4 1756.2,102.8 1759.6,103.2 1763.1,103.6 1766.4,104.0 1769.7,104.4 1773.0,104.7 1776.2,105.1 1779.3,105.5 1782.4,105.8 1785.5,106.2 1788.5,106.5 1791.5,106.9 1794.4,107.2 1797.3,107.6 1800.1,107.9 1802.8,108.2 1805.5,108.5 1808.1,108.8 1810.6,109.1 1813.1,109.4 1815.6,109.7 1818.0,110.0 1820.4,110.2 1822.8,110.5 1825.1,110.8 1827.4,111.0 1829.7,111.3 1831.9,111.6 1834.1,111.8 1836.3,112.1 1838.5,112.3 1840.6,112.5 1842.6,112.8 1844.7,113.0 1846.7,113.3 1848.6,113.5 1850.6,113.7 1852.5,113.9 1854.3,114.1 1856.2,114.3 1858.0,114.6 1859.8,114.8 1861.6,115.0 1863.4,115.2 1865.1,115.4 1866.8,115.6 1868.5,115.8 1870.2,116.0 1871.8,116.2 1873.4,116.3 1875.0,116.5 1876.5,116.7 1878.0,116.9 1879.5,117.0 1880.9,117.2 1882.3,117.4 1883.6,117.5 1884.9,117.7 1886.2,117.8 1887.5,118.0 1888.7,118.1 1889.9,118.3 1891.2,118.4 1892.3,118.5 1893.5,118.7 1894.6,118.8 1895.8,118.9 1896.9,119.0 1897.9,119.2 1899.0,119.3 1900.0,119.4 1901.0,119.5 1901.9,119.6 1902.9,119.7 1903.8,119.8 1904.7,119.9 1905.5,120.0 1906.3,120.1 1907.1,120.2 1907.9,120.3 1908.7,120.4 1909.4,120.5 1910.2,120.6 1910.9,120.6 1911.6,120.7 1912.3,120.8 1913.0,120.9 1913.6,121.0 1914.3,121.0 1914.9,121.1 1915.5,121.2 1916.1,121.3 1916.6,121.3 1917.2,121.4 1917.7,121.4 1918.2,121.5 1918.6,121.5 1919.0,121.6 1919.4,121.6 1919.8,121.7 1920.2,121.7 1920.6,121.8 1920.9,121.8 1921.3,121.9 1921.7,121.9 1922.0,121.9 1922.4,122.0 1922.7,122.0 1923.0,122.1 1923.4,122.1 1923.7,122.1 1924.0,122.2 1924.3,122.2 1924.6,122.2 1924.9,122.3 1925.2,122.3 1925.5,122.3 1925.8,122.4 1926.0,122.4 1926.3,122.4 1926.6,122.5 1926.8,122.5 1927.1,122.5 1927.3,122.6 1927.5,122.6 1927.8,122.6 1928.0,122.6 1928.2,122.7 1928.4,122.7 1928.6,122.7 1928.8,122.7 1929.0,122.8 1929.2,122.8 1929.4,122.8 1929.6,122.8 1929.7,122.8 1929.9,122.9 1930.1,122.9 1930.2,122.9 1930.4,122.9 1930.5,122.9 1930.7,122.9 1930.8,123.0 1931.0,123.0 1931.1,123.0 1931.3,123.0 1931.4,123.0 1931.5,123.0 1931.7,123.1 1931.8,123.1 1932.0,123.1 1932.1,123.1 1932.2,123.1 1932.4,123.1 1932.5,123.2 1932.6,123.2 1932.7,123.2 1932.9,123.2 1933.0,123.2 1933.1,123.2 1933.2,123.2 1933.3,123.2 1933.4,123.3 1933.5,123.3 1933.6,123.3 1933.7,123.3 1933.7,123.3 1933.8,123.3 1933.9,123.3 1934.0,123.3 1934.0,123.3 1934.1,123.3 1934.1,123.3 1934.2,123.4 1934.2,123.4 1934.3,123.4 1934.3,123.4 1934.3,123.4Z"/></clipPath><clipPath id="cpp"><rect x="1172.5" y="38" width="732.5" height="563.5"/></clipPath><clipPath id="cpt"><path d="M1778.8,105.4 1292.0,56.1 1386.0,452.8Z"/></clipPath></defs><g clip-path="url(#cpp)"><g clip-path="url(#cpl)"><rect x="1200" y="47" width="89" height="3" fill="url(#o0)"/><rect x="1191" y="50" width="130" height="3" fill="url(#o1)"/><rect x="1186" y="53" width="164" height="3" fill="url(#o2)"/><rect x="1182" y="56" width="195" height="3" fill="url(#o3)"/><rect x="1180" y="59" width="224" height="3" fill="url(#o4)"/><rect x="1178" y="62" width="252" height="3" fill="url(#o5)"/><rect x="1176" y="65" width="280" height="3" fill="url(#o6)"/><rect x="1175" y="68" width="307" height="3" fill="url(#o7)"/><rect x="1174" y="71" width="334" height="3" fill="url(#o8)"/><rect x="1173" y="74" width="361" height="3" fill="url(#o9)"/><rect x="1172" y="77" width="388" height="3" fill="url(#o10)"/><rect x="1172" y="80" width="414" height="3" fill="url(#o11)"/><rect x="1172" y="83" width="440" height="3" fill="url(#o12)"/><rect x="1172" y="86" width="466" height="3" fill="url(#o13)"/><rect x="1172" y="89" width="492" height="3" fill="url(#o14)"/><rect x="1172" y="92" width="518" height="3" fill="url(#o15)"/><rect x="1172" y="95" width="544" height="3" fill="url(#o16)"/><rect x="1172" y="98" width="570" height="3" fill="url(#o17)"/><rect x="1172" y="101" width="596" height="3" fill="url(#o18)"/><rect x="1173" y="104" width="621" height="3" fill="url(#o19)"/><rect x="1173" y="107" width="647" height="3" fill="url(#o20)"/><rect x="1173" y="110" width="673" height="3" fill="url(#o21)"/><rect x="1174" y="113" width="698" height="3" fill="url(#o22)"/><rect x="1174" y="116" width="724" height="3" fill="url(#o23)"/><rect x="1174" y="119" width="732" height="3" fill="url(#o24)"/><rect x="1175" y="122" width="731" height="3" fill="url(#o25)"/><rect x="1175" y="125" width="731" height="3" fill="url(#o26)"/><rect x="1176" y="128" width="730" height="3" fill="url(#o27)"/><rect x="1177" y="131" width="729" height="3" fill="url(#o28)"/><rect x="1178" y="134" width="728" height="3" fill="url(#o29)"/><rect x="1178" y="137" width="728" height="3" fill="url(#o30)"/><rect x="1179" y="140" width="727" height="3" fill="url(#o31)"/><rect x="1180" y="143" width="726" height="3" fill="url(#o32)"/><rect x="1181" y="146" width="725" height="3" fill="url(#o33)"/><rect x="1182" y="149" width="724" height="3" fill="url(#o34)"/><rect x="1183" y="152" width="723" height="3" fill="url(#o35)"/><rect x="1183" y="155" width="722" height="3" fill="url(#o36)"/><rect x="1184" y="158" width="718" height="3" fill="url(#o37)"/><rect x="1185" y="161" width="714" height="3" fill="url(#o38)"/><rect x="1186" y="164" width="710" height="3" fill="url(#o39)"/><rect x="1187" y="167" width="707" height="3" fill="url(#o40)"/><rect x="1188" y="170" width="703" height="3" fill="url(#o41)"/><rect x="1189" y="173" width="699" height="3" fill="url(#o42)"/><rect x="1190" y="176" width="695" height="3" fill="url(#o43)"/><rect x="1191" y="179" width="691" height="3" fill="url(#o44)"/><rect x="1192" y="182" width="687" height="3" fill="url(#o45)"/><rect x="1193" y="185" width="683" height="3" fill="url(#o46)"/><rect x="1195" y="188" width="678" height="3" fill="url(#o47)"/><rect x="1196" y="191" width="674" height="3" fill="url(#o48)"/><rect x="1197" y="194" width="670" height="3" fill="url(#o49)"/><rect x="1198" y="197" width="666" height="3" fill="url(#o50)"/><rect x="1199" y="200" width="663" height="3" fill="url(#o51)"/><rect x="1200" y="203" width="659" height="3" fill="url(#o52)"/><rect x="1202" y="206" width="654" height="3" fill="url(#o53)"/><rect x="1203" y="209" width="650" height="3" fill="url(#o54)"/><rect x="1204" y="212" width="646" height="3" fill="url(#o55)"/><rect x="1205" y="215" width="642" height="3" fill="url(#o56)"/><rect x="1206" y="218" width="638" height="3" fill="url(#o57)"/><rect x="1208" y="221" width="633" height="3" fill="url(#o58)"/><rect x="1209" y="224" width="629" height="3" fill="url(#o59)"/><rect x="1210" y="227" width="625" height="3" fill="url(#o60)"/><rect x="1211" y="230" width="621" height="3" fill="url(#o61)"/><rect x="1213" y="233" width="617" height="3" fill="url(#o62)"/><rect x="1214" y="236" width="613" height="3" fill="url(#o63)"/><rect x="1215" y="239" width="609" height="3" fill="url(#o64)"/><rect x="1217" y="242" width="604" height="3" fill="url(#o65)"/><rect x="1218" y="245" width="600" height="3" fill="url(#o66)"/><rect x="1219" y="248" width="596" height="3" fill="url(#o67)"/><rect x="1221" y="251" width="591" height="3" fill="url(#o68)"/><rect x="1222" y="254" width="587" height="3" fill="url(#o69)"/><rect x="1223" y="257" width="583" height="3" fill="url(#o70)"/><rect x="1225" y="260" width="578" height="3" fill="url(#o71)"/><rect x="1226" y="263" width="574" height="3" fill="url(#o72)"/><rect x="1228" y="266" width="570" height="3" fill="url(#o73)"/><rect x="1229" y="269" width="566" height="3" fill="url(#o74)"/><rect x="1231" y="272" width="561" height="3" fill="url(#o75)"/><rect x="1232" y="275" width="557" height="3" fill="url(#o76)"/><rect x="1234" y="278" width="552" height="3" fill="url(#o77)"/><rect x="1235" y="281" width="548" height="3" fill="url(#o78)"/><rect x="1237" y="284" width="543" height="3" fill="url(#o79)"/><rect x="1238" y="287" width="539" height="3" fill="url(#o80)"/><rect x="1240" y="290" width="534" height="3" fill="url(#o81)"/><rect x="1241" y="293" width="530" height="3" fill="url(#o82)"/><rect x="1243" y="296" width="526" height="3" fill="url(#o83)"/><rect x="1244" y="299" width="522" height="3" fill="url(#o84)"/><rect x="1246" y="302" width="517" height="3" fill="url(#o85)"/><rect x="1248" y="305" width="512" height="3" fill="url(#o86)"/><rect x="1249" y="308" width="508" height="3" fill="url(#o87)"/><rect x="1251" y="311" width="503" height="3" fill="url(#o88)"/><rect x="1253" y="314" width="498" height="3" fill="url(#o89)"/><rect x="1254" y="317" width="494" height="3" fill="url(#o90)"/><rect x="1256" y="320" width="489" height="3" fill="url(#o91)"/><rect x="1258" y="323" width="484" height="3" fill="url(#o92)"/><rect x="1260" y="326" width="479" height="3" fill="url(#o93)"/><rect x="1261" y="329" width="476" height="3" fill="url(#o94)"/><rect x="1263" y="332" width="471" height="3" fill="url(#o95)"/><rect x="1265" y="335" width="466" height="3" fill="url(#o96)"/><rect x="1266" y="338" width="462" height="3" fill="url(#o97)"/><rect x="1268" y="341" width="457" height="3" fill="url(#o98)"/><rect x="1270" y="344" width="452" height="3" fill="url(#o99)"/><rect x="1272" y="347" width="447" height="3" fill="url(#o100)"/><rect x="1273" y="350" width="443" height="3" fill="url(#o101)"/><rect x="1275" y="353" width="438" height="3" fill="url(#o102)"/><rect x="1277" y="356" width="433" height="3" fill="url(#o103)"/><rect x="1279" y="359" width="428" height="3" fill="url(#o104)"/><rect x="1281" y="362" width="424" height="3" fill="url(#o105)"/><rect x="1282" y="365" width="420" height="3" fill="url(#o106)"/><rect x="1284" y="368" width="415" height="3" fill="url(#o107)"/><rect x="1286" y="371" width="410" height="3" fill="url(#o108)"/><rect x="1288" y="374" width="405" height="3" fill="url(#o109)"/><rect x="1290" y="377" width="400" height="3" fill="url(#o110)"/><rect x="1292" y="380" width="395" height="3" fill="url(#o111)"/><rect x="1294" y="383" width="390" height="3" fill="url(#o112)"/><rect x="1295" y="386" width="386" height="3" fill="url(#o113)"/><rect x="1297" y="389" width="381" height="3" fill="url(#o114)"/><rect x="1299" y="392" width="376" height="3" fill="url(#o115)"/><rect x="1301" y="395" width="372" height="3" fill="url(#o116)"/><rect x="1303" y="398" width="367" height="3" fill="url(#o117)"/><rect x="1305" y="401" width="362" height="3" fill="url(#o118)"/><rect x="1307" y="404" width="357" height="3" fill="url(#o119)"/><rect x="1309" y="407" width="352" height="3" fill="url(#o120)"/><rect x="1311" y="410" width="347" height="3" fill="url(#o121)"/><rect x="1313" y="413" width="342" height="3" fill="url(#o122)"/><rect x="1315" y="416" width="337" height="3" fill="url(#o123)"/><rect x="1317" y="419" width="332" height="3" fill="url(#o124)"/><rect x="1319" y="422" width="327" height="3" fill="url(#o125)"/><rect x="1321" y="425" width="322" height="3" fill="url(#o126)"/><rect x="1323" y="428" width="318" height="3" fill="url(#o127)"/><rect x="1325" y="431" width="313" height="3" fill="url(#o128)"/><rect x="1327" y="434" width="308" height="3" fill="url(#o129)"/><rect x="1330" y="437" width="302" height="3" fill="url(#o130)"/><rect x="1332" y="440" width="297" height="3" fill="url(#o131)"/><rect x="1334" y="443" width="292" height="3" fill="url(#o132)"/><rect x="1336" y="446" width="287" height="3" fill="url(#o133)"/><rect x="1338" y="449" width="282" height="3" fill="url(#o134)"/><rect x="1341" y="452" width="276" height="3" fill="url(#o135)"/><rect x="1343" y="455" width="271" height="3" fill="url(#o136)"/><rect x="1345" y="458" width="266" height="3" fill="url(#o137)"/><rect x="1347" y="461" width="262" height="3" fill="url(#o138)"/><rect x="1350" y="464" width="256" height="3" fill="url(#o139)"/><rect x="1352" y="467" width="251" height="3" fill="url(#o140)"/><rect x="1355" y="470" width="245" height="3" fill="url(#o141)"/><rect x="1357" y="473" width="240" height="3" fill="url(#o142)"/><rect x="1359" y="476" width="235" height="3" fill="url(#o143)"/><rect x="1362" y="479" width="229" height="3" fill="url(#o144)"/><rect x="1364" y="482" width="224" height="3" fill="url(#o145)"/><rect x="1367" y="485" width="218" height="3" fill="url(#o146)"/><rect x="1369" y="488" width="213" height="3" fill="url(#o147)"/><rect x="1372" y="491" width="208" height="3" fill="url(#o148)"/><rect x="1375" y="494" width="202" height="3" fill="url(#o149)"/><rect x="1377" y="497" width="197" height="3" fill="url(#o150)"/><rect x="1380" y="500" width="191" height="3" fill="url(#o151)"/><rect x="1383" y="503" width="185" height="3" fill="url(#o152)"/><rect x="1386" y="506" width="179" height="3" fill="url(#o153)"/><rect x="1389" y="509" width="173" height="3" fill="url(#o154)"/><rect x="1392" y="512" width="167" height="3" fill="url(#o155)"/><rect x="1395" y="515" width="161" height="3" fill="url(#o156)"/><rect x="1398" y="518" width="155" height="3" fill="url(#o157)"/><rect x="1401" y="521" width="149" height="3" fill="url(#o158)"/><rect x="1404" y="524" width="144" height="3" fill="url(#o159)"/><rect x="1408" y="527" width="137" height="3" fill="url(#o160)"/><rect x="1411" y="530" width="131" height="3" fill="url(#o161)"/><rect x="1414" y="533" width="125" height="3" fill="url(#o162)"/><rect x="1418" y="536" width="118" height="3" fill="url(#o163)"/><rect x="1421" y="539" width="112" height="3" fill="url(#o164)"/><rect x="1425" y="542" width="105" height="3" fill="url(#o165)"/><rect x="1428" y="545" width="99" height="3" fill="url(#o166)"/><rect x="1432" y="548" width="92" height="3" fill="url(#o167)"/><rect x="1435" y="551" width="86" height="3" fill="url(#o168)"/><rect x="1439" y="554" width="79" height="3" fill="url(#o169)"/><rect x="1443" y="557" width="73" height="3" fill="url(#o170)"/><rect x="1446" y="560" width="67" height="3" fill="url(#o171)"/><rect x="1450" y="563" width="60" height="3" fill="url(#o172)"/><rect x="1454" y="566" width="53" height="3" fill="url(#o173)"/><rect x="1457" y="569" width="47" height="3" fill="url(#o174)"/><rect x="1461" y="572" width="40" height="3" fill="url(#o175)"/><rect x="1464" y="575" width="34" height="3" fill="url(#o176)"/><rect x="1468" y="578" width="27" height="3" fill="url(#o177)"/><rect x="1472" y="581" width="20" height="3" fill="url(#o178)"/><rect x="1475" y="584" width="14" height="3" fill="url(#o179)"/></g><g clip-path="url(#cpt)"><rect x="1290" y="56" width="22" height="2" fill="url(#i0)"/><rect x="1291" y="58" width="41" height="2" fill="url(#i1)"/><rect x="1291" y="60" width="61" height="2" fill="url(#i2)"/><rect x="1292" y="62" width="80" height="2" fill="url(#i3)"/><rect x="1292" y="64" width="99" height="2" fill="url(#i4)"/><rect x="1293" y="66" width="118" height="2" fill="url(#i5)"/><rect x="1293" y="68" width="138" height="2" fill="url(#i6)"/><rect x="1294" y="70" width="157" height="2" fill="url(#i7)"/><rect x="1294" y="72" width="176" height="2" fill="url(#i8)"/><rect x="1295" y="74" width="195" height="2" fill="url(#i9)"/><rect x="1295" y="76" width="215" height="2" fill="url(#i10)"/><rect x="1296" y="78" width="234" height="2" fill="url(#i11)"/><rect x="1296" y="80" width="253" height="2" fill="url(#i12)"/><rect x="1297" y="82" width="272" height="2" fill="url(#i13)"/><rect x="1297" y="84" width="292" height="2" fill="url(#i14)"/><rect x="1298" y="86" width="311" height="2" fill="url(#i15)"/><rect x="1298" y="88" width="331" height="2" fill="url(#i16)"/><rect x="1299" y="90" width="349" height="2" fill="url(#i17)"/><rect x="1299" y="92" width="369" height="2" fill="url(#i18)"/><rect x="1299" y="94" width="389" height="2" fill="url(#i19)"/><rect x="1300" y="96" width="408" height="2" fill="url(#i20)"/><rect x="1300" y="98" width="427" height="2" fill="url(#i21)"/><rect x="1301" y="100" width="446" height="2" fill="url(#i22)"/><rect x="1301" y="102" width="466" height="2" fill="url(#i23)"/><rect x="1302" y="104" width="478" height="2" fill="url(#i24)"/><rect x="1302" y="106" width="478" height="2" fill="url(#i25)"/><rect x="1303" y="108" width="474" height="2" fill="url(#i26)"/><rect x="1303" y="110" width="472" height="2" fill="url(#i27)"/><rect x="1304" y="112" width="469" height="2" fill="url(#i28)"/><rect x="1304" y="114" width="467" height="2" fill="url(#i29)"/><rect x="1305" y="116" width="463" height="2" fill="url(#i30)"/><rect x="1305" y="118" width="461" height="2" fill="url(#i31)"/><rect x="1306" y="120" width="458" height="2" fill="url(#i32)"/><rect x="1306" y="122" width="456" height="2" fill="url(#i33)"/><rect x="1307" y="124" width="452" height="2" fill="url(#i34)"/><rect x="1307" y="126" width="450" height="2" fill="url(#i35)"/><rect x="1308" y="128" width="447" height="2" fill="url(#i36)"/><rect x="1308" y="130" width="444" height="2" fill="url(#i37)"/><rect x="1308" y="132" width="442" height="2" fill="url(#i38)"/><rect x="1309" y="134" width="439" height="2" fill="url(#i39)"/><rect x="1309" y="136" width="437" height="2" fill="url(#i40)"/><rect x="1310" y="138" width="433" height="2" fill="url(#i41)"/><rect x="1310" y="140" width="431" height="2" fill="url(#i42)"/><rect x="1311" y="142" width="428" height="2" fill="url(#i43)"/><rect x="1311" y="144" width="426" height="2" fill="url(#i44)"/><rect x="1312" y="146" width="422" height="2" fill="url(#i45)"/><rect x="1312" y="148" width="420" height="2" fill="url(#i46)"/><rect x="1313" y="150" width="417" height="2" fill="url(#i47)"/><rect x="1313" y="152" width="415" height="2" fill="url(#i48)"/><rect x="1314" y="154" width="411" height="2" fill="url(#i49)"/><rect x="1314" y="156" width="409" height="2" fill="url(#i50)"/><rect x="1315" y="158" width="406" height="2" fill="url(#i51)"/><rect x="1315" y="160" width="404" height="2" fill="url(#i52)"/><rect x="1316" y="162" width="400" height="2" fill="url(#i53)"/><rect x="1316" y="164" width="398" height="2" fill="url(#i54)"/><rect x="1317" y="166" width="395" height="2" fill="url(#i55)"/><rect x="1317" y="168" width="393" height="2" fill="url(#i56)"/><rect x="1317" y="170" width="390" height="2" fill="url(#i57)"/><rect x="1318" y="172" width="387" height="2" fill="url(#i58)"/><rect x="1318" y="174" width="385" height="2" fill="url(#i59)"/><rect x="1319" y="176" width="381" height="2" fill="url(#i60)"/><rect x="1319" y="178" width="379" height="2" fill="url(#i61)"/><rect x="1320" y="180" width="376" height="2" fill="url(#i62)"/><rect x="1320" y="182" width="374" height="2" fill="url(#i63)"/><rect x="1321" y="184" width="370" height="2" fill="url(#i64)"/><rect x="1321" y="186" width="368" height="2" fill="url(#i65)"/><rect x="1322" y="188" width="365" height="2" fill="url(#i66)"/><rect x="1322" y="190" width="363" height="2" fill="url(#i67)"/><rect x="1323" y="192" width="359" height="2" fill="url(#i68)"/><rect x="1323" y="194" width="357" height="2" fill="url(#i69)"/><rect x="1324" y="196" width="354" height="2" fill="url(#i70)"/><rect x="1324" y="198" width="352" height="2" fill="url(#i71)"/><rect x="1325" y="200" width="348" height="2" fill="url(#i72)"/><rect x="1325" y="202" width="346" height="2" fill="url(#i73)"/><rect x="1326" y="204" width="343" height="2" fill="url(#i74)"/><rect x="1326" y="206" width="341" height="2" fill="url(#i75)"/><rect x="1327" y="208" width="337" height="2" fill="url(#i76)"/><rect x="1327" y="210" width="335" height="2" fill="url(#i77)"/><rect x="1327" y="212" width="333" height="2" fill="url(#i78)"/><rect x="1328" y="214" width="330" height="2" fill="url(#i79)"/><rect x="1328" y="216" width="327" height="2" fill="url(#i80)"/><rect x="1329" y="218" width="324" height="2" fill="url(#i81)"/><rect x="1329" y="220" width="322" height="2" fill="url(#i82)"/><rect x="1330" y="222" width="318" height="2" fill="url(#i83)"/><rect x="1330" y="224" width="316" height="2" fill="url(#i84)"/><rect x="1331" y="226" width="313" height="2" fill="url(#i85)"/><rect x="1331" y="228" width="311" height="2" fill="url(#i86)"/><rect x="1332" y="230" width="307" height="2" fill="url(#i87)"/><rect x="1332" y="232" width="305" height="2" fill="url(#i88)"/><rect x="1333" y="234" width="302" height="2" fill="url(#i89)"/><rect x="1333" y="236" width="300" height="2" fill="url(#i90)"/><rect x="1334" y="238" width="296" height="2" fill="url(#i91)"/><rect x="1334" y="240" width="294" height="2" fill="url(#i92)"/><rect x="1335" y="242" width="291" height="2" fill="url(#i93)"/><rect x="1335" y="244" width="289" height="2" fill="url(#i94)"/><rect x="1336" y="246" width="285" height="2" fill="url(#i95)"/><rect x="1336" y="248" width="283" height="2" fill="url(#i96)"/><rect x="1336" y="250" width="281" height="2" fill="url(#i97)"/><rect x="1337" y="252" width="278" height="2" fill="url(#i98)"/><rect x="1337" y="254" width="275" height="2" fill="url(#i99)"/><rect x="1338" y="256" width="272" height="2" fill="url(#i100)"/><rect x="1338" y="258" width="270" height="2" fill="url(#i101)"/><rect x="1339" y="260" width="266" height="2" fill="url(#i102)"/><rect x="1339" y="262" width="264" height="2" fill="url(#i103)"/><rect x="1340" y="264" width="261" height="2" fill="url(#i104)"/><rect x="1340" y="266" width="259" height="2" fill="url(#i105)"/><rect x="1341" y="268" width="255" height="2" fill="url(#i106)"/><rect x="1341" y="270" width="253" height="2" fill="url(#i107)"/><rect x="1342" y="272" width="250" height="2" fill="url(#i108)"/><rect x="1342" y="274" width="248" height="2" fill="url(#i109)"/><rect x="1343" y="276" width="244" height="2" fill="url(#i110)"/><rect x="1343" y="278" width="242" height="2" fill="url(#i111)"/><rect x="1344" y="280" width="239" height="2" fill="url(#i112)"/><rect x="1344" y="282" width="237" height="2" fill="url(#i113)"/><rect x="1345" y="284" width="233" height="2" fill="url(#i114)"/><rect x="1345" y="286" width="231" height="2" fill="url(#i115)"/><rect x="1345" y="288" width="229" height="2" fill="url(#i116)"/><rect x="1346" y="290" width="226" height="2" fill="url(#i117)"/><rect x="1346" y="292" width="223" height="2" fill="url(#i118)"/><rect x="1347" y="294" width="220" height="2" fill="url(#i119)"/><rect x="1347" y="296" width="218" height="2" fill="url(#i120)"/><rect x="1348" y="298" width="215" height="2" fill="url(#i121)"/><rect x="1348" y="300" width="212" height="2" fill="url(#i122)"/><rect x="1349" y="302" width="209" height="2" fill="url(#i123)"/><rect x="1349" y="304" width="207" height="2" fill="url(#i124)"/><rect x="1350" y="306" width="203" height="2" fill="url(#i125)"/><rect x="1350" y="308" width="201" height="2" fill="url(#i126)"/><rect x="1351" y="310" width="198" height="2" fill="url(#i127)"/><rect x="1351" y="312" width="196" height="2" fill="url(#i128)"/><rect x="1352" y="314" width="192" height="2" fill="url(#i129)"/><rect x="1352" y="316" width="190" height="2" fill="url(#i130)"/><rect x="1353" y="318" width="187" height="2" fill="url(#i131)"/><rect x="1353" y="320" width="185" height="2" fill="url(#i132)"/><rect x="1354" y="322" width="181" height="2" fill="url(#i133)"/><rect x="1354" y="324" width="179" height="2" fill="url(#i134)"/><rect x="1354" y="326" width="177" height="2" fill="url(#i135)"/><rect x="1355" y="328" width="174" height="2" fill="url(#i136)"/><rect x="1355" y="330" width="171" height="2" fill="url(#i137)"/><rect x="1356" y="332" width="168" height="2" fill="url(#i138)"/><rect x="1356" y="334" width="166" height="2" fill="url(#i139)"/><rect x="1357" y="336" width="163" height="2" fill="url(#i140)"/><rect x="1357" y="338" width="160" height="2" fill="url(#i141)"/><rect x="1358" y="340" width="157" height="2" fill="url(#i142)"/><rect x="1358" y="342" width="155" height="2" fill="url(#i143)"/><rect x="1359" y="344" width="152" height="2" fill="url(#i144)"/><rect x="1359" y="346" width="149" height="2" fill="url(#i145)"/><rect x="1360" y="348" width="146" height="2" fill="url(#i146)"/><rect x="1360" y="350" width="144" height="2" fill="url(#i147)"/><rect x="1361" y="352" width="140" height="2" fill="url(#i148)"/><rect x="1361" y="354" width="138" height="2" fill="url(#i149)"/><rect x="1362" y="356" width="135" height="2" fill="url(#i150)"/><rect x="1362" y="358" width="133" height="2" fill="url(#i151)"/><rect x="1363" y="360" width="129" height="2" fill="url(#i152)"/><rect x="1363" y="362" width="127" height="2" fill="url(#i153)"/><rect x="1363" y="364" width="125" height="2" fill="url(#i154)"/><rect x="1364" y="366" width="122" height="2" fill="url(#i155)"/><rect x="1364" y="368" width="119" height="2" fill="url(#i156)"/><rect x="1365" y="370" width="116" height="2" fill="url(#i157)"/><rect x="1365" y="372" width="114" height="2" fill="url(#i158)"/><rect x="1366" y="374" width="111" height="2" fill="url(#i159)"/><rect x="1366" y="376" width="108" height="2" fill="url(#i160)"/><rect x="1367" y="378" width="105" height="2" fill="url(#i161)"/><rect x="1367" y="380" width="103" height="2" fill="url(#i162)"/><rect x="1368" y="382" width="100" height="2" fill="url(#i163)"/><rect x="1368" y="384" width="97" height="2" fill="url(#i164)"/><rect x="1369" y="386" width="94" height="2" fill="url(#i165)"/><rect x="1369" y="388" width="92" height="2" fill="url(#i166)"/><rect x="1370" y="390" width="89" height="2" fill="url(#i167)"/><rect x="1370" y="392" width="86" height="2" fill="url(#i168)"/><rect x="1371" y="394" width="83" height="2" fill="url(#i169)"/><rect x="1371" y="396" width="81" height="2" fill="url(#i170)"/><rect x="1372" y="398" width="77" height="2" fill="url(#i171)"/><rect x="1372" y="400" width="75" height="2" fill="url(#i172)"/><rect x="1372" y="402" width="73" height="2" fill="url(#i173)"/><rect x="1373" y="404" width="70" height="2" fill="url(#i174)"/><rect x="1373" y="406" width="67" height="2" fill="url(#i175)"/><rect x="1374" y="408" width="64" height="2" fill="url(#i176)"/><rect x="1374" y="410" width="62" height="2" fill="url(#i177)"/><rect x="1375" y="412" width="59" height="2" fill="url(#i178)"/><rect x="1375" y="414" width="56" height="2" fill="url(#i179)"/><rect x="1376" y="416" width="53" height="2" fill="url(#i180)"/><rect x="1376" y="418" width="51" height="2" fill="url(#i181)"/><rect x="1377" y="420" width="48" height="2" fill="url(#i182)"/><rect x="1377" y="422" width="45" height="2" fill="url(#i183)"/><rect x="1378" y="424" width="42" height="2" fill="url(#i184)"/><rect x="1378" y="426" width="40" height="2" fill="url(#i185)"/><rect x="1379" y="428" width="37" height="2" fill="url(#i186)"/><rect x="1379" y="430" width="34" height="2" fill="url(#i187)"/><rect x="1380" y="432" width="31" height="2" fill="url(#i188)"/><rect x="1380" y="434" width="29" height="2" fill="url(#i189)"/><rect x="1381" y="436" width="26" height="2" fill="url(#i190)"/><rect x="1381" y="438" width="23" height="2" fill="url(#i191)"/><rect x="1382" y="440" width="20" height="2" fill="url(#i192)"/><rect x="1382" y="442" width="18" height="2" fill="url(#i193)"/><rect x="1382" y="444" width="15" height="2" fill="url(#i194)"/><rect x="1383" y="446" width="12" height="2" fill="url(#i195)"/><rect x="1383" y="448" width="10" height="2" fill="url(#i196)"/><rect x="1384" y="450" width="7" height="2" fill="url(#i197)"/><rect x="1384" y="452" width="4" height="1" fill="url(#i198)"/></g></g>
<rect x="1171.6" y="37" width="734.0" height="564.9" fill="none" stroke="#9c9c9c" stroke-width="1.6"/>
<line x1="1164.2" y1="602.4" x2="1171.6" y2="602.4" stroke="#dddddd" stroke-width="1.6"/>
<text x="1163.4" y="608" font-size="16" fill="#d6d6d6" text-anchor="end">0</text>
<line x1="1171.2" y1="601.9" x2="1171.2" y2="608.8" stroke="#dddddd" stroke-width="1.7"/>
<text x="1171.2" y="627" font-size="16" fill="#d6d6d6" text-anchor="middle">0</text>
<line x1="1164.2" y1="555.325" x2="1171.6" y2="555.325" stroke="#dddddd" stroke-width="1.6"/>
<text x="1163.4" y="560.925" font-size="16" fill="#d6d6d6" text-anchor="end">0.05</text>
<line x1="1232.38" y1="601.9" x2="1232.38" y2="608.8" stroke="#dddddd" stroke-width="1.7"/>
<text x="1232.38" y="627" font-size="16" fill="#d6d6d6" text-anchor="middle">0.05</text>
<line x1="1164.2" y1="508.25" x2="1171.6" y2="508.25" stroke="#dddddd" stroke-width="1.6"/>
<text x="1163.4" y="513.85" font-size="16" fill="#d6d6d6" text-anchor="end">0.1</text>
<line x1="1293.55" y1="601.9" x2="1293.55" y2="608.8" stroke="#dddddd" stroke-width="1.7"/>
<text x="1293.55" y="627" font-size="16" fill="#d6d6d6" text-anchor="middle">0.1</text>
<line x1="1164.2" y1="461.175" x2="1171.6" y2="461.175" stroke="#dddddd" stroke-width="1.6"/>
<text x="1163.4" y="466.775" font-size="16" fill="#d6d6d6" text-anchor="end">0.15</text>
<line x1="1354.73" y1="601.9" x2="1354.73" y2="608.8" stroke="#dddddd" stroke-width="1.7"/>
<text x="1354.73" y="627" font-size="16" fill="#d6d6d6" text-anchor="middle">0.15</text>
<line x1="1164.2" y1="414.1" x2="1171.6" y2="414.1" stroke="#dddddd" stroke-width="1.6"/>
<text x="1163.4" y="419.7" font-size="16" fill="#d6d6d6" text-anchor="end">0.2</text>
<line x1="1415.9" y1="601.9" x2="1415.9" y2="608.8" stroke="#dddddd" stroke-width="1.7"/>
<text x="1415.9" y="627" font-size="16" fill="#d6d6d6" text-anchor="middle">0.2</text>
<line x1="1164.2" y1="367.025" x2="1171.6" y2="367.025" stroke="#dddddd" stroke-width="1.6"/>
<text x="1163.4" y="372.625" font-size="16" fill="#d6d6d6" text-anchor="end">0.25</text>
<line x1="1477.08" y1="601.9" x2="1477.08" y2="608.8" stroke="#dddddd" stroke-width="1.7"/>
<text x="1477.08" y="627" font-size="16" fill="#d6d6d6" text-anchor="middle">0.25</text>
<line x1="1164.2" y1="319.95" x2="1171.6" y2="319.95" stroke="#dddddd" stroke-width="1.6"/>
<text x="1163.4" y="325.55" font-size="16" fill="#d6d6d6" text-anchor="end">0.3</text>
<line x1="1538.25" y1="601.9" x2="1538.25" y2="608.8" stroke="#dddddd" stroke-width="1.7"/>
<text x="1538.25" y="627" font-size="16" fill="#d6d6d6" text-anchor="middle">0.3</text>
<line x1="1164.2" y1="272.875" x2="1171.6" y2="272.875" stroke="#dddddd" stroke-width="1.6"/>
<text x="1163.4" y="278.475" font-size="16" fill="#d6d6d6" text-anchor="end">0.35</text>
<line x1="1599.43" y1="601.9" x2="1599.43" y2="608.8" stroke="#dddddd" stroke-width="1.7"/>
<text x="1599.43" y="627" font-size="16" fill="#d6d6d6" text-anchor="middle">0.35</text>
<line x1="1164.2" y1="225.8" x2="1171.6" y2="225.8" stroke="#dddddd" stroke-width="1.6"/>
<text x="1163.4" y="231.4" font-size="16" fill="#d6d6d6" text-anchor="end">0.4</text>
<line x1="1660.6" y1="601.9" x2="1660.6" y2="608.8" stroke="#dddddd" stroke-width="1.7"/>
<text x="1660.6" y="627" font-size="16" fill="#d6d6d6" text-anchor="middle">0.4</text>
<line x1="1164.2" y1="178.725" x2="1171.6" y2="178.725" stroke="#dddddd" stroke-width="1.6"/>
<text x="1163.4" y="184.325" font-size="16" fill="#d6d6d6" text-anchor="end">0.45</text>
<line x1="1721.78" y1="601.9" x2="1721.78" y2="608.8" stroke="#dddddd" stroke-width="1.7"/>
<text x="1721.78" y="627" font-size="16" fill="#d6d6d6" text-anchor="middle">0.45</text>
<line x1="1164.2" y1="131.65" x2="1171.6" y2="131.65" stroke="#dddddd" stroke-width="1.6"/>
<text x="1163.4" y="137.25" font-size="16" fill="#d6d6d6" text-anchor="end">0.5</text>
<line x1="1782.95" y1="601.9" x2="1782.95" y2="608.8" stroke="#dddddd" stroke-width="1.7"/>
<text x="1782.95" y="627" font-size="16" fill="#d6d6d6" text-anchor="middle">0.5</text>
<line x1="1164.2" y1="84.575" x2="1171.6" y2="84.575" stroke="#dddddd" stroke-width="1.6"/>
<text x="1163.4" y="90.175" font-size="16" fill="#d6d6d6" text-anchor="end">0.55</text>
<line x1="1844.12" y1="601.9" x2="1844.12" y2="608.8" stroke="#dddddd" stroke-width="1.7"/>
<text x="1844.12" y="627" font-size="16" fill="#d6d6d6" text-anchor="middle">0.55</text>
<text x="1519.2" y="31.4" font-size="16.8" fill="#d6d6d6" text-anchor="middle" textLength="97" lengthAdjust="spacingAndGlyphs">CIE 1976 u'v'</text>
<g clip-path="url(#cpp)">
<rect x="1476.25" y="141.20" width="15" height="15.4" fill="none" stroke="#ffffff" stroke-width="1.6"/>
<rect x="1550.40" y="130.10" width="15" height="15.4" fill="none" stroke="#ffffff" stroke-width="1.6"/>
<rect x="1632.80" y="117.60" width="15" height="15.4" fill="none" stroke="#ffffff" stroke-width="1.6"/>
<rect x="1706.60" y="106.70" width="15" height="15.4" fill="none" stroke="#ffffff" stroke-width="1.6"/>
<rect x="1771.00" y="97.10" width="15" height="15.4" fill="none" stroke="#ffffff" stroke-width="1.6"/>
<rect x="1365.40" y="119.00" width="15" height="15.4" fill="none" stroke="#ffffff" stroke-width="1.6"/>
<rect x="1336.25" y="92.70" width="15" height="15.4" fill="none" stroke="#ffffff" stroke-width="1.6"/>
<rect x="1312.90" y="73.90" width="15" height="15.4" fill="none" stroke="#ffffff" stroke-width="1.6"/>
<rect x="1297.00" y="59.50" width="15" height="15.4" fill="none" stroke="#ffffff" stroke-width="1.6"/>
<rect x="1284.25" y="48.70" width="15" height="15.4" fill="none" stroke="#ffffff" stroke-width="1.6"/>
<rect x="1401.25" y="189.40" width="15" height="15.4" fill="none" stroke="#ffffff" stroke-width="1.6"/>
<rect x="1396.85" y="238.10" width="15" height="15.4" fill="none" stroke="#ffffff" stroke-width="1.6"/>
<rect x="1392.20" y="296.20" width="15" height="15.4" fill="none" stroke="#ffffff" stroke-width="1.6"/>
<rect x="1384.10" y="366.70" width="15" height="15.4" fill="none" stroke="#ffffff" stroke-width="1.6"/>
<rect x="1378.20" y="444.20" width="15" height="15.4" fill="none" stroke="#ffffff" stroke-width="1.6"/>
<rect x="1383.90" y="155.30" width="15" height="15.4" fill="none" stroke="#ffffff" stroke-width="1.6"/>
<rect x="1364.35" y="158.30" width="15" height="15.4" fill="none" stroke="#ffffff" stroke-width="1.6"/>
<rect x="1345.60" y="161.30" width="15" height="15.4" fill="none" stroke="#ffffff" stroke-width="1.6"/>
<rect x="1328.30" y="163.40" width="15" height="15.4" fill="none" stroke="#ffffff" stroke-width="1.6"/>
<rect x="1310.90" y="166.40" width="15" height="15.4" fill="none" stroke="#ffffff" stroke-width="1.6"/>
<rect x="1428.10" y="170.90" width="15" height="15.4" fill="none" stroke="#ffffff" stroke-width="1.6"/>
<rect x="1456.40" y="193.70" width="15" height="15.4" fill="none" stroke="#ffffff" stroke-width="1.6"/>
<rect x="1487.20" y="222.10" width="15" height="15.4" fill="none" stroke="#ffffff" stroke-width="1.6"/>
<rect x="1523.25" y="252.00" width="15" height="15.4" fill="none" stroke="#ffffff" stroke-width="1.6"/>
<rect x="1561.00" y="283.40" width="15" height="15.4" fill="none" stroke="#ffffff" stroke-width="1.6"/>
<rect x="1407.50" y="127.00" width="15" height="15.4" fill="none" stroke="#ffffff" stroke-width="1.6"/>
<rect x="1409.20" y="106.55" width="15" height="15.4" fill="none" stroke="#ffffff" stroke-width="1.6"/>
<rect x="1410.60" y="89.60" width="15" height="15.4" fill="none" stroke="#ffffff" stroke-width="1.6"/>
<rect x="1412.20" y="73.90" width="15" height="15.4" fill="none" stroke="#ffffff" stroke-width="1.6"/>
<rect x="1413.70" y="60.50" width="15" height="15.4" fill="none" stroke="#ffffff" stroke-width="1.6"/>
<rect x="1404.9" y="152.4" width="14.8" height="14.8" fill="#ffffff" fill-opacity="0.3" stroke="#000" stroke-width="2"/>
<circle cx="1483.75" cy="147.30" r="4.7" fill="#c69b9b" stroke="#0a0a0a" stroke-width="1.3"/>
<circle cx="1553.50" cy="139.40" r="4.7" fill="#c67d7d" stroke="#0a0a0a" stroke-width="1.3"/>
<circle cx="1634.60" cy="127.25" r="4.7" fill="#c65f5f" stroke="#0a0a0a" stroke-width="1.3"/>
<circle cx="1701.50" cy="119.40" r="4.7" fill="#c64141" stroke="#0a0a0a" stroke-width="1.3"/>
<circle cx="1784.25" cy="106.40" r="4.7" fill="#c60a0a" stroke="#0a0a0a" stroke-width="1.3"/>
<circle cx="1369.75" cy="127.10" r="4.7" fill="#9bc39b" stroke="#0a0a0a" stroke-width="1.3"/>
<circle cx="1340.25" cy="103.40" r="4.7" fill="#7dc37d" stroke="#0a0a0a" stroke-width="1.3"/>
<circle cx="1315.40" cy="82.75" r="4.7" fill="#5fc35f" stroke="#0a0a0a" stroke-width="1.3"/>
<circle cx="1294.60" cy="69.00" r="4.7" fill="#41c341" stroke="#0a0a0a" stroke-width="1.3"/>
<circle cx="1276.90" cy="52.90" r="4.7" fill="#0ac30a" stroke="#0a0a0a" stroke-width="1.3"/>
<circle cx="1407.50" cy="198.50" r="4.7" fill="#9b9bc6" stroke="#0a0a0a" stroke-width="1.3"/>
<circle cx="1401.55" cy="241.30" r="4.7" fill="#7d7dc6" stroke="#0a0a0a" stroke-width="1.3"/>
<circle cx="1393.75" cy="296.00" r="4.7" fill="#5f5fc6" stroke="#0a0a0a" stroke-width="1.3"/>
<circle cx="1383.75" cy="369.50" r="4.7" fill="#4141c6" stroke="#0a0a0a" stroke-width="1.3"/>
<circle cx="1372.00" cy="474.30" r="4.7" fill="#0a0ac6" stroke="#0a0a0a" stroke-width="1.3"/>
<circle cx="1388.60" cy="163.10" r="4.7" fill="#9bc3c3" stroke="#0a0a0a" stroke-width="1.3"/>
<circle cx="1366.90" cy="165.80" r="4.7" fill="#7dc3c3" stroke="#0a0a0a" stroke-width="1.3"/>
<circle cx="1346.75" cy="168.90" r="4.7" fill="#5fc3c3" stroke="#0a0a0a" stroke-width="1.3"/>
<circle cx="1326.25" cy="171.90" r="4.7" fill="#41c3c3" stroke="#0a0a0a" stroke-width="1.3"/>
<circle cx="1304.40" cy="173.80" r="4.7" fill="#0ac3c3" stroke="#0a0a0a" stroke-width="1.3"/>
<circle cx="1439.10" cy="180.00" r="4.7" fill="#c69bc6" stroke="#0a0a0a" stroke-width="1.3"/>
<circle cx="1464.75" cy="200.60" r="4.7" fill="#c67dc6" stroke="#0a0a0a" stroke-width="1.3"/>
<circle cx="1496.50" cy="225.40" r="4.7" fill="#c65fc6" stroke="#0a0a0a" stroke-width="1.3"/>
<circle cx="1534.10" cy="253.40" r="4.7" fill="#c641c6" stroke="#0a0a0a" stroke-width="1.3"/>
<circle cx="1579.40" cy="290.25" r="4.7" fill="#c60ac6" stroke="#0a0a0a" stroke-width="1.3"/>
<circle cx="1415.25" cy="134.00" r="4.7" fill="#c6c39b" stroke="#0a0a0a" stroke-width="1.3"/>
<circle cx="1416.25" cy="115.60" r="4.7" fill="#c6c37d" stroke="#0a0a0a" stroke-width="1.3"/>
<circle cx="1420.25" cy="98.40" r="4.7" fill="#c6c35f" stroke="#0a0a0a" stroke-width="1.3"/>
<circle cx="1421.25" cy="82.75" r="4.7" fill="#c6c341" stroke="#0a0a0a" stroke-width="1.3"/>
<circle cx="1424.10" cy="68.75" r="4.7" fill="#c6c30a" stroke="#0a0a0a" stroke-width="1.3"/>
<circle cx="1412.2" cy="159.8" r="4.5" fill="#ffffff" stroke="#0a0a0a" stroke-width="1.3"/>
<circle cx="1173.4" cy="599.6" r="3.1" fill="#000"/>
</g>
<rect x="1652" y="424.5" width="251" height="171.3" fill="#3b3b3b"/>
<rect x="1656.4" y="428.6" width="241.8" height="163" fill="#232323"/>
<defs><linearGradient id="p0" gradientUnits="userSpaceOnUse" x1="1655" x2="1900" y1="0" y2="0"><stop offset="0" stop-color="#6c9900"/><stop offset="0.844" stop-color="#999600"/><stop offset="1" stop-color="#998d00"/></linearGradient><linearGradient id="p1" gradientUnits="userSpaceOnUse" x1="1655" x2="1900" y1="0" y2="0"><stop offset="0" stop-color="#6d9900"/><stop offset="0.836" stop-color="#999600"/><stop offset="1" stop-color="#998d00"/></linearGradient><linearGradient id="p2" gradientUnits="userSpaceOnUse" x1="1655" x2="1900" y1="0" y2="0"><stop offset="0" stop-color="#6d9900"/><stop offset="0.82" stop-color="#999600"/><stop offset="1" stop-color="#998c00"/></linearGradient><linearGradient id="p3" gradientUnits="userSpaceOnUse" x1="1655" x2="1900" y1="0" y2="0"><stop offset="0" stop-color="#6e9900"/><stop offset="0.811" stop-color="#999600"/><stop offset="1" stop-color="#998b00"/></linearGradient><linearGradient id="p4" gradientUnits="userSpaceOnUse" x1="1655" x2="1900" y1="0" y2="0"><stop offset="0" stop-color="#6e9900"/><stop offset="0.803" stop-color="#999600"/><stop offset="1" stop-color="#998b00"/></linearGradient><linearGradient id="p5" gradientUnits="userSpaceOnUse" x1="1655" x2="1900" y1="0" y2="0"><stop offset="0" stop-color="#6f9900"/><stop offset="0.787" stop-color="#999600"/><stop offset="1" stop-color="#998a00"/></linearGradient><linearGradient id="p6" gradientUnits="userSpaceOnUse" x1="1655" x2="1900" y1="0" y2="0"><stop offset="0" stop-color="#6f9900"/><stop offset="0.779" stop-color="#999600"/><stop offset="1" stop-color="#998a00"/></linearGradient><linearGradient id="p7" gradientUnits="userSpaceOnUse" x1="1655" x2="1900" y1="0" y2="0"><stop offset="0" stop-color="#709900"/><stop offset="0.762" stop-color="#999600"/><stop offset="1" stop-color="#998900"/></linearGradient><linearGradient id="p8" gradientUnits="userSpaceOnUse" x1="1655" x2="1900" y1="0" y2="0"><stop offset="0" stop-color="#709900"/><stop offset="0.754" stop-color="#999600"/><stop offset="1" stop-color="#998900"/></linearGradient><linearGradient id="p9" gradientUnits="userSpaceOnUse" x1="1655" x2="1900" y1="0" y2="0"><stop offset="0" stop-color="#719900"/><stop offset="0.746" stop-color="#999600"/><stop offset="1" stop-color="#998800"/></linearGradient><linearGradient id="p10" gradientUnits="userSpaceOnUse" x1="1655" x2="1900" y1="0" y2="0"><stop offset="0" stop-color="#719900"/><stop offset="0.73" stop-color="#999600"/><stop offset="1" stop-color="#998700"/></linearGradient><linearGradient id="p11" gradientUnits="userSpaceOnUse" x1="1655" x2="1900" y1="0" y2="0"><stop offset="0" stop-color="#729900"/><stop offset="0.721" stop-color="#999600"/><stop offset="1" stop-color="#998700"/></linearGradient><linearGradient id="p12" gradientUnits="userSpaceOnUse" x1="1655" x2="1900" y1="0" y2="0"><stop offset="0" stop-color="#729900"/><stop offset="0.713" stop-color="#999600"/><stop offset="1" stop-color="#998600"/></linearGradient><linearGradient id="p13" gradientUnits="userSpaceOnUse" x1="1655" x2="1900" y1="0" y2="0"><stop offset="0" stop-color="#739900"/><stop offset="0.697" stop-color="#999600"/><stop offset="1" stop-color="#998600"/></linearGradient><linearGradient id="p14" gradientUnits="userSpaceOnUse" x1="1655" x2="1900" y1="0" y2="0"><stop offset="0" stop-color="#749900"/><stop offset="0.689" stop-color="#999600"/><stop offset="1" stop-color="#998500"/></linearGradient><linearGradient id="p15" gradientUnits="userSpaceOnUse" x1="1655" x2="1900" y1="0" y2="0"><stop offset="0" stop-color="#749900"/><stop offset="0.68" stop-color="#999600"/><stop offset="1" stop-color="#998400"/></linearGradient><linearGradient id="p16" gradientUnits="userSpaceOnUse" x1="1655" x2="1900" y1="0" y2="0"><stop offset="0" stop-color="#759900"/><stop offset="0.664" stop-color="#999600"/><stop offset="1" stop-color="#998400"/></linearGradient><linearGradient id="p17" gradientUnits="userSpaceOnUse" x1="1655" x2="1900" y1="0" y2="0"><stop offset="0" stop-color="#759900"/><stop offset="0.656" stop-color="#999600"/><stop offset="1" stop-color="#998300"/></linearGradient><linearGradient id="p18" gradientUnits="userSpaceOnUse" x1="1655" x2="1900" y1="0" y2="0"><stop offset="0" stop-color="#769900"/><stop offset="0.648" stop-color="#999600"/><stop offset="1" stop-color="#998300"/></linearGradient><linearGradient id="p19" gradientUnits="userSpaceOnUse" x1="1655" x2="1900" y1="0" y2="0"><stop offset="0" stop-color="#769900"/><stop offset="0.631" stop-color="#999600"/><stop offset="1" stop-color="#998200"/></linearGradient><linearGradient id="p20" gradientUnits="userSpaceOnUse" x1="1655" x2="1900" y1="0" y2="0"><stop offset="0" stop-color="#779900"/><stop offset="0.623" stop-color="#999600"/><stop offset="1" stop-color="#998200"/></linearGradient><linearGradient id="p21" gradientUnits="userSpaceOnUse" x1="1655" x2="1900" y1="0" y2="0"><stop offset="0" stop-color="#779900"/><stop offset="0.615" stop-color="#999600"/><stop offset="1" stop-color="#998100"/></linearGradient><linearGradient id="p22" gradientUnits="userSpaceOnUse" x1="1655" x2="1900" y1="0" y2="0"><stop offset="0" stop-color="#789900"/><stop offset="0.598" stop-color="#999600"/><stop offset="1" stop-color="#998000"/></linearGradient><linearGradient id="p23" gradientUnits="userSpaceOnUse" x1="1655" x2="1900" y1="0" y2="0"><stop offset="0" stop-color="#799900"/><stop offset="0.59" stop-color="#999600"/><stop offset="1" stop-color="#998000"/></linearGradient><linearGradient id="p24" gradientUnits="userSpaceOnUse" x1="1655" x2="1900" y1="0" y2="0"><stop offset="0" stop-color="#799900"/><stop offset="0.582" stop-color="#999600"/><stop offset="1" stop-color="#997f00"/></linearGradient><linearGradient id="p25" gradientUnits="userSpaceOnUse" x1="1655" x2="1900" y1="0" y2="0"><stop offset="0" stop-color="#7a9900"/><stop offset="0.566" stop-color="#999600"/><stop offset="1" stop-color="#997f00"/></linearGradient><linearGradient id="p26" gradientUnits="userSpaceOnUse" x1="1655" x2="1900" y1="0" y2="0"><stop offset="0" stop-color="#7a9900"/><stop offset="0.557" stop-color="#999600"/><stop offset="1" stop-color="#997e00"/></linearGradient><linearGradient id="p27" gradientUnits="userSpaceOnUse" x1="1655" x2="1900" y1="0" y2="0"><stop offset="0" stop-color="#7b9900"/><stop offset="0.549" stop-color="#999600"/><stop offset="1" stop-color="#997e00"/></linearGradient><linearGradient id="p28" gradientUnits="userSpaceOnUse" x1="1655" x2="1900" y1="0" y2="0"><stop offset="0" stop-color="#7b9900"/><stop offset="0.533" stop-color="#999600"/><stop offset="1" stop-color="#997d00"/></linearGradient><linearGradient id="p29" gradientUnits="userSpaceOnUse" x1="1655" x2="1900" y1="0" y2="0"><stop offset="0" stop-color="#7c9900"/><stop offset="0.525" stop-color="#999600"/><stop offset="1" stop-color="#997c00"/></linearGradient><linearGradient id="p30" gradientUnits="userSpaceOnUse" x1="1655" x2="1900" y1="0" y2="0"><stop offset="0" stop-color="#7d9900"/><stop offset="0.516" stop-color="#999600"/><stop offset="1" stop-color="#997c00"/></linearGradient><linearGradient id="p31" gradientUnits="userSpaceOnUse" x1="1655" x2="1900" y1="0" y2="0"><stop offset="0" stop-color="#7d9900"/><stop offset="0.5" stop-color="#999600"/><stop offset="1" stop-color="#997b00"/></linearGradient><linearGradient id="p32" gradientUnits="userSpaceOnUse" x1="1655" x2="1900" y1="0" y2="0"><stop offset="0" stop-color="#7e9900"/><stop offset="0.492" stop-color="#999600"/><stop offset="1" stop-color="#997b00"/></linearGradient><linearGradient id="p33" gradientUnits="userSpaceOnUse" x1="1655" x2="1900" y1="0" y2="0"><stop offset="0" stop-color="#7e9900"/><stop offset="0.484" stop-color="#999600"/><stop offset="1" stop-color="#997a00"/></linearGradient><linearGradient id="p34" gradientUnits="userSpaceOnUse" x1="1655" x2="1900" y1="0" y2="0"><stop offset="0" stop-color="#7f9900"/><stop offset="0.467" stop-color="#999600"/><stop offset="1" stop-color="#997a00"/></linearGradient><linearGradient id="p35" gradientUnits="userSpaceOnUse" x1="1655" x2="1900" y1="0" y2="0"><stop offset="0" stop-color="#809900"/><stop offset="0.459" stop-color="#999600"/><stop offset="1" stop-color="#997900"/></linearGradient><linearGradient id="p36" gradientUnits="userSpaceOnUse" x1="1655" x2="1900" y1="0" y2="0"><stop offset="0" stop-color="#809900"/><stop offset="0.451" stop-color="#999600"/><stop offset="1" stop-color="#997900"/></linearGradient><linearGradient id="p37" gradientUnits="userSpaceOnUse" x1="1655" x2="1900" y1="0" y2="0"><stop offset="0" stop-color="#819900"/><stop offset="0.434" stop-color="#999600"/><stop offset="1" stop-color="#997800"/></linearGradient><linearGradient id="p38" gradientUnits="userSpaceOnUse" x1="1655" x2="1900" y1="0" y2="0"><stop offset="0" stop-color="#829900"/><stop offset="0.426" stop-color="#999600"/><stop offset="1" stop-color="#997800"/></linearGradient><linearGradient id="p39" gradientUnits="userSpaceOnUse" x1="1655" x2="1900" y1="0" y2="0"><stop offset="0" stop-color="#829900"/><stop offset="0.418" stop-color="#999600"/><stop offset="1" stop-color="#997700"/></linearGradient><linearGradient id="p40" gradientUnits="userSpaceOnUse" x1="1655" x2="1900" y1="0" y2="0"><stop offset="0" stop-color="#839900"/><stop offset="0.402" stop-color="#999600"/><stop offset="1" stop-color="#997600"/></linearGradient><linearGradient id="p41" gradientUnits="userSpaceOnUse" x1="1655" x2="1900" y1="0" y2="0"><stop offset="0" stop-color="#839900"/><stop offset="0.393" stop-color="#999600"/><stop offset="1" stop-color="#997600"/></linearGradient><linearGradient id="p42" gradientUnits="userSpaceOnUse" x1="1655" x2="1900" y1="0" y2="0"><stop offset="0" stop-color="#849900"/><stop offset="0.385" stop-color="#999600"/><stop offset="1" stop-color="#997500"/></linearGradient><linearGradient id="p43" gradientUnits="userSpaceOnUse" x1="1655" x2="1900" y1="0" y2="0"><stop offset="0" stop-color="#859900"/><stop offset="0.369" stop-color="#999600"/><stop offset="1" stop-color="#997500"/></linearGradient><linearGradient id="p44" gradientUnits="userSpaceOnUse" x1="1655" x2="1900" y1="0" y2="0"><stop offset="0" stop-color="#859900"/><stop offset="0.361" stop-color="#999600"/><stop offset="1" stop-color="#997400"/></linearGradient><linearGradient id="p45" gradientUnits="userSpaceOnUse" x1="1655" x2="1900" y1="0" y2="0"><stop offset="0" stop-color="#869900"/><stop offset="0.352" stop-color="#999500"/><stop offset="1" stop-color="#997400"/></linearGradient><linearGradient id="p46" gradientUnits="userSpaceOnUse" x1="1655" x2="1900" y1="0" y2="0"><stop offset="0" stop-color="#879900"/><stop offset="0.336" stop-color="#999600"/><stop offset="1" stop-color="#997300"/></linearGradient><linearGradient id="p47" gradientUnits="userSpaceOnUse" x1="1655" x2="1900" y1="0" y2="0"><stop offset="0" stop-color="#879900"/><stop offset="0.328" stop-color="#999600"/><stop offset="1" stop-color="#997300"/></linearGradient><linearGradient id="p48" gradientUnits="userSpaceOnUse" x1="1655" x2="1900" y1="0" y2="0"><stop offset="0" stop-color="#889900"/><stop offset="0.32" stop-color="#999500"/><stop offset="1" stop-color="#997200"/></linearGradient><linearGradient id="p49" gradientUnits="userSpaceOnUse" x1="1655" x2="1900" y1="0" y2="0"><stop offset="0" stop-color="#899900"/><stop offset="0.303" stop-color="#999600"/><stop offset="1" stop-color="#997200"/></linearGradient><linearGradient id="p50" gradientUnits="userSpaceOnUse" x1="1655" x2="1900" y1="0" y2="0"><stop offset="0" stop-color="#899900"/><stop offset="0.295" stop-color="#999600"/><stop offset="1" stop-color="#997100"/></linearGradient><linearGradient id="p51" gradientUnits="userSpaceOnUse" x1="1655" x2="1900" y1="0" y2="0"><stop offset="0" stop-color="#8a9900"/><stop offset="0.287" stop-color="#999500"/><stop offset="1" stop-color="#997100"/></linearGradient><linearGradient id="p52" gradientUnits="userSpaceOnUse" x1="1655" x2="1900" y1="0" y2="0"><stop offset="0" stop-color="#8b9900"/><stop offset="0.279" stop-color="#999500"/><stop offset="1" stop-color="#997000"/></linearGradient><linearGradient id="p53" gradientUnits="userSpaceOnUse" x1="1655" x2="1900" y1="0" y2="0"><stop offset="0" stop-color="#8b9900"/><stop offset="0.27" stop-color="#999500"/><stop offset="1" stop-color="#997000"/></linearGradient><linearGradient id="p54" gradientUnits="userSpaceOnUse" x1="1655" x2="1900" y1="0" y2="0"><stop offset="0" stop-color="#8c9900"/><stop offset="0.254" stop-color="#999600"/><stop offset="1" stop-color="#996f00"/></linearGradient><linearGradient id="q0" gradientUnits="userSpaceOnUse" x1="1655" x2="1900" y1="0" y2="0"><stop offset="0" stop-color="#b4ff00"/><stop offset="0.82" stop-color="#fffc00"/><stop offset="1" stop-color="#ffec00"/></linearGradient><linearGradient id="q1" gradientUnits="userSpaceOnUse" x1="1655" x2="1900" y1="0" y2="0"><stop offset="0" stop-color="#b5ff00"/><stop offset="0.811" stop-color="#fffc00"/><stop offset="1" stop-color="#ffeb00"/></linearGradient><linearGradient id="q2" gradientUnits="userSpaceOnUse" x1="1655" x2="1900" y1="0" y2="0"><stop offset="0" stop-color="#b6ff00"/><stop offset="0.795" stop-color="#fffd00"/><stop offset="1" stop-color="#ffe900"/></linearGradient><linearGradient id="q3" gradientUnits="userSpaceOnUse" x1="1655" x2="1900" y1="0" y2="0"><stop offset="0" stop-color="#b7ff00"/><stop offset="0.787" stop-color="#fffc00"/><stop offset="1" stop-color="#ffe800"/></linearGradient><linearGradient id="q4" gradientUnits="userSpaceOnUse" x1="1655" x2="1900" y1="0" y2="0"><stop offset="0" stop-color="#b8ff00"/><stop offset="0.779" stop-color="#fffc00"/><stop offset="1" stop-color="#ffe700"/></linearGradient><linearGradient id="q5" gradientUnits="userSpaceOnUse" x1="1655" x2="1900" y1="0" y2="0"><stop offset="0" stop-color="#b9ff00"/><stop offset="0.762" stop-color="#fffd00"/><stop offset="1" stop-color="#ffe600"/></linearGradient><linearGradient id="q6" gradientUnits="userSpaceOnUse" x1="1655" x2="1900" y1="0" y2="0"><stop offset="0" stop-color="#b9ff00"/><stop offset="0.754" stop-color="#fffc00"/><stop offset="1" stop-color="#ffe600"/></linearGradient><linearGradient id="q7" gradientUnits="userSpaceOnUse" x1="1655" x2="1900" y1="0" y2="0"><stop offset="0" stop-color="#baff00"/><stop offset="0.746" stop-color="#fffc00"/><stop offset="1" stop-color="#ffe500"/></linearGradient><linearGradient id="q8" gradientUnits="userSpaceOnUse" x1="1655" x2="1900" y1="0" y2="0"><stop offset="0" stop-color="#bbff00"/><stop offset="0.73" stop-color="#fffd00"/><stop offset="1" stop-color="#ffe400"/></linearGradient><linearGradient id="q9" gradientUnits="userSpaceOnUse" x1="1655" x2="1900" y1="0" y2="0"><stop offset="0" stop-color="#bcff00"/><stop offset="0.721" stop-color="#fffc00"/><stop offset="1" stop-color="#ffe300"/></linearGradient><linearGradient id="q10" gradientUnits="userSpaceOnUse" x1="1655" x2="1900" y1="0" y2="0"><stop offset="0" stop-color="#bdff00"/><stop offset="0.713" stop-color="#fffc00"/><stop offset="1" stop-color="#ffe200"/></linearGradient><linearGradient id="q11" gradientUnits="userSpaceOnUse" x1="1655" x2="1900" y1="0" y2="0"><stop offset="0" stop-color="#beff00"/><stop offset="0.697" stop-color="#fffd00"/><stop offset="1" stop-color="#ffe100"/></linearGradient><linearGradient id="q12" gradientUnits="userSpaceOnUse" x1="1655" x2="1900" y1="0" y2="0"><stop offset="0" stop-color="#bfff00"/><stop offset="0.689" stop-color="#fffc00"/><stop offset="1" stop-color="#ffe000"/></linearGradient><linearGradient id="q13" gradientUnits="userSpaceOnUse" x1="1655" x2="1900" y1="0" y2="0"><stop offset="0" stop-color="#c0ff00"/><stop offset="0.68" stop-color="#fffc00"/><stop offset="1" stop-color="#ffdf00"/></linearGradient><linearGradient id="q14" gradientUnits="userSpaceOnUse" x1="1655" x2="1900" y1="0" y2="0"><stop offset="0" stop-color="#c1ff00"/><stop offset="0.664" stop-color="#fffc00"/><stop offset="1" stop-color="#ffde00"/></linearGradient><linearGradient id="q15" gradientUnits="userSpaceOnUse" x1="1655" x2="1900" y1="0" y2="0"><stop offset="0" stop-color="#c1ff00"/><stop offset="0.656" stop-color="#fffc00"/><stop offset="1" stop-color="#ffdd00"/></linearGradient><linearGradient id="q16" gradientUnits="userSpaceOnUse" x1="1655" x2="1900" y1="0" y2="0"><stop offset="0" stop-color="#c2ff00"/><stop offset="0.648" stop-color="#fffc00"/><stop offset="1" stop-color="#ffdc00"/></linearGradient><linearGradient id="q17" gradientUnits="userSpaceOnUse" x1="1655" x2="1900" y1="0" y2="0"><stop offset="0" stop-color="#c3ff00"/><stop offset="0.631" stop-color="#fffc00"/><stop offset="1" stop-color="#ffdb00"/></linearGradient><linearGradient id="q18" gradientUnits="userSpaceOnUse" x1="1655" x2="1900" y1="0" y2="0"><stop offset="0" stop-color="#c4ff00"/><stop offset="0.623" stop-color="#fffc00"/><stop offset="1" stop-color="#ffda00"/></linearGradient><linearGradient id="q19" gradientUnits="userSpaceOnUse" x1="1655" x2="1900" y1="0" y2="0"><stop offset="0" stop-color="#c5ff00"/><stop offset="0.615" stop-color="#fffc00"/><stop offset="1" stop-color="#ffd900"/></linearGradient><linearGradient id="q20" gradientUnits="userSpaceOnUse" x1="1655" x2="1900" y1="0" y2="0"><stop offset="0" stop-color="#c6ff00"/><stop offset="0.598" stop-color="#fffc00"/><stop offset="1" stop-color="#ffd800"/></linearGradient><linearGradient id="q21" gradientUnits="userSpaceOnUse" x1="1655" x2="1900" y1="0" y2="0"><stop offset="0" stop-color="#c7ff00"/><stop offset="0.59" stop-color="#fffc00"/><stop offset="1" stop-color="#ffd700"/></linearGradient><linearGradient id="q22" gradientUnits="userSpaceOnUse" x1="1655" x2="1900" y1="0" y2="0"><stop offset="0" stop-color="#c8ff00"/><stop offset="0.574" stop-color="#fffd00"/><stop offset="1" stop-color="#ffd600"/></linearGradient><linearGradient id="q23" gradientUnits="userSpaceOnUse" x1="1655" x2="1900" y1="0" y2="0"><stop offset="0" stop-color="#c9ff00"/><stop offset="0.566" stop-color="#fffc00"/><stop offset="1" stop-color="#ffd500"/></linearGradient><linearGradient id="q24" gradientUnits="userSpaceOnUse" x1="1655" x2="1900" y1="0" y2="0"><stop offset="0" stop-color="#caff00"/><stop offset="0.557" stop-color="#fffc00"/><stop offset="1" stop-color="#ffd400"/></linearGradient><linearGradient id="q25" gradientUnits="userSpaceOnUse" x1="1655" x2="1900" y1="0" y2="0"><stop offset="0" stop-color="#cbff00"/><stop offset="0.541" stop-color="#fffd00"/><stop offset="1" stop-color="#ffd300"/></linearGradient><linearGradient id="q26" gradientUnits="userSpaceOnUse" x1="1655" x2="1900" y1="0" y2="0"><stop offset="0" stop-color="#ccff00"/><stop offset="0.533" stop-color="#fffc00"/><stop offset="1" stop-color="#ffd200"/></linearGradient><linearGradient id="q27" gradientUnits="userSpaceOnUse" x1="1655" x2="1900" y1="0" y2="0"><stop offset="0" stop-color="#cdff00"/><stop offset="0.525" stop-color="#fffc00"/><stop offset="1" stop-color="#ffd100"/></linearGradient><linearGradient id="q28" gradientUnits="userSpaceOnUse" x1="1655" x2="1900" y1="0" y2="0"><stop offset="0" stop-color="#ceff00"/><stop offset="0.508" stop-color="#fffd00"/><stop offset="1" stop-color="#ffd000"/></linearGradient><linearGradient id="q29" gradientUnits="userSpaceOnUse" x1="1655" x2="1900" y1="0" y2="0"><stop offset="0" stop-color="#cfff00"/><stop offset="0.5" stop-color="#fffc00"/><stop offset="1" stop-color="#ffcf00"/></linearGradient><linearGradient id="q30" gradientUnits="userSpaceOnUse" x1="1655" x2="1900" y1="0" y2="0"><stop offset="0" stop-color="#d0ff00"/><stop offset="0.492" stop-color="#fffc00"/><stop offset="1" stop-color="#ffcf00"/></linearGradient><linearGradient id="q31" gradientUnits="userSpaceOnUse" x1="1655" x2="1900" y1="0" y2="0"><stop offset="0" stop-color="#d1ff00"/><stop offset="0.475" stop-color="#fffd00"/><stop offset="1" stop-color="#ffce00"/></linearGradient><linearGradient id="q32" gradientUnits="userSpaceOnUse" x1="1655" x2="1900" y1="0" y2="0"><stop offset="0" stop-color="#d2ff00"/><stop offset="0.467" stop-color="#fffc00"/><stop offset="1" stop-color="#ffcd00"/></linearGradient><linearGradient id="q33" gradientUnits="userSpaceOnUse" x1="1655" x2="1900" y1="0" y2="0"><stop offset="0" stop-color="#d3ff00"/><stop offset="0.459" stop-color="#fffc00"/><stop offset="1" stop-color="#ffcc00"/></linearGradient><linearGradient id="q34" gradientUnits="userSpaceOnUse" x1="1655" x2="1900" y1="0" y2="0"><stop offset="0" stop-color="#d4ff00"/><stop offset="0.443" stop-color="#fffd00"/><stop offset="1" stop-color="#ffcb00"/></linearGradient><linearGradient id="q35" gradientUnits="userSpaceOnUse" x1="1655" x2="1900" y1="0" y2="0"><stop offset="0" stop-color="#d5ff00"/><stop offset="0.434" stop-color="#fffc00"/><stop offset="1" stop-color="#ffca00"/></linearGradient><linearGradient id="q36" gradientUnits="userSpaceOnUse" x1="1655" x2="1900" y1="0" y2="0"><stop offset="0" stop-color="#d6ff00"/><stop offset="0.426" stop-color="#fffc00"/><stop offset="1" stop-color="#ffc900"/></linearGradient><linearGradient id="q37" gradientUnits="userSpaceOnUse" x1="1655" x2="1900" y1="0" y2="0"><stop offset="0" stop-color="#d7ff00"/><stop offset="0.41" stop-color="#fffc00"/><stop offset="1" stop-color="#ffc800"/></linearGradient><linearGradient id="q38" gradientUnits="userSpaceOnUse" x1="1655" x2="1900" y1="0" y2="0"><stop offset="0" stop-color="#d8ff00"/><stop offset="0.402" stop-color="#fffc00"/><stop offset="1" stop-color="#ffc700"/></linearGradient><linearGradient id="q39" gradientUnits="userSpaceOnUse" x1="1655" x2="1900" y1="0" y2="0"><stop offset="0" stop-color="#d9ff00"/><stop offset="0.393" stop-color="#fffc00"/><stop offset="1" stop-color="#ffc600"/></linearGradient><linearGradient id="q40" gradientUnits="userSpaceOnUse" x1="1655" x2="1900" y1="0" y2="0"><stop offset="0" stop-color="#daff00"/><stop offset="0.377" stop-color="#fffc00"/><stop offset="1" stop-color="#ffc500"/></linearGradient><linearGradient id="q41" gradientUnits="userSpaceOnUse" x1="1655" x2="1900" y1="0" y2="0"><stop offset="0" stop-color="#dbff00"/><stop offset="0.369" stop-color="#fffc00"/><stop offset="1" stop-color="#ffc400"/></linearGradient><linearGradient id="q42" gradientUnits="userSpaceOnUse" x1="1655" x2="1900" y1="0" y2="0"><stop offset="0" stop-color="#dcff00"/><stop offset="0.361" stop-color="#fffc00"/><stop offset="1" stop-color="#ffc400"/></linearGradient><linearGradient id="q43" gradientUnits="userSpaceOnUse" x1="1655" x2="1900" y1="0" y2="0"><stop offset="0" stop-color="#ddff00"/><stop offset="0.344" stop-color="#fffc00"/><stop offset="1" stop-color="#ffc300"/></linearGradient><linearGradient id="q44" gradientUnits="userSpaceOnUse" x1="1655" x2="1900" y1="0" y2="0"><stop offset="0" stop-color="#deff00"/><stop offset="0.336" stop-color="#fffc00"/><stop offset="1" stop-color="#ffc200"/></linearGradient><linearGradient id="q45" gradientUnits="userSpaceOnUse" x1="1655" x2="1900" y1="0" y2="0"><stop offset="0" stop-color="#dfff00"/><stop offset="0.328" stop-color="#fffc00"/><stop offset="1" stop-color="#ffc100"/></linearGradient><linearGradient id="q46" gradientUnits="userSpaceOnUse" x1="1655" x2="1900" y1="0" y2="0"><stop offset="0" stop-color="#e0ff00"/><stop offset="0.311" stop-color="#fffc00"/><stop offset="0.975" stop-color="#ffc200"/><stop offset="1" stop-color="#ffc000"/></linearGradient><linearGradient id="q47" gradientUnits="userSpaceOnUse" x1="1655" x2="1900" y1="0" y2="0"><stop offset="0" stop-color="#e1ff00"/><stop offset="0.303" stop-color="#fffc00"/><stop offset="0.967" stop-color="#ffc100"/><stop offset="1" stop-color="#ffbf00"/></linearGradient><linearGradient id="q48" gradientUnits="userSpaceOnUse" x1="1655" x2="1900" y1="0" y2="0"><stop offset="0" stop-color="#e3ff00"/><stop offset="0.295" stop-color="#fffc00"/><stop offset="0.959" stop-color="#ffc100"/><stop offset="1" stop-color="#ffbe00"/></linearGradient><linearGradient id="q49" gradientUnits="userSpaceOnUse" x1="1655" x2="1900" y1="0" y2="0"><stop offset="0" stop-color="#e4ff00"/><stop offset="0.279" stop-color="#fffc00"/><stop offset="0.943" stop-color="#ffc100"/><stop offset="1" stop-color="#ffbd00"/></linearGradient><linearGradient id="q50" gradientUnits="userSpaceOnUse" x1="1655" x2="1900" y1="0" y2="0"><stop offset="0" stop-color="#e5ff00"/><stop offset="0.27" stop-color="#fffc00"/><stop offset="0.934" stop-color="#ffc100"/><stop offset="1" stop-color="#ffbc00"/></linearGradient><linearGradient id="q51" gradientUnits="userSpaceOnUse" x1="1655" x2="1900" y1="0" y2="0"><stop offset="0" stop-color="#e6ff00"/><stop offset="0.262" stop-color="#fffc00"/><stop offset="0.926" stop-color="#ffc100"/><stop offset="1" stop-color="#ffbc00"/></linearGradient><linearGradient id="q52" gradientUnits="userSpaceOnUse" x1="1655" x2="1900" y1="0" y2="0"><stop offset="0" stop-color="#e7ff00"/><stop offset="0.246" stop-color="#fffc00"/><stop offset="0.902" stop-color="#ffc200"/><stop offset="1" stop-color="#ffbb00"/></linearGradient><linearGradient id="q53" gradientUnits="userSpaceOnUse" x1="1655" x2="1900" y1="0" y2="0"><stop offset="0" stop-color="#e8ff00"/><stop offset="0.238" stop-color="#fffc00"/><stop offset="0.893" stop-color="#ffc100"/><stop offset="1" stop-color="#ffba00"/></linearGradient><linearGradient id="q54" gradientUnits="userSpaceOnUse" x1="1655" x2="1900" y1="0" y2="0"><stop offset="0" stop-color="#e9ff00"/><stop offset="0.23" stop-color="#fffc00"/><stop offset="0.885" stop-color="#ffc100"/><stop offset="1" stop-color="#ffb900"/></linearGradient><clipPath id="cqr"><rect x="1656.4" y="428.6" width="241.79999999999995" height="163.0"/></clipPath><clipPath id="cql"><path d="M503.3,2235.2 503.3,2235.2 503.3,2235.3 503.3,2235.3 503.3,2235.3 503.2,2235.3 503.2,2235.3 503.2,2235.3 503.2,2235.4 503.1,2235.4 503.1,2235.4 503.1,2235.4 503.1,2235.4 503.0,2235.4 503.0,2235.5 503.0,2235.5 502.9,2235.5 502.9,2235.5 502.9,2235.5 502.8,2235.5 502.8,2235.5 502.8,2235.5 502.7,2235.6 502.7,2235.6 502.7,2235.6 502.6,2235.6 502.6,2235.6 502.5,2235.6 502.5,2235.6 502.5,2235.6 502.4,2235.6 502.4,2235.7 502.3,2235.7 502.3,2235.7 502.2,2235.7 502.2,2235.7 502.1,2235.7 502.1,2235.7 502.0,2235.7 502.0,2235.7 501.9,2235.7 501.9,2235.7 501.8,2235.7 501.8,2235.8 501.7,2235.8 501.7,2235.8 501.6,2235.8 501.5,2235.8 501.5,2235.8 501.4,2235.8 501.4,2235.8 501.3,2235.8 501.3,2235.8 501.2,2235.8 501.1,2235.8 501.1,2235.8 501.0,2235.8 501.0,2235.8 500.9,2235.8 500.8,2235.8 500.8,2235.8 500.7,2235.8 500.7,2235.8 500.6,2235.9 500.5,2235.9 500.5,2235.9 500.4,2235.9 500.3,2235.9 500.3,2235.9 500.2,2235.9 500.1,2235.9 500.1,2235.9 500.0,2235.9 499.9,2235.9 499.9,2235.9 499.8,2235.9 499.7,2235.9 499.7,2235.9 499.6,2235.9 499.5,2235.9 499.5,2235.9 499.4,2235.9 499.3,2235.9 499.3,2235.9 499.2,2235.9 499.1,2235.9 499.0,2235.9 499.0,2235.9 498.9,2235.9 498.8,2235.9 498.7,2235.9 498.7,2235.9 498.6,2235.9 498.5,2235.9 498.4,2235.8 498.3,2235.8 498.3,2235.8 498.2,2235.8 498.1,2235.8 498.0,2235.8 497.9,2235.8 497.8,2235.8 497.7,2235.8 497.7,2235.8 497.6,2235.8 497.5,2235.8 497.4,2235.8 497.3,2235.8 497.2,2235.8 497.1,2235.7 497.0,2235.7 496.9,2235.7 496.8,2235.7 496.7,2235.7 496.6,2235.7 496.5,2235.7 496.4,2235.7 496.3,2235.7 496.2,2235.7 496.1,2235.6 495.9,2235.6 495.8,2235.6 495.7,2235.6 495.6,2235.6 495.5,2235.6 495.4,2235.6 495.3,2235.6 495.1,2235.5 495.0,2235.5 494.9,2235.5 494.8,2235.5 494.6,2235.5 494.5,2235.5 494.4,2235.5 494.3,2235.4 494.1,2235.4 494.0,2235.4 493.9,2235.4 493.7,2235.4 493.6,2235.3 493.4,2235.3 493.3,2235.3 493.2,2235.3 493.0,2235.3 492.9,2235.3 492.7,2235.2 492.6,2235.2 492.4,2235.2 492.3,2235.2 492.1,2235.2 491.9,2235.1 491.8,2235.1 491.6,2235.1 491.5,2235.1 491.3,2235.0 491.1,2235.0 491.0,2235.0 490.8,2235.0 490.6,2234.9 490.5,2234.9 490.3,2234.9 490.1,2234.9 489.9,2234.8 489.7,2234.8 489.5,2234.7 489.3,2234.7 489.1,2234.6 488.9,2234.5 488.6,2234.4 488.4,2234.3 488.1,2234.2 487.9,2234.1 487.6,2234.0 487.4,2233.9 487.1,2233.7 486.8,2233.6 486.5,2233.5 486.2,2233.3 485.9,2233.2 485.6,2233.0 485.3,2232.9 485.0,2232.7 484.7,2232.5 484.4,2232.4 484.0,2232.2 483.7,2232.0 483.4,2231.8 483.0,2231.6 482.7,2231.4 482.3,2231.2 482.0,2231.1 481.6,2230.9 481.2,2230.7 480.9,2230.5 480.5,2230.3 480.1,2230.1 479.7,2229.9 479.4,2229.7 479.0,2229.5 478.6,2229.3 478.2,2229.1 477.8,2228.8 477.4,2228.6 477.0,2228.4 476.6,2228.2 476.2,2227.9 475.7,2227.7 475.3,2227.4 474.8,2227.2 474.4,2226.9 473.9,2226.7 473.5,2226.4 473.0,2226.1 472.5,2225.8 472.0,2225.5 471.5,2225.2 471.0,2224.9 470.5,2224.6 469.9,2224.2 469.4,2223.9 468.9,2223.6 468.3,2223.3 467.7,2222.9 467.2,2222.6 466.6,2222.2 466.0,2221.9 465.4,2221.5 464.8,2221.1 464.2,2220.8 463.6,2220.4 463.0,2220.0 462.4,2219.6 461.8,2219.2 461.1,2218.9 460.5,2218.5 459.8,2218.1 459.2,2217.7 458.5,2217.3 457.8,2216.9 457.2,2216.5 456.5,2216.1 455.8,2215.6 455.1,2215.2 454.3,2214.8 453.6,2214.4 452.9,2213.9 452.1,2213.5 451.3,2213.0 450.5,2212.6 449.7,2212.1 448.9,2211.6 448.1,2211.1 447.2,2210.6 446.4,2210.2 445.5,2209.6 444.6,2209.1 443.7,2208.6 442.8,2208.1 441.9,2207.6 441.0,2207.0 440.0,2206.5 439.1,2205.9 438.1,2205.4 437.1,2204.8 436.1,2204.2 435.1,2203.6 434.1,2203.0 433.1,2202.4 432.0,2201.8 431.0,2201.2 429.9,2200.6 428.9,2200.0 427.8,2199.3 426.7,2198.7 425.6,2198.0 424.5,2197.4 423.4,2196.7 422.3,2196.0 421.1,2195.3 420.0,2194.7 418.8,2194.0 417.6,2193.2 416.4,2192.5 415.2,2191.8 414.0,2191.0 412.7,2190.3 411.4,2189.5 410.1,2188.7 408.8,2187.9 407.4,2187.1 406.1,2186.3 404.7,2185.4 403.3,2184.6 401.9,2183.7 400.4,2182.8 399.0,2181.9 397.5,2181.0 396.0,2180.1 394.5,2179.2 393.0,2178.2 391.4,2177.2 389.9,2176.3 388.3,2175.3 386.7,2174.3 385.1,2173.3 383.5,2172.2 381.9,2171.2 380.3,2170.1 378.6,2169.0 376.9,2167.9 375.3,2166.8 373.6,2165.7 371.9,2164.6 370.2,2163.4 368.5,2162.3 366.7,2161.1 365.0,2159.9 363.2,2158.7 361.5,2157.4 359.7,2156.2 357.9,2155.0 356.2,2153.7 354.3,2152.4 352.5,2151.0 350.6,2149.6 348.7,2148.2 346.8,2146.7 344.9,2145.2 342.9,2143.7 340.9,2142.1 338.9,2140.5 336.8,2138.8 334.7,2137.1 332.6,2135.4 330.4,2133.6 328.3,2131.7 326.0,2129.8 323.8,2127.9 321.5,2125.9 319.2,2123.9 316.9,2121.8 314.5,2119.6 312.1,2117.4 309.6,2115.1 307.1,2112.6 304.6,2110.1 302.0,2107.6 299.3,2104.9 296.7,2102.1 293.9,2099.3 291.2,2096.4 288.4,2093.5 285.6,2090.4 282.7,2087.3 279.8,2084.1 276.9,2080.9 273.9,2077.5 271.0,2074.1 267.9,2070.7 264.9,2067.2 261.8,2063.6 258.7,2060.0 255.6,2056.2 252.4,2052.3 249.2,2048.3 245.9,2044.2 242.6,2040.0 239.2,2035.6 235.8,2031.2 232.4,2026.6 228.9,2021.9 225.3,2017.2 221.8,2012.3 218.2,2007.3 214.5,2002.2 210.8,1997.0 207.1,1991.7 203.3,1986.2 199.5,1980.7 195.7,1975.1 191.8,1969.4 187.9,1963.5 183.9,1957.4 179.8,1951.2 175.7,1944.8 171.6,1938.2 167.4,1931.4 163.1,1924.4 158.8,1917.3 154.4,1910.1 150.0,1902.6 145.6,1895.0 141.1,1887.3 136.5,1879.4 131.9,1871.3 127.3,1863.1 122.6,1854.8 117.9,1846.4 113.1,1837.8 108.3,1829.0 103.4,1820.2 98.5,1811.2 93.4,1801.9 88.3,1792.4 83.1,1782.6 77.8,1772.7 72.4,1762.5 67.0,1752.0 61.6,1741.4 56.0,1730.6 50.5,1719.5 44.9,1708.3 39.3,1696.9 33.6,1685.3 28.0,1673.5 22.3,1661.5 16.7,1649.4 11.0,1637.1 5.4,1624.6 -0.2,1612.0 -5.8,1599.2 -11.3,1586.2 -16.9,1572.9 -22.5,1559.3 -28.2,1545.3 -33.8,1531.2 -39.5,1516.7 -45.2,1502.0 -50.9,1487.0 -56.6,1471.8 -62.2,1456.4 -67.9,1440.8 -73.6,1425.0 -79.3,1408.9 -84.9,1392.8 -90.6,1376.4 -96.2,1359.9 -101.8,1343.3 -107.3,1326.6 -112.8,1309.7 -118.3,1292.7 -123.8,1275.5 -129.3,1258.0 -134.9,1240.2 -140.5,1222.0 -146.1,1203.6 -151.7,1185.0 -157.3,1166.1 -162.9,1147.0 -168.4,1127.7 -173.9,1108.3 -179.4,1088.8 -184.8,1069.1 -190.1,1049.3 -195.3,1029.5 -200.4,1009.6 -205.4,989.7 -210.3,969.7 -215.0,949.9 -219.6,930.0 -224.1,910.2 -228.5,890.3 -232.9,870.3 -237.4,850.1 -241.9,829.7 -246.3,809.2 -250.8,788.6 -255.2,768.0 -259.5,747.2 -263.7,726.4 -267.8,705.7 -271.8,684.9 -275.6,664.1 -279.3,643.4 -282.7,622.8 -285.9,602.2 -288.9,581.8 -291.6,561.5 -294.1,541.4 -296.2,521.4 -298.0,501.7 -299.6,482.0 -301.2,462.3 -302.7,442.6 -304.3,423.0 -305.8,403.3 -307.2,383.7 -308.6,364.1 -309.9,344.7 -311.2,325.3 -312.4,306.0 -313.5,286.9 -314.5,267.9 -315.5,249.1 -316.3,230.4 -317.0,212.0 -317.6,193.8 -318.1,175.8 -318.4,158.0 -318.7,140.6 -318.7,123.4 -318.6,106.3 -318.0,89.3 -317.1,72.3 -315.9,55.3 -314.4,38.4 -312.7,21.7 -310.6,5.0 -308.4,-11.4 -305.9,-27.7 -303.2,-43.8 -300.4,-59.6 -297.4,-75.1 -294.2,-90.4 -291.0,-105.3 -287.7,-119.9 -284.3,-134.1 -280.8,-147.9 -277.4,-161.3 -273.9,-174.2 -270.4,-186.7 -266.8,-198.9 -262.7,-211.1 -258.3,-223.3 -253.6,-235.4 -248.5,-247.4 -243.1,-259.3 -237.5,-271.0 -231.6,-282.4 -225.5,-293.6 -219.1,-304.5 -212.6,-315.0 -205.9,-325.1 -199.1,-334.9 -192.2,-344.1 -185.2,-352.8 -178.2,-361.0 -171.0,-368.6 -163.9,-375.6 -156.8,-381.9 -149.7,-387.5 -142.5,-392.8 -135.1,-398.0 -127.4,-403.2 -119.6,-408.3 -111.6,-413.3 -103.4,-418.2 -95.0,-423.0 -86.5,-427.5 -77.9,-431.9 -69.2,-436.0 -60.3,-439.9 -51.4,-443.5 -42.4,-446.8 -33.4,-449.7 -24.3,-452.2 -15.2,-454.4 -6.0,-456.1 3.1,-457.3 12.2,-458.1 21.3,-458.4 30.4,-458.3 39.6,-458.0 48.9,-457.6 58.3,-457.0 67.8,-456.2 77.3,-455.3 86.9,-454.3 96.6,-453.1 106.3,-451.9 116.0,-450.5 125.8,-449.1 135.6,-447.5 145.4,-445.9 155.3,-444.3 165.1,-442.6 174.9,-440.8 184.7,-439.1 194.5,-437.3 204.3,-435.5 214.0,-433.7 223.7,-431.7 233.5,-429.6 243.3,-427.1 253.1,-424.5 263.0,-421.7 272.8,-418.7 282.7,-415.5 292.6,-412.2 302.5,-408.7 312.4,-405.2 322.2,-401.5 332.1,-397.8 341.9,-394.1 351.7,-390.3 361.5,-386.4 371.2,-382.6 380.9,-378.8 390.5,-375.0 400.1,-371.3 409.6,-367.7 419.1,-364.1 428.5,-360.4 438.0,-356.7 447.3,-353.0 456.7,-349.2 466.0,-345.3 475.3,-341.5 484.6,-337.6 493.8,-333.6 503.0,-329.7 512.2,-325.7 521.4,-321.7 530.5,-317.6 539.7,-313.5 548.8,-309.4 557.9,-305.3 567.0,-301.2 576.0,-297.1 585.1,-292.9 594.1,-288.7 603.2,-284.5 612.2,-280.3 621.1,-276.1 630.1,-271.8 639.0,-267.5 647.9,-263.1 656.8,-258.8 665.7,-254.4 674.5,-250.0 683.4,-245.5 692.2,-241.1 701.0,-236.6 709.8,-232.1 718.6,-227.6 727.4,-223.0 736.2,-218.4 745.0,-213.9 753.8,-209.3 762.6,-204.6 771.4,-200.0 780.2,-195.3 789.0,-190.7 797.8,-185.9 806.5,-181.2 815.3,-176.4 824.1,-171.6 832.8,-166.8 841.6,-162.0 850.3,-157.1 859.1,-152.2 867.8,-147.3 876.6,-142.4 885.3,-137.5 894.0,-132.5 902.7,-127.5 911.4,-122.5 920.1,-117.6 928.8,-112.5 937.5,-107.5 946.2,-102.5 954.9,-97.5 963.6,-92.4 972.3,-87.3 981.0,-82.2 989.6,-77.1 998.3,-71.9 1006.9,-66.8 1015.6,-61.6 1024.2,-56.4 1032.8,-51.2 1041.5,-46.0 1050.1,-40.7 1058.7,-35.5 1067.4,-30.2 1076.0,-25.0 1084.6,-19.7 1093.3,-14.4 1101.9,-9.1 1110.5,-3.8 1119.2,1.5 1127.8,6.8 1136.4,12.2 1145.0,17.5 1153.7,22.9 1162.3,28.2 1170.9,33.6 1179.5,39.0 1188.1,44.4 1196.8,49.9 1205.4,55.3 1214.0,60.7 1222.6,66.2 1231.2,71.6 1239.8,77.1 1248.5,82.6 1257.1,88.1 1265.7,93.5 1274.3,99.0 1283.0,104.5 1291.6,110.1 1300.2,115.6 1308.9,121.1 1317.5,126.6 1326.2,132.2 1334.8,137.7 1343.5,143.3 1352.1,148.9 1360.8,154.5 1369.4,160.0 1378.1,165.6 1386.7,171.2 1395.4,176.9 1404.0,182.5 1412.7,188.1 1421.3,193.7 1430.0,199.3 1438.6,205.0 1447.2,210.6 1455.9,216.2 1464.5,221.8 1473.1,227.5 1481.7,233.1 1490.4,238.8 1499.0,244.4 1507.6,250.1 1516.2,255.8 1524.8,261.4 1533.4,267.1 1542.0,272.8 1550.6,278.5 1559.2,284.1 1567.8,289.8 1576.4,295.5 1585.0,301.2 1593.6,306.9 1602.1,312.6 1610.7,318.2 1619.3,323.9 1627.9,329.6 1636.4,335.3 1645.0,340.9 1653.6,346.6 1662.2,352.3 1670.8,358.0 1679.3,363.7 1687.9,369.3 1696.5,375.0 1705.1,380.7 1713.6,386.4 1722.2,392.1 1730.8,397.7 1739.3,403.4 1747.9,409.1 1756.4,414.8 1764.9,420.4 1773.5,426.1 1782.0,431.8 1790.5,437.4 1799.0,443.1 1807.4,448.7 1815.9,454.3 1824.3,460.0 1832.8,465.6 1841.2,471.3 1849.7,476.9 1858.1,482.5 1866.5,488.2 1874.9,493.8 1883.4,499.4 1891.7,505.0 1900.1,510.6 1908.5,516.3 1916.9,521.9 1925.2,527.4 1933.6,533.0 1941.9,538.6 1950.2,544.2 1958.5,549.7 1966.8,555.3 1975.0,560.8 1983.3,566.4 1991.5,571.9 1999.8,577.4 2008.0,582.9 2016.2,588.4 2024.4,593.9 2032.6,599.4 2040.8,604.9 2049.0,610.4 2057.1,615.9 2065.3,621.4 2073.4,626.8 2081.5,632.3 2089.6,637.7 2097.7,643.1 2105.8,648.5 2113.8,653.9 2121.8,659.3 2129.8,664.7 2137.8,670.0 2145.8,675.4 2153.7,680.7 2161.7,686.0 2169.6,691.3 2177.5,696.7 2185.4,702.0 2193.3,707.2 2201.1,712.5 2209.0,717.8 2216.8,723.0 2224.6,728.3 2232.4,733.5 2240.2,738.7 2247.9,743.9 2255.6,749.1 2263.3,754.2 2271.0,759.4 2278.6,764.5 2286.2,769.6 2293.8,774.7 2301.4,779.7 2308.9,784.8 2316.4,789.8 2324.0,794.8 2331.5,799.9 2338.9,804.8 2346.4,809.8 2353.8,814.8 2361.3,819.7 2368.6,824.7 2376.0,829.6 2383.3,834.5 2390.6,839.3 2397.9,844.2 2405.1,849.0 2412.3,853.8 2419.4,858.6 2426.6,863.4 2433.6,868.1 2440.6,872.8 2447.6,877.5 2454.6,882.2 2461.6,886.9 2468.5,891.5 2475.4,896.2 2482.3,900.8 2489.1,905.4 2495.9,910.0 2502.7,914.6 2509.5,919.1 2516.2,923.6 2522.9,928.1 2529.5,932.6 2536.1,937.0 2542.6,941.4 2549.1,945.8 2555.5,950.1 2561.9,954.4 2568.2,958.6 2574.4,962.9 2580.6,967.0 2586.8,971.1 2592.9,975.3 2599.0,979.3 2605.0,983.4 2611.0,987.4 2617.0,991.4 2622.9,995.3 2628.7,999.3 2634.6,1003.2 2640.4,1007.1 2646.1,1010.9 2651.8,1014.7 2657.5,1018.5 2663.2,1022.3 2668.8,1026.1 2674.3,1029.8 2679.9,1033.5 2685.4,1037.2 2690.8,1040.9 2696.3,1044.5 2701.7,1048.1 2707.1,1051.7 2712.5,1055.3 2717.8,1058.9 2723.1,1062.5 2728.4,1066.0 2733.7,1069.5 2738.9,1073.0 2744.0,1076.5 2749.2,1080.0 2754.3,1083.4 2759.3,1086.7 2764.3,1090.1 2769.3,1093.4 2774.2,1096.7 2779.0,1099.9 2783.8,1103.1 2788.6,1106.3 2793.2,1109.4 2797.9,1112.5 2802.5,1115.6 2807.0,1118.6 2811.5,1121.6 2816.0,1124.6 2820.4,1127.5 2824.9,1130.5 2829.2,1133.4 2833.5,1136.2 2837.8,1139.1 2842.1,1141.9 2846.3,1144.7 2850.4,1147.4 2854.5,1150.2 2858.6,1152.9 2862.6,1155.5 2866.6,1158.2 2870.5,1160.8 2874.4,1163.4 2878.2,1166.0 2882.0,1168.5 2885.8,1171.0 2889.5,1173.5 2893.2,1176.0 2896.9,1178.5 2900.5,1180.9 2904.1,1183.3 2907.6,1185.7 2911.2,1188.1 2914.6,1190.4 2918.1,1192.8 2921.5,1195.1 2924.9,1197.3 2928.2,1199.6 2931.5,1201.8 2934.7,1204.0 2937.9,1206.1 2941.1,1208.3 2944.2,1210.4 2947.3,1212.5 2950.4,1214.5 2953.4,1216.5 2956.4,1218.6 2959.4,1220.6 2962.3,1222.6 2965.3,1224.5 2968.1,1226.5 2971.0,1228.4 2973.8,1230.3 2976.6,1232.2 2979.4,1234.1 2982.1,1235.9 2984.8,1237.7 2987.4,1239.5 2990.0,1241.2 2992.6,1242.9 2995.1,1244.6 2997.6,1246.3 3000.0,1247.9 3002.4,1249.5 3004.7,1251.1 3007.0,1252.6 3009.3,1254.2 3011.6,1255.7 3013.9,1257.2 3016.1,1258.7 3018.4,1260.2 3020.6,1261.7 3022.8,1263.2 3024.9,1264.6 3027.1,1266.1 3029.2,1267.5 3031.4,1268.9 3033.5,1270.3 3035.6,1271.7 3037.6,1273.1 3039.7,1274.5 3041.7,1275.8 3043.7,1277.2 3045.7,1278.5 3047.7,1279.8 3049.6,1281.1 3051.6,1282.4 3053.5,1283.7 3055.4,1285.0 3057.3,1286.2 3059.1,1287.5 3061.0,1288.7 3062.8,1289.9 3064.6,1291.1 3066.4,1292.3 3068.2,1293.5 3069.9,1294.7 3071.6,1295.8 3073.3,1297.0 3075.0,1298.1 3076.7,1299.2 3078.3,1300.3 3080.0,1301.4 3081.6,1302.5 3083.2,1303.5 3084.8,1304.6 3086.3,1305.7 3087.9,1306.7 3089.4,1307.8 3091.0,1308.8 3092.5,1309.8 3094.0,1310.8 3095.5,1311.8 3097.0,1312.9 3098.5,1313.8 3100.0,1314.8 3101.4,1315.8 3102.8,1316.8 3104.3,1317.7 3105.7,1318.7 3107.1,1319.6 3108.5,1320.6 3109.8,1321.5 3111.2,1322.4 3112.5,1323.3 3113.9,1324.2 3115.2,1325.1 3116.5,1326.0 3117.8,1326.9 3119.1,1327.7 3120.3,1328.6 3121.5,1329.4 3122.8,1330.2 3124.0,1331.0 3125.2,1331.8 3126.4,1332.6 3127.5,1333.4 3128.7,1334.2 3129.8,1334.9 3130.9,1335.7 3132.0,1336.4 3133.1,1337.1 3134.2,1337.9 3135.2,1338.6 3136.2,1339.2 3137.3,1339.9 3138.3,1340.6 3139.3,1341.3 3140.3,1341.9 3141.3,1342.6 3142.3,1343.2 3143.2,1343.9 3144.2,1344.5 3145.2,1345.2 3146.1,1345.8 3147.0,1346.4 3148.0,1347.0 3148.9,1347.6 3149.8,1348.3 3150.7,1348.8 3151.6,1349.4 3152.5,1350.0 3153.4,1350.6 3154.2,1351.2 3155.1,1351.7 3155.9,1352.3 3156.7,1352.8 3157.5,1353.4 3158.4,1353.9 3159.1,1354.4 3159.9,1354.9 3160.7,1355.5 3161.5,1356.0 3162.2,1356.5 3162.9,1356.9 3163.7,1357.4 3164.4,1357.9 3165.1,1358.4 3165.8,1358.8 3166.4,1359.3 3167.1,1359.7 3167.7,1360.1 3168.4,1360.6 3169.0,1361.0 3169.6,1361.4 3170.2,1361.8 3170.8,1362.2 3171.4,1362.6 3172.0,1363.0 3172.6,1363.4 3173.2,1363.8 3173.8,1364.2 3174.3,1364.6 3174.9,1364.9 3175.5,1365.3 3176.0,1365.7 3176.6,1366.1 3177.1,1366.4 3177.7,1366.8 3178.2,1367.1 3178.7,1367.5 3179.2,1367.8 3179.7,1368.2 3180.2,1368.5 3180.7,1368.8 3181.2,1369.2 3181.7,1369.5 3182.1,1369.8 3182.6,1370.1 3183.1,1370.4 3183.5,1370.7 3183.9,1371.0 3184.4,1371.3 3184.8,1371.6 3185.2,1371.8 3185.6,1372.1 3185.9,1372.4 3186.3,1372.6 3186.7,1372.9 3187.0,1373.1 3187.4,1373.3 3187.7,1373.6 3188.0,1373.8 3188.3,1374.0 3188.6,1374.2 3188.9,1374.4 3189.2,1374.6 3189.5,1374.8 3189.8,1375.0 3190.1,1375.2 3190.4,1375.4 3190.7,1375.5 3190.9,1375.7 3191.2,1375.9 3191.5,1376.1 3191.8,1376.3 3192.0,1376.5 3192.3,1376.7 3192.6,1376.8 3192.8,1377.0 3193.1,1377.2 3193.4,1377.4 3193.6,1377.5 3193.9,1377.7 3194.1,1377.9 3194.4,1378.0 3194.6,1378.2 3194.8,1378.4 3195.1,1378.5 3195.3,1378.7 3195.6,1378.8 3195.8,1379.0 3196.0,1379.2 3196.3,1379.3 3196.5,1379.5 3196.7,1379.6 3196.9,1379.8 3197.2,1379.9 3197.4,1380.1 3197.6,1380.2 3197.8,1380.3 3198.0,1380.5 3198.2,1380.6 3198.4,1380.8 3198.6,1380.9 3198.8,1381.0 3199.0,1381.2 3199.2,1381.3 3199.4,1381.4 3199.6,1381.6 3199.8,1381.7 3200.0,1381.8 3200.2,1381.9 3200.3,1382.1 3200.5,1382.2 3200.7,1382.3 3200.9,1382.4 3201.0,1382.5 3201.2,1382.6 3201.4,1382.8 3201.6,1382.9 3201.7,1383.0 3201.9,1383.1 3202.0,1383.2 3202.2,1383.3 3202.3,1383.4 3202.5,1383.5 3202.6,1383.6 3202.8,1383.7 3202.9,1383.8 3203.1,1383.9 3203.2,1384.0 3203.4,1384.1 3203.5,1384.2 3203.6,1384.3 3203.8,1384.4 3203.9,1384.5 3204.0,1384.5 3204.2,1384.6 3204.3,1384.7 3204.4,1384.8 3204.5,1384.9 3204.6,1384.9 3204.7,1385.0 3204.9,1385.1 3205.0,1385.2 3205.1,1385.3 3205.2,1385.3 3205.3,1385.4 3205.4,1385.5 3205.5,1385.6 3205.6,1385.6 3205.8,1385.7 3205.9,1385.8 3206.0,1385.9 3206.1,1385.9 3206.2,1386.0 3206.3,1386.1 3206.4,1386.1 3206.5,1386.2 3206.6,1386.3 3206.7,1386.4 3206.8,1386.4 3207.0,1386.5 3207.1,1386.6 3207.2,1386.6 3207.3,1386.7 3207.4,1386.8 3207.5,1386.9 3207.6,1386.9 3207.7,1387.0 3207.8,1387.1 3207.9,1387.1 3208.0,1387.2 3208.1,1387.3 3208.2,1387.3 3208.2,1387.4 3208.3,1387.4 3208.4,1387.5 3208.5,1387.6 3208.6,1387.6 3208.7,1387.7 3208.8,1387.7 3208.9,1387.8 3209.0,1387.9 3209.0,1387.9 3209.1,1388.0 3209.2,1388.0 3209.3,1388.1 3209.4,1388.1 3209.4,1388.2 3209.5,1388.2 3209.6,1388.3 3209.7,1388.3 3209.7,1388.4 3209.8,1388.4 3209.9,1388.5 3209.9,1388.5 3210.0,1388.6 3210.1,1388.6 3210.1,1388.6 3210.2,1388.7 3210.2,1388.7 3210.3,1388.8 3210.4,1388.8 3210.4,1388.8 3210.5,1388.9 3210.5,1388.9 3210.6,1388.9 3210.6,1389.0 3210.6,1389.0 3210.7,1389.0 3210.7,1389.0 3210.8,1389.1 3210.8,1389.1 3210.8,1389.1 3210.9,1389.1 3210.9,1389.2 3210.9,1389.2 3210.9,1389.2 3211.0,1389.2 3211.0,1389.2 3211.0,1389.2 3211.0,1389.2 L-1344,3592Z"/></clipPath><clipPath id="cqt"><path d="M2946.8,1211.5 942.4,9.0 386.9,2056.5Z"/></clipPath></defs><g clip-path="url(#cqr)"><g clip-path="url(#cql)"><rect x="1655" y="428" width="245" height="3" fill="url(#p0)"/><rect x="1655" y="431" width="245" height="3" fill="url(#p1)"/><rect x="1655" y="434" width="245" height="3" fill="url(#p2)"/><rect x="1655" y="437" width="245" height="3" fill="url(#p3)"/><rect x="1655" y="440" width="245" height="3" fill="url(#p4)"/><rect x="1655" y="443" width="245" height="3" fill="url(#p5)"/><rect x="1655" y="446" width="245" height="3" fill="url(#p6)"/><rect x="1655" y="449" width="245" height="3" fill="url(#p7)"/><rect x="1655" y="452" width="245" height="3" fill="url(#p8)"/><rect x="1655" y="455" width="245" height="3" fill="url(#p9)"/><rect x="1655" y="458" width="245" height="3" fill="url(#p10)"/><rect x="1655" y="461" width="245" height="3" fill="url(#p11)"/><rect x="1655" y="464" width="245" height="3" fill="url(#p12)"/><rect x="1655" y="467" width="245" height="3" fill="url(#p13)"/><rect x="1655" y="470" width="245" height="3" fill="url(#p14)"/><rect x="1655" y="473" width="245" height="3" fill="url(#p15)"/><rect x="1655" y="476" width="245" height="3" fill="url(#p16)"/><rect x="1655" y="479" width="245" height="3" fill="url(#p17)"/><rect x="1655" y="482" width="245" height="3" fill="url(#p18)"/><rect x="1655" y="485" width="245" height="3" fill="url(#p19)"/><rect x="1655" y="488" width="245" height="3" fill="url(#p20)"/><rect x="1655" y="491" width="245" height="3" fill="url(#p21)"/><rect x="1655" y="494" width="245" height="3" fill="url(#p22)"/><rect x="1655" y="497" width="245" height="3" fill="url(#p23)"/><rect x="1655" y="500" width="245" height="3" fill="url(#p24)"/><rect x="1655" y="503" width="245" height="3" fill="url(#p25)"/><rect x="1655" y="506" width="245" height="3" fill="url(#p26)"/><rect x="1655" y="509" width="245" height="3" fill="url(#p27)"/><rect x="1655" y="512" width="245" height="3" fill="url(#p28)"/><rect x="1655" y="515" width="245" height="3" fill="url(#p29)"/><rect x="1655" y="518" width="245" height="3" fill="url(#p30)"/><rect x="1655" y="521" width="245" height="3" fill="url(#p31)"/><rect x="1655" y="524" width="245" height="3" fill="url(#p32)"/><rect x="1655" y="527" width="245" height="3" fill="url(#p33)"/><rect x="1655" y="530" width="245" height="3" fill="url(#p34)"/><rect x="1655" y="533" width="245" height="3" fill="url(#p35)"/><rect x="1655" y="536" width="245" height="3" fill="url(#p36)"/><rect x="1655" y="539" width="245" height="3" fill="url(#p37)"/><rect x="1655" y="542" width="245" height="3" fill="url(#p38)"/><rect x="1655" y="545" width="245" height="3" fill="url(#p39)"/><rect x="1655" y="548" width="245" height="3" fill="url(#p40)"/><rect x="1655" y="551" width="245" height="3" fill="url(#p41)"/><rect x="1655" y="554" width="245" height="3" fill="url(#p42)"/><rect x="1655" y="557" width="245" height="3" fill="url(#p43)"/><rect x="1655" y="560" width="245" height="3" fill="url(#p44)"/><rect x="1655" y="563" width="245" height="3" fill="url(#p45)"/><rect x="1655" y="566" width="245" height="3" fill="url(#p46)"/><rect x="1655" y="569" width="245" height="3" fill="url(#p47)"/><rect x="1655" y="572" width="245" height="3" fill="url(#p48)"/><rect x="1655" y="575" width="245" height="3" fill="url(#p49)"/><rect x="1655" y="578" width="245" height="3" fill="url(#p50)"/><rect x="1655" y="581" width="245" height="3" fill="url(#p51)"/><rect x="1655" y="584" width="245" height="3" fill="url(#p52)"/><rect x="1655" y="587" width="245" height="3" fill="url(#p53)"/><rect x="1655" y="590" width="245" height="2" fill="url(#p54)"/></g><g clip-path="url(#cqt)"><rect x="1655" y="428" width="245" height="3" fill="url(#q0)"/><rect x="1655" y="431" width="245" height="3" fill="url(#q1)"/><rect x="1655" y="434" width="245" height="3" fill="url(#q2)"/><rect x="1655" y="437" width="245" height="3" fill="url(#q3)"/><rect x="1655" y="440" width="245" height="3" fill="url(#q4)"/><rect x="1655" y="443" width="245" height="3" fill="url(#q5)"/><rect x="1655" y="446" width="245" height="3" fill="url(#q6)"/><rect x="1655" y="449" width="245" height="3" fill="url(#q7)"/><rect x="1655" y="452" width="245" height="3" fill="url(#q8)"/><rect x="1655" y="455" width="245" height="3" fill="url(#q9)"/><rect x="1655" y="458" width="245" height="3" fill="url(#q10)"/><rect x="1655" y="461" width="245" height="3" fill="url(#q11)"/><rect x="1655" y="464" width="245" height="3" fill="url(#q12)"/><rect x="1655" y="467" width="245" height="3" fill="url(#q13)"/><rect x="1655" y="470" width="245" height="3" fill="url(#q14)"/><rect x="1655" y="473" width="245" height="3" fill="url(#q15)"/><rect x="1655" y="476" width="245" height="3" fill="url(#q16)"/><rect x="1655" y="479" width="245" height="3" fill="url(#q17)"/><rect x="1655" y="482" width="245" height="3" fill="url(#q18)"/><rect x="1655" y="485" width="245" height="3" fill="url(#q19)"/><rect x="1655" y="488" width="245" height="3" fill="url(#q20)"/><rect x="1655" y="491" width="245" height="3" fill="url(#q21)"/><rect x="1655" y="494" width="245" height="3" fill="url(#q22)"/><rect x="1655" y="497" width="245" height="3" fill="url(#q23)"/><rect x="1655" y="500" width="245" height="3" fill="url(#q24)"/><rect x="1655" y="503" width="245" height="3" fill="url(#q25)"/><rect x="1655" y="506" width="245" height="3" fill="url(#q26)"/><rect x="1655" y="509" width="245" height="3" fill="url(#q27)"/><rect x="1655" y="512" width="245" height="3" fill="url(#q28)"/><rect x="1655" y="515" width="245" height="3" fill="url(#q29)"/><rect x="1655" y="518" width="245" height="3" fill="url(#q30)"/><rect x="1655" y="521" width="245" height="3" fill="url(#q31)"/><rect x="1655" y="524" width="245" height="3" fill="url(#q32)"/><rect x="1655" y="527" width="245" height="3" fill="url(#q33)"/><rect x="1655" y="530" width="245" height="3" fill="url(#q34)"/><rect x="1655" y="533" width="245" height="3" fill="url(#q35)"/><rect x="1655" y="536" width="245" height="3" fill="url(#q36)"/><rect x="1655" y="539" width="245" height="3" fill="url(#q37)"/><rect x="1655" y="542" width="245" height="3" fill="url(#q38)"/><rect x="1655" y="545" width="245" height="3" fill="url(#q39)"/><rect x="1655" y="548" width="245" height="3" fill="url(#q40)"/><rect x="1655" y="551" width="245" height="3" fill="url(#q41)"/><rect x="1655" y="554" width="245" height="3" fill="url(#q42)"/><rect x="1655" y="557" width="245" height="3" fill="url(#q43)"/><rect x="1655" y="560" width="245" height="3" fill="url(#q44)"/><rect x="1655" y="563" width="245" height="3" fill="url(#q45)"/><rect x="1655" y="566" width="245" height="3" fill="url(#q46)"/><rect x="1655" y="569" width="245" height="3" fill="url(#q47)"/><rect x="1655" y="572" width="245" height="3" fill="url(#q48)"/><rect x="1655" y="575" width="245" height="3" fill="url(#q49)"/><rect x="1655" y="578" width="245" height="3" fill="url(#q50)"/><rect x="1655" y="581" width="245" height="3" fill="url(#q51)"/><rect x="1655" y="584" width="245" height="3" fill="url(#q52)"/><rect x="1655" y="587" width="245" height="3" fill="url(#q53)"/><rect x="1655" y="590" width="245" height="2" fill="url(#q54)"/></g></g>
<rect x="1655.8000000000002" y="428.0" width="242.99999999999994" height="164.2" fill="none" stroke="#9c9c9c" stroke-width="1.7"/>
<rect x="1769.2" y="501.2" width="15" height="15.6" fill="none" stroke="#ffffff" stroke-width="1.6"/>
<circle cx="1799.4" cy="512.5" r="4.7" fill="#c6c100" stroke="#0a0a0a" stroke-width="1.3"/>
<rect x="432" y="439.5" width="680.3" height="187" fill="#000000"/>
<rect x="456" y="448.2" width="114.1" height="153" fill="#e9e9df"/>
<rect x="457" y="449.2" width="112.1" height="151" fill="#c2c29a"/>
<rect x="457" y="524.6" width="112.1" height="75.6" fill="#bcbc96"/>
<text x="513.2" y="618" font-size="13.2" fill="#f4f4f4" text-anchor="middle">20%</text>
<rect x="589" y="448.2" width="114.1" height="153" fill="#e9e9df"/>
<rect x="590" y="449.2" width="112.1" height="151" fill="#c2c17e"/>
<rect x="590" y="524.6" width="112.1" height="75.6" fill="#baba78"/>
<text x="646.2" y="618" font-size="13.2" fill="#f4f4f4" text-anchor="middle">40%</text>
<rect x="722" y="448.2" width="114.1" height="153" fill="#e9e9df"/>
<rect x="723" y="449.2" width="112.1" height="151" fill="#c4c05f"/>
<rect x="723" y="524.6" width="112.1" height="75.6" fill="#bab855"/>
<text x="779.2" y="618" font-size="13.2" fill="#f4f4f4" text-anchor="middle">60%</text>
<rect x="855" y="448.2" width="114.1" height="153" fill="#e9e9df"/>
<rect x="856" y="449.2" width="112.1" height="151" fill="#c6c026"/>
<rect x="856" y="524.6" width="112.1" height="75.6" fill="#bcb818"/>
<text x="912.2" y="618" font-size="13.2" fill="#f4f4f4" text-anchor="middle">80%</text>
<rect x="988" y="448.2" width="114.1" height="153" fill="#e9e9df"/>
<rect x="989" y="449.2" width="112.1" height="151" fill="#cec800"/>
<rect x="989" y="524.6" width="112.1" height="75.6" fill="#c4be22"/>
<text x="1045.2" y="618" font-size="13.2" fill="#f4f4f4" text-anchor="middle">100%</text>
<text transform="translate(446.8,481.5) rotate(-90)" font-size="13.6" fill="#f4f4f4" text-anchor="middle" textLength="40" lengthAdjust="spacingAndGlyphs">Actual</text>
<text transform="translate(446.8,567.2) rotate(-90)" font-size="13.6" fill="#f4f4f4" text-anchor="middle" textLength="39.5" lengthAdjust="spacingAndGlyphs">Target</text>
<text x="59.2" y="678.5" font-size="31.4" fill="#f0f0f0" textLength="269.5" lengthAdjust="spacingAndGlyphs">Avg dE2000: 2.37</text>
<text x="53.4" y="725.5" font-size="31.4" fill="#f0f0f0" textLength="279.4" lengthAdjust="spacingAndGlyphs">Max dE2000: 4.21</text>
<text x="17.2" y="781" font-size="32.6" fill="#f0f0f0" textLength="253.8" lengthAdjust="spacingAndGlyphs">Current Reading</text>
<text x="18.2" y="822" font-size="27" fill="#f0f0f0" textLength="117.2" lengthAdjust="spacingAndGlyphs">x: 0.4428</text>
<text x="198.3" y="822" font-size="27" fill="#f0f0f0" textLength="117.6" lengthAdjust="spacingAndGlyphs">y: 0.5347</text>
<text x="18" y="868" font-size="27" fill="#f0f0f0" textLength="110.6" lengthAdjust="spacingAndGlyphs">fL: 54.09</text>
<text x="18" y="908" font-size="27" fill="#f0f0f0" textLength="182.6" lengthAdjust="spacingAndGlyphs">cd/m²: 185.32</text>
<rect x="411.5" y="687.3" width="287.1" height="207.7" fill="#232323"/>
<line x1="411.5" y1="875.1" x2="698.6" y2="875.1" stroke="#8c8c8c" stroke-width="1.6"/>
<line x1="411.5" y1="833.7" x2="698.6" y2="833.7" stroke="#8c8c8c" stroke-width="1.6"/>
<line x1="411.5" y1="792.3" x2="698.6" y2="792.3" stroke="#8c8c8c" stroke-width="1.6"/>
<line x1="411.5" y1="750.9" x2="698.6" y2="750.9" stroke="#8c8c8c" stroke-width="1.6"/>
<line x1="411.5" y1="709.5" x2="698.6" y2="709.5" stroke="#8c8c8c" stroke-width="1.6"/>
<rect x="438.8" y="709.3" width="77" height="185.7" fill="#000"/>
<rect x="440" y="710.5" width="74.6" height="183.9" fill="url(#rr)"/>
<rect x="514.9" y="734.3" width="77.5" height="160.7" fill="#000"/>
<rect x="516.1" y="735.5" width="75.1" height="158.9" fill="url(#rg)"/>
<rect x="592" y="849.7" width="77.4" height="45.3" fill="#000"/>
<rect x="593.2" y="850.9" width="75" height="43.5" fill="url(#rb)"/>
<path d="M411.5,901.5 V687.3 H698.6 V901.5" fill="none" stroke="#9a9a9a" stroke-width="1.7"/>
<line x1="411.5" y1="895" x2="698.6" y2="895" stroke="#9a9a9a" stroke-width="1.8"/>
<line x1="404.5" y1="875.1" x2="411.5" y2="875.1" stroke="#dddddd" stroke-width="1.6"/>
<text x="404.2" y="880.7" font-size="16" fill="#d6d6d6" text-anchor="end">96</text>
<line x1="404.5" y1="833.7" x2="411.5" y2="833.7" stroke="#dddddd" stroke-width="1.6"/>
<text x="404.2" y="839.3" font-size="16" fill="#d6d6d6" text-anchor="end">98</text>
<line x1="404.5" y1="792.3" x2="411.5" y2="792.3" stroke="#dddddd" stroke-width="1.6"/>
<text x="404.2" y="797.9" font-size="16" fill="#d6d6d6" text-anchor="end">100</text>
<line x1="404.5" y1="750.9" x2="411.5" y2="750.9" stroke="#dddddd" stroke-width="1.6"/>
<text x="404.2" y="756.5" font-size="16" fill="#d6d6d6" text-anchor="end">102</text>
<line x1="404.5" y1="709.5" x2="411.5" y2="709.5" stroke="#dddddd" stroke-width="1.6"/>
<text x="404.2" y="715.1" font-size="16" fill="#d6d6d6" text-anchor="end">104</text>
<text x="537.8" y="681.3" font-size="16.4" fill="#d6d6d6" text-anchor="middle" textLength="95" lengthAdjust="spacingAndGlyphs">RGB Balance</text>
<text x="555" y="913.8" font-size="16" fill="#d6d6d6" text-anchor="middle" textLength="41" lengthAdjust="spacingAndGlyphs">100%</text>
<rect x="723.8" y="652.5" width="827.8" height="31.6" fill="url(#th)"/>
<rect x="723.8" y="652.5" width="23.2" height="31.6" fill="#000"/>
<text x="935.4" y="674.2" font-size="15.6" fill="#f2f2f2" textLength="48" lengthAdjust="spacingAndGlyphs">20%</text>
<text x="1060" y="674.2" font-size="15.6" fill="#f2f2f2" textLength="48" lengthAdjust="spacingAndGlyphs">40%</text>
<text x="1184.7" y="674.2" font-size="15.6" fill="#f2f2f2" textLength="48" lengthAdjust="spacingAndGlyphs">60%</text>
<text x="1309.3" y="674.2" font-size="15.6" fill="#f2f2f2" textLength="48" lengthAdjust="spacingAndGlyphs">80%</text>
<text x="1434" y="674.2" font-size="15.6" fill="#f2f2f2" textLength="60.5" lengthAdjust="spacingAndGlyphs">100%</text>
<rect x="723.8" y="684.1" width="827.8" height="29.9625" fill="#404040"/>
<rect x="723.8" y="684.1" width="23.2" height="29.9625" fill="url(#tr)"/>
<line x1="723.8" y1="684.1" x2="747" y2="684.1" stroke="#1c1c1c" stroke-width="1"/>
<text x="752.4" y="706.1" font-size="18.2" fill="#f2f2f2" textLength="92.5" lengthAdjust="spacingAndGlyphs">x: CIE31</text>
<text x="935.2" y="706.1" font-size="18.2" fill="#f2f2f2" textLength="82" lengthAdjust="spacingAndGlyphs">0.3405</text>
<text x="1059.8" y="706.1" font-size="18.2" fill="#f2f2f2" textLength="82" lengthAdjust="spacingAndGlyphs">0.3655</text>
<text x="1184.5" y="706.1" font-size="18.2" fill="#f2f2f2" textLength="82" lengthAdjust="spacingAndGlyphs">0.3905</text>
<text x="1309.1" y="706.1" font-size="18.2" fill="#f2f2f2" textLength="82" lengthAdjust="spacingAndGlyphs">0.4161</text>
<text x="1433.8" y="706.1" font-size="18.2" fill="#f2f2f2" textLength="82" lengthAdjust="spacingAndGlyphs">0.4428</text>
<rect x="723.8" y="713.863" width="827.8" height="29.9625" fill="#808080"/>
<rect x="723.8" y="713.863" width="23.2" height="29.9625" fill="url(#tr)"/>
<line x1="723.8" y1="713.863" x2="747" y2="713.863" stroke="#1c1c1c" stroke-width="1"/>
<text x="752.4" y="735.863" font-size="18.2" fill="#f2f2f2" textLength="92.5" lengthAdjust="spacingAndGlyphs">y: CIE31</text>
<text x="935.2" y="735.863" font-size="18.2" fill="#f2f2f2" textLength="82" lengthAdjust="spacingAndGlyphs">0.3754</text>
<text x="1059.8" y="735.863" font-size="18.2" fill="#f2f2f2" textLength="82" lengthAdjust="spacingAndGlyphs">0.4150</text>
<text x="1184.5" y="735.863" font-size="18.2" fill="#f2f2f2" textLength="82" lengthAdjust="spacingAndGlyphs">0.4545</text>
<text x="1309.1" y="735.863" font-size="18.2" fill="#f2f2f2" textLength="82" lengthAdjust="spacingAndGlyphs">0.4949</text>
<text x="1433.8" y="735.863" font-size="18.2" fill="#f2f2f2" textLength="82" lengthAdjust="spacingAndGlyphs">0.5347</text>
<rect x="723.8" y="743.625" width="827.8" height="29.9625" fill="#404040"/>
<rect x="723.8" y="743.625" width="23.2" height="29.9625" fill="url(#tr)"/>
<line x1="723.8" y1="743.625" x2="747" y2="743.625" stroke="#1c1c1c" stroke-width="1"/>
<text x="752.4" y="765.625" font-size="18.2" fill="#f2f2f2" textLength="15.6" lengthAdjust="spacingAndGlyphs">Y</text>
<text x="935.2" y="765.625" font-size="18.2" fill="#f2f2f2" textLength="110" lengthAdjust="spacingAndGlyphs">189.1748</text>
<text x="1059.8" y="765.625" font-size="18.2" fill="#f2f2f2" textLength="110" lengthAdjust="spacingAndGlyphs">187.0608</text>
<text x="1184.5" y="765.625" font-size="18.2" fill="#f2f2f2" textLength="110" lengthAdjust="spacingAndGlyphs">185.3651</text>
<text x="1309.1" y="765.625" font-size="18.2" fill="#f2f2f2" textLength="110" lengthAdjust="spacingAndGlyphs">184.3504</text>
<text x="1433.8" y="765.625" font-size="18.2" fill="#f2f2f2" textLength="110" lengthAdjust="spacingAndGlyphs">185.3234</text>
<rect x="723.8" y="773.388" width="827.8" height="29.9625" fill="#808080"/>
<rect x="723.8" y="773.388" width="23.2" height="29.9625" fill="url(#tr)"/>
<line x1="723.8" y1="773.388" x2="747" y2="773.388" stroke="#1c1c1c" stroke-width="1"/>
<text x="752.4" y="795.388" font-size="18.2" fill="#f2f2f2" textLength="167" lengthAdjust="spacingAndGlyphs">Target x:CIE31</text>
<text x="935.2" y="795.388" font-size="18.2" fill="#f2f2f2" textLength="82" lengthAdjust="spacingAndGlyphs">0.3406</text>
<text x="1059.8" y="795.388" font-size="18.2" fill="#f2f2f2" textLength="82" lengthAdjust="spacingAndGlyphs">0.3657</text>
<text x="1184.5" y="795.388" font-size="18.2" fill="#f2f2f2" textLength="82" lengthAdjust="spacingAndGlyphs">0.3916</text>
<text x="1309.1" y="795.388" font-size="18.2" fill="#f2f2f2" textLength="82" lengthAdjust="spacingAndGlyphs">0.4168</text>
<text x="1433.8" y="795.388" font-size="18.2" fill="#f2f2f2" textLength="82" lengthAdjust="spacingAndGlyphs">0.4378</text>
<rect x="723.8" y="803.15" width="827.8" height="29.9625" fill="#404040"/>
<rect x="723.8" y="803.15" width="23.2" height="29.9625" fill="url(#tr)"/>
<line x1="723.8" y1="803.15" x2="747" y2="803.15" stroke="#1c1c1c" stroke-width="1"/>
<text x="752.4" y="825.15" font-size="18.2" fill="#f2f2f2" textLength="167" lengthAdjust="spacingAndGlyphs">Target y:CIE31</text>
<text x="935.2" y="825.15" font-size="18.2" fill="#f2f2f2" textLength="82" lengthAdjust="spacingAndGlyphs">0.3751</text>
<text x="1059.8" y="825.15" font-size="18.2" fill="#f2f2f2" textLength="82" lengthAdjust="spacingAndGlyphs">0.4166</text>
<text x="1184.5" y="825.15" font-size="18.2" fill="#f2f2f2" textLength="82" lengthAdjust="spacingAndGlyphs">0.4594</text>
<text x="1309.1" y="825.15" font-size="18.2" fill="#f2f2f2" textLength="82" lengthAdjust="spacingAndGlyphs">0.5010</text>
<text x="1433.8" y="825.15" font-size="18.2" fill="#f2f2f2" textLength="82" lengthAdjust="spacingAndGlyphs">0.5359</text>
<rect x="723.8" y="832.913" width="827.8" height="29.9625" fill="#808080"/>
<rect x="723.8" y="832.913" width="23.2" height="29.9625" fill="url(#tr)"/>
<line x1="723.8" y1="832.913" x2="747" y2="832.913" stroke="#1c1c1c" stroke-width="1"/>
<text x="752.4" y="854.913" font-size="18.2" fill="#f2f2f2" textLength="97" lengthAdjust="spacingAndGlyphs">Target Y</text>
<text x="935.2" y="854.913" font-size="18.2" fill="#f2f2f2" textLength="110" lengthAdjust="spacingAndGlyphs">177.8711</text>
<text x="1059.8" y="854.913" font-size="18.2" fill="#f2f2f2" textLength="110" lengthAdjust="spacingAndGlyphs">174.5568</text>
<text x="1184.5" y="854.913" font-size="18.2" fill="#f2f2f2" textLength="110" lengthAdjust="spacingAndGlyphs">171.8631</text>
<text x="1309.1" y="854.913" font-size="18.2" fill="#f2f2f2" textLength="110" lengthAdjust="spacingAndGlyphs">169.7452</text>
<text x="1433.8" y="854.913" font-size="18.2" fill="#f2f2f2" textLength="110" lengthAdjust="spacingAndGlyphs">168.2569</text>
<rect x="723.8" y="862.675" width="827.8" height="29.9625" fill="#404040"/>
<rect x="723.8" y="862.675" width="23.2" height="29.9625" fill="url(#tr)"/>
<line x1="723.8" y1="862.675" x2="747" y2="862.675" stroke="#1c1c1c" stroke-width="1"/>
<text x="752.4" y="884.675" font-size="18.2" fill="#f2f2f2" textLength="99" lengthAdjust="spacingAndGlyphs">ΔE 2000</text>
<text x="935.2" y="884.675" font-size="18.2" fill="#f2f2f2" textLength="82" lengthAdjust="spacingAndGlyphs">1.3969</text>
<text x="1059.8" y="884.675" font-size="18.2" fill="#f2f2f2" textLength="82" lengthAdjust="spacingAndGlyphs">1.5479</text>
<text x="1184.5" y="884.675" font-size="18.2" fill="#f2f2f2" textLength="82" lengthAdjust="spacingAndGlyphs">1.7183</text>
<text x="1309.1" y="884.675" font-size="18.2" fill="#f2f2f2" textLength="82" lengthAdjust="spacingAndGlyphs">1.8815</text>
<text x="1433.8" y="884.675" font-size="18.2" fill="#f2f2f2" textLength="82" lengthAdjust="spacingAndGlyphs">2.5762</text>
<rect x="723.8" y="892.438" width="827.8" height="29.9625" fill="#808080"/>
<rect x="723.8" y="892.438" width="23.2" height="29.9625" fill="url(#tr)"/>
<line x1="723.8" y1="892.438" x2="747" y2="892.438" stroke="#1c1c1c" stroke-width="1"/>
<text x="752.4" y="914.438" font-size="18.2" fill="#f2f2f2" textLength="77.5" lengthAdjust="spacingAndGlyphs">ΔE ITP</text>
<text x="935.2" y="914.438" font-size="18.2" fill="#f2f2f2" textLength="82" lengthAdjust="spacingAndGlyphs">4.6084</text>
<text x="1059.8" y="914.438" font-size="18.2" fill="#f2f2f2" textLength="82" lengthAdjust="spacingAndGlyphs">5.2365</text>
<text x="1184.5" y="914.438" font-size="18.2" fill="#f2f2f2" textLength="82" lengthAdjust="spacingAndGlyphs">6.1331</text>
<text x="1309.1" y="914.438" font-size="18.2" fill="#f2f2f2" textLength="82" lengthAdjust="spacingAndGlyphs">6.9949</text>
<text x="1433.8" y="914.438" font-size="18.2" fill="#f2f2f2" textLength="82" lengthAdjust="spacingAndGlyphs">8.3763</text>
<rect x="0" y="0" width="1.3" height="1038" fill="#555555"/>
<rect x="0" y="1038.3" width="1920" height="62.7" fill="url(#bb)"/>
<rect x="0" y="1037.6" width="808" height="63.4" fill="#2c2c2c"/>
<rect x="2.3" y="1038.6" width="44.6" height="60.2" rx="4.5" fill="url(#bt)" stroke="#2c2c2c" stroke-width="1"/>
<circle cx="24.4" cy="1047.6" r="7.2" fill="url(#ic)"/>
<path d="M20.6,1049.2 L28.2,1049.2 L24.4,1044.6Z" fill="#111"/>
<rect x="7.3" y="1064.4" width="34.6" height="29.6" rx="3.5" fill="#ffff00" stroke="#b9b900" stroke-width="0.8"/>
<rect x="52.8" y="1038.6" width="148.5" height="60.2" rx="4.5" fill="url(#bt)" stroke="#2c2c2c" stroke-width="1"/>
<rect x="58.2" y="1043.8" width="138" height="35.2" rx="3.5" fill="#c2c29e" stroke="#8e8e7a" stroke-width="0.8"/>
<text x="127" y="1093.9" font-size="10.6" fill="#2b2b2b" text-anchor="middle" font-weight="bold" fill-opacity="0.9">20%</text>
<rect x="203.55" y="1038.6" width="148.5" height="60.2" rx="4.5" fill="url(#bt)" stroke="#2c2c2c" stroke-width="1"/>
<rect x="208.95" y="1043.8" width="138" height="35.2" rx="3.5" fill="#c3c286" stroke="#8e8e7a" stroke-width="0.8"/>
<text x="277.75" y="1093.9" font-size="10.6" fill="#2b2b2b" text-anchor="middle" font-weight="bold" fill-opacity="0.9">40%</text>
<rect x="354.3" y="1038.6" width="148.5" height="60.2" rx="4.5" fill="url(#bt)" stroke="#2c2c2c" stroke-width="1"/>
<rect x="359.7" y="1043.8" width="138" height="35.2" rx="3.5" fill="#c4c166" stroke="#8e8e7a" stroke-width="0.8"/>
<text x="428.5" y="1093.9" font-size="10.6" fill="#2b2b2b" text-anchor="middle" font-weight="bold" fill-opacity="0.9">60%</text>
<rect x="505.05" y="1038.6" width="148.5" height="60.2" rx="4.5" fill="url(#bt)" stroke="#2c2c2c" stroke-width="1"/>
<rect x="510.45" y="1043.8" width="138" height="35.2" rx="3.5" fill="#c5c04a" stroke="#8e8e7a" stroke-width="0.8"/>
<text x="579.25" y="1093.9" font-size="10.6" fill="#2b2b2b" text-anchor="middle" font-weight="bold" fill-opacity="0.9">80%</text>
<rect x="655.8" y="1038.6" width="148.5" height="60.2" rx="4.5" fill="url(#bs)" stroke="#181818" stroke-width="1"/>
<rect x="661.2" y="1043.8" width="138" height="35.2" rx="3.5" fill="#c4c000" stroke="#8f8c00" stroke-width="0.8"/>
<text x="730" y="1093.9" font-size="10.6" fill="#ffffff" text-anchor="middle" font-weight="bold">100%</text>
<rect x="141" y="1100.2" width="109" height="0.8" fill="#b45fa6"/>
<rect x="250" y="1100.2" width="230" height="0.8" fill="#8c4a40"/>
<rect x="1872" y="1038.3" width="48" height="31" fill="#2b2b2b"/>
<circle cx="1895" cy="1052" r="8" fill="#222222"/>
<rect x="1598.7" y="1058.6" width="47" height="39.8" rx="3" fill="url(#g1)" stroke="#3a3a3a" stroke-width="1"/>
<rect x="1608.2" y="1064" width="28.6" height="26.6" rx="4" fill="#a9a9a9" stroke="#1c1c1c" stroke-width="2.6"/>
<rect x="1615.6" y="1071.3" width="13.2" height="13" fill="#000"/>
<rect x="1646.7" y="1038.3" width="225.3" height="30" fill="url(#g1)"/>
<line x1="1693.3" y1="1038.3" x2="1693.3" y2="1068.3" stroke="#3c3c3c" stroke-width="1"/>
<line x1="1694.3" y1="1038.3" x2="1694.3" y2="1068.3" stroke="#9a9a9a" stroke-width="0.8"/>
<line x1="1738.4" y1="1038.3" x2="1738.4" y2="1068.3" stroke="#3c3c3c" stroke-width="1"/>
<line x1="1739.4" y1="1038.3" x2="1739.4" y2="1068.3" stroke="#9a9a9a" stroke-width="0.8"/>
<line x1="1782.9" y1="1038.3" x2="1782.9" y2="1068.3" stroke="#3c3c3c" stroke-width="1"/>
<line x1="1783.9" y1="1038.3" x2="1783.9" y2="1068.3" stroke="#9a9a9a" stroke-width="0.8"/>
<line x1="1827.7" y1="1038.3" x2="1827.7" y2="1068.3" stroke="#3c3c3c" stroke-width="1"/>
<line x1="1828.7" y1="1038.3" x2="1828.7" y2="1068.3" stroke="#9a9a9a" stroke-width="0.8"/>
<circle cx="1670" cy="1052.2" r="8.2" fill="#8a8a8a" stroke="#b6b6b6" stroke-width="1.6"/>
<rect x="1667.2" y="1049.2" width="5.6" height="6" fill="#2a2a2a"/>
<circle cx="1716" cy="1052.2" r="8.2" fill="#8a8a8a" stroke="#b6b6b6" stroke-width="1.6"/>
<rect x="1713.2" y="1049.2" width="5.6" height="6" fill="#2a2a2a"/>
<circle cx="1760.6" cy="1052.2" r="8.2" fill="#8a8a8a" stroke="#b6b6b6" stroke-width="1.6"/>
<rect x="1757.8" y="1049.2" width="5.6" height="6" fill="#2a2a2a"/>
<circle cx="1805.3" cy="1052.2" r="8.2" fill="#8a8a8a" stroke="#b6b6b6" stroke-width="1.6"/>
<rect x="1802.5" y="1049.2" width="5.6" height="6" fill="#2a2a2a"/>
<circle cx="1849.8" cy="1052.2" r="8.2" fill="#8a8a8a" stroke="#b6b6b6" stroke-width="1.6"/>
<rect x="1847.0" y="1049.2" width="5.6" height="6" fill="#2a2a2a"/>
<line x1="1646.7" y1="1068.6" x2="1872" y2="1068.6" stroke="#2e2e2e" stroke-width="1.2"/>
<rect x="1647" y="1069.3" width="270.8" height="29.2" rx="4" fill="url(#g2)" stroke="#3a3a3a" stroke-width="1"/>
<line x1="1782.5" y1="1069.6" x2="1782.5" y2="1098.2" stroke="#3c3c3c" stroke-width="1.2"/>
<line x1="1783.7" y1="1069.6" x2="1783.7" y2="1098.2" stroke="#b4b4b4" stroke-width="0.8"/>
<circle cx="1677.9" cy="1084" r="9.5" fill="url(#g3)"/>
<path d="M1679,1079.6 L1674.6,1084 L1679,1088.4" fill="none" stroke="#303030" stroke-width="1.5"/>
<path d="M1683.7,1079.6 L1679.3,1084 L1683.7,1088.4" fill="none" stroke="#303030" stroke-width="1.5"/>
<circle cx="1889.7" cy="1084" r="9.5" fill="url(#g3)"/>
<path d="M1888.6,1079.6 L1893,1084 L1888.6,1088.4" fill="none" stroke="#303030" stroke-width="1.5"/>
<path d="M1883.9,1079.6 L1888.3,1084 L1883.9,1088.4" fill="none" stroke="#303030" stroke-width="1.5"/>
<text x="1704.9" y="1091" font-size="20.2" fill="#2e2e2e" textLength="48.9" lengthAdjust="spacingAndGlyphs">Back</text>
<text x="1810.6" y="1091" font-size="20.2" fill="#2e2e2e" textLength="50.4" lengthAdjust="spacingAndGlyphs">Next</text>
<g opacity="0.92">
<path d="M1590.2,1058.4 L1588.6,1031.4 L1540.2,1021.4 L1542.2,1068.6 L1571.8,1083.4 L1625.2,1066.8" fill="none" stroke="#b4b4b4" stroke-opacity="0.8" stroke-width="6.8" stroke-linejoin="miter"/>
<path d="M1590.2,1058.4 L1588.6,1031.4 L1540.2,1021.4 L1542.2,1068.6 L1571.8,1083.4 L1625.2,1066.8" fill="none" stroke="#8c2b31" stroke-width="4.2" stroke-linejoin="miter"/>
<path d="M1591.4,1057 L1550.2,1062.2 L1550.8,1064.6 L1591.6,1060Z" fill="#8c2b31" stroke="#b4b4b4" stroke-opacity="0.75" stroke-width="1"/>
<path d="M1626,1066 L1595,1060.2 L1595.4,1062.4Z" fill="#8c2b31" stroke="#b4b4b4" stroke-opacity="0.75" stroke-width="1"/>
<path d="M1552,1037.2 C1555,1034 1558.5,1032.4 1561,1033.6 C1564.5,1036 1567,1040 1569.4,1043.6 C1577,1033 1587,1022.5 1595.6,1017.8 C1597.2,1018.2 1596.6,1020 1595.8,1020.8 C1585,1031 1576,1044 1571.4,1053 L1567.4,1056.8 C1564,1048 1559,1040 1552,1037.2Z" fill="#343434" stroke="#bdbdbd" stroke-opacity="0.85" stroke-width="1.1"/>
</g>
<text x="1597.6" y="1057.3" font-size="35" font-weight="bold" textLength="194.5" lengthAdjust="spacingAndGlyphs" fill="none" stroke="#dedede" stroke-opacity="0.72" stroke-width="3.5" stroke-linejoin="round">NOTEBOOK</text>
<g opacity="0.76"><text x="1597.6" y="1057.3" font-size="35" font-weight="bold" textLength="194.5" lengthAdjust="spacingAndGlyphs" fill="#8d2730" stroke="#8d2730" stroke-width="1.1" stroke-linejoin="round">NOTEBOOK</text></g>
<text x="1793.6" y="1057.3" font-size="35" font-weight="bold" textLength="117.2" lengthAdjust="spacingAndGlyphs" fill="none" stroke="#dedede" stroke-opacity="0.72" stroke-width="3.5" stroke-linejoin="round">CHECK</text>
<g opacity="0.78"><text x="1793.6" y="1057.3" font-size="35" font-weight="bold" textLength="117.2" lengthAdjust="spacingAndGlyphs" fill="#262626" stroke="#262626" stroke-width="1.1" stroke-linejoin="round">CHECK</text></g>
<rect x="1913" y="0" width="5.8" height="1101" fill="url(#rs)"/>
<rect x="1918.8" y="0" width="1.2" height="613" fill="#1d1d1d"/>
<rect x="1918.8" y="613" width="1.2" height="379" fill="#31476b"/>
<rect x="1918.8" y="992" width="1.2" height="109" fill="#3d463d"/></svg></body></html>
